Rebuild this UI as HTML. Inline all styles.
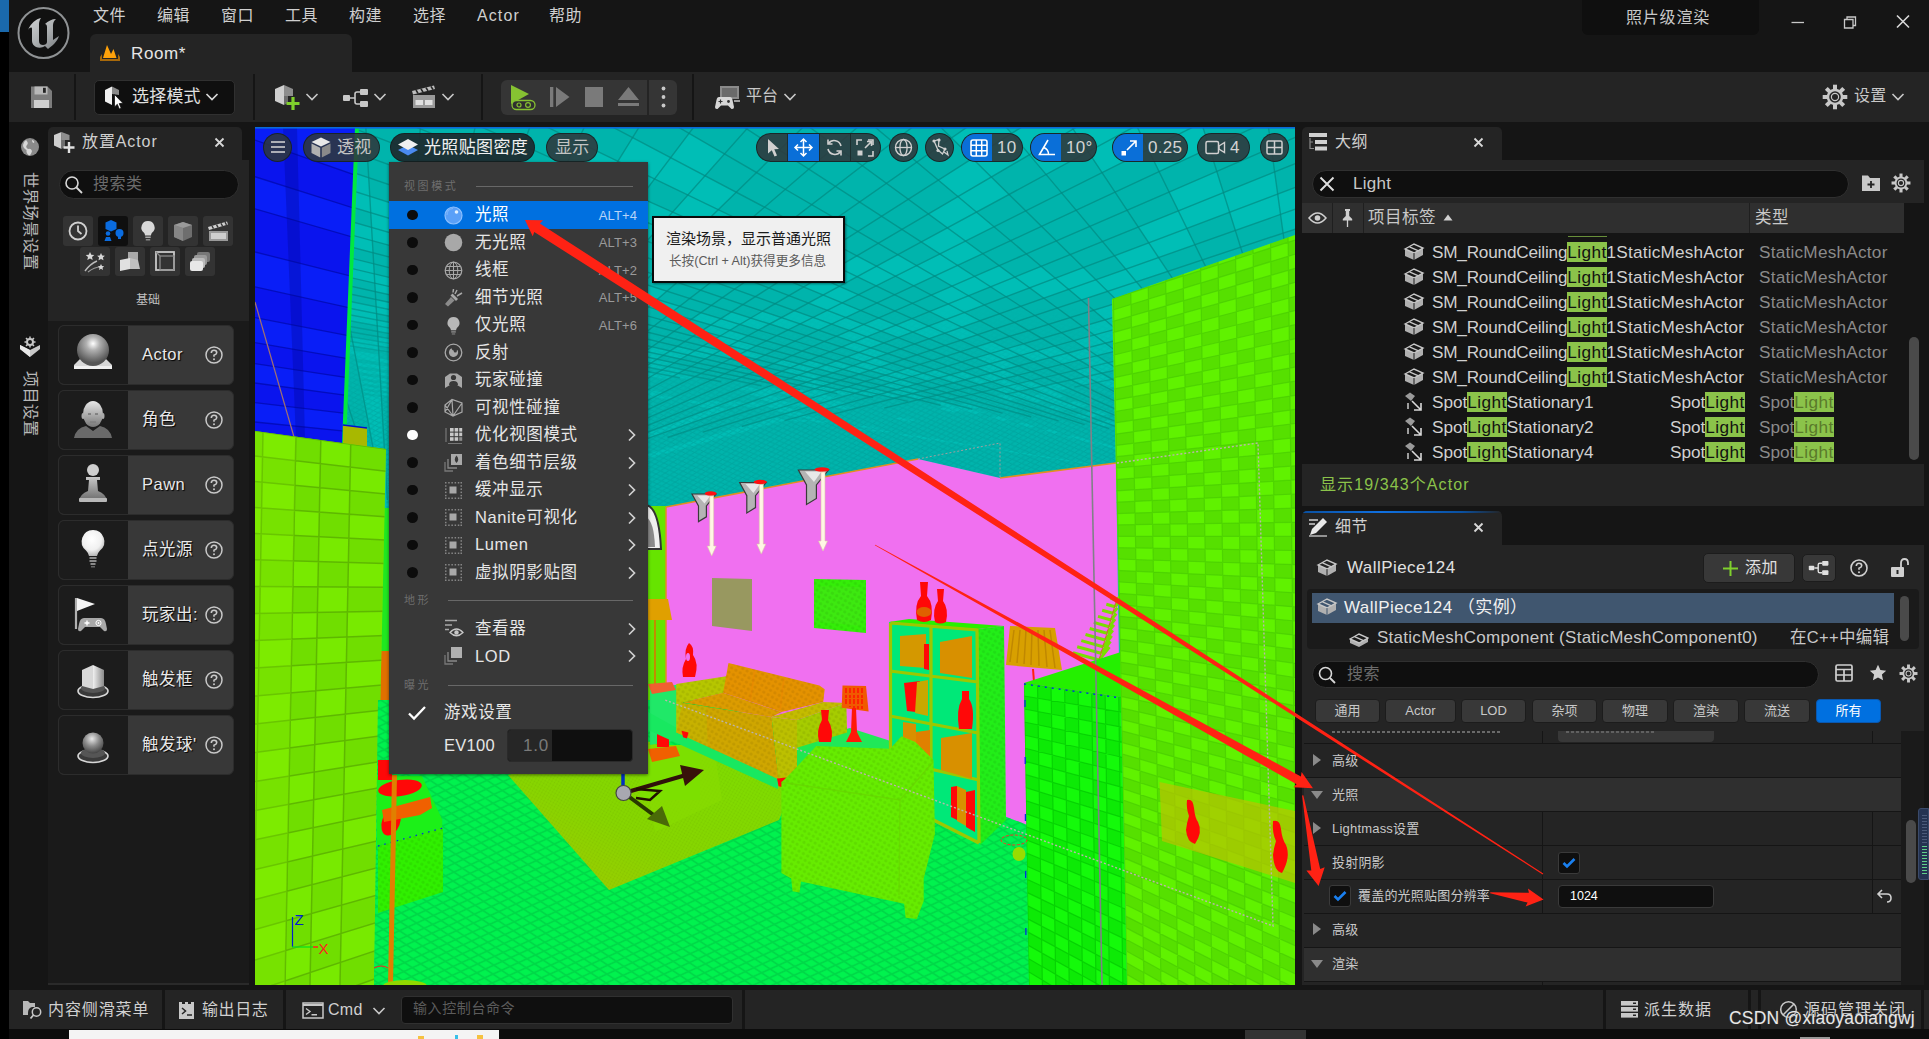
<!DOCTYPE html>
<html lang="zh">
<head>
<meta charset="utf-8">
<title>Room - Unreal Editor</title>
<style>
*{box-sizing:border-box;margin:0;padding:0}
html,body{width:1929px;height:1039px;overflow:hidden;background:#000}
body{font-family:"Liberation Sans","Noto Sans CJK SC",sans-serif;color:#c8c8c8;font-size:15px;position:relative}
.a{position:absolute}
.t{position:absolute;white-space:nowrap;line-height:1}
svg{position:absolute;overflow:visible}
#root{position:absolute;left:0;top:0;width:1929px;height:1039px;overflow:hidden;background:#151515}

.ol{font-size:17.2px;color:#d0d0d0;letter-spacing:0.18px;line-height:24px}
.ol span{letter-spacing:0.42px}.ol em{font-style:normal;letter-spacing:-0.22px}
.ty{color:#8a8a8a;letter-spacing:0.23px}
.fb{top:699px;height:24px;background:#383838;border:1px solid #1c1c1c;border-radius:4px;font-size:13px;color:#c8c8c8;text-align:center;line-height:22px}
.pr{left:0;width:597px;height:33px;background:#242424}
.cat{background:#2f2f2f}
.pt{font-size:13px;color:#c8c8c8;letter-spacing:0.2px}
.cb{width:22px;height:22px;background:#0f0f0f;border:1px solid #3a3a3a;border-radius:3px}
</style>
</head>
<body>
<div id="root">
<!--LEFTSTRIP-->
<div class="a" style="left:0;top:0;width:9px;height:1039px;background:#000"></div>
<div class="a" style="left:0;top:0;width:9px;height:32px;background:#1a69ac"></div>

<!-- title bar -->
<div class="a" style="left:9px;top:0;width:1920px;height:72px;background:#151515"></div>
<svg style="left:17px;top:6px" width="54" height="54" viewBox="0 0 54 54">
 <defs><linearGradient id="lg1" x1="0" y1="0" x2="1" y2="1"><stop offset="0" stop-color="#d0d2d3"/><stop offset="0.5" stop-color="#aeb1b3"/><stop offset="1" stop-color="#7b7f82"/></linearGradient></defs>
 <circle cx="26.5" cy="27" r="25" fill="#111" stroke="#8f9294" stroke-width="2"/>
 <path d="M11 24 C14 17 19 13 24 12 C22 15 22 17 22 19 L22 35 C22 38 24 39 26 39 C28 39 30 38 30 36 L30 21 C30 19 29 18 28 18 C31 15 35 13 39 13 C36 16 36 18 36 21 L36 34 L42 30 C40 36 35 40 31 43 L28 40 C25 42 22 42 19 41 C17 40 15 38 15 35 L15 23 C15 21 13 21 11 24 Z" fill="url(#lg1)"/>
</svg>
<div class="t" style="left:93px;top:8px;font-size:16px;color:#cfcfcf;letter-spacing:0.5px">文件</div>
<div class="t" style="left:157px;top:8px;font-size:16px;color:#cfcfcf;letter-spacing:0.5px">编辑</div>
<div class="t" style="left:221px;top:8px;font-size:16px;color:#cfcfcf;letter-spacing:0.5px">窗口</div>
<div class="t" style="left:285px;top:8px;font-size:16px;color:#cfcfcf;letter-spacing:0.5px">工具</div>
<div class="t" style="left:349px;top:8px;font-size:16px;color:#cfcfcf;letter-spacing:0.5px">构建</div>
<div class="t" style="left:413px;top:8px;font-size:16px;color:#cfcfcf;letter-spacing:0.5px">选择</div>
<div class="t" style="left:477px;top:8px;font-size:16px;color:#cfcfcf;letter-spacing:1.1px">Actor</div>
<div class="t" style="left:549px;top:8px;font-size:16px;color:#cfcfcf;letter-spacing:0.5px">帮助</div>
<div class="a" style="left:90px;top:34px;width:262px;height:40px;background:#242424;border-radius:6px 6px 0 0"></div>
<svg style="left:99px;top:44px" width="22" height="20" viewBox="0 0 22 20">
 <path d="M1 13 L3 10 L3 15 L19 15 L19 10 L21 13 L21 17 L1 17 Z" fill="#a8690a"/>
 <path d="M4 14 L8 1 L12 10 L14.5 5 L17.5 14 Z" fill="#ffa20a"/>
</svg>
<div class="t" style="left:131px;top:45px;font-size:17px;color:#e6e6e6;letter-spacing:0.6px">Room*</div>
<div class="a" style="left:1582px;top:0;width:177px;height:35px;background:#0f0f0f;border-radius:0 0 6px 6px"></div>
<div class="t" style="left:1626px;top:10px;font-size:16px;color:#c8c8c8;letter-spacing:0.8px">照片级渲染</div>
<svg style="left:1785px;top:10px" width="130" height="24" viewBox="0 0 130 24">
 <path d="M6.5 12.5 H19" stroke="#c8c8c8" stroke-width="1.3" fill="none"/>
 <path d="M59.5 9.5 h8.5 v8.5 h-8.5 z M62 9.5 v-2.5 h8.5 v8.5 h-2.5" stroke="#c8c8c8" stroke-width="1.3" fill="none"/>
 <path d="M112 5.5 L124 17.5 M124 5.5 L112 17.5" stroke="#d8d8d8" stroke-width="1.6" fill="none"/>
</svg>


<!-- toolbar -->
<div class="a" style="left:9px;top:72px;width:1920px;height:50px;background:#242424"></div>
<div class="a" style="left:74px;top:74px;width:2px;height:46px;background:#151515"></div>
<div class="a" style="left:253px;top:74px;width:2px;height:46px;background:#151515"></div>
<div class="a" style="left:481px;top:74px;width:2px;height:46px;background:#151515"></div>
<div class="a" style="left:692px;top:74px;width:2px;height:46px;background:#151515"></div>
<svg style="left:30px;top:86px" width="23" height="23" viewBox="0 0 23 23">
 <path d="M1 0.5 H17.5 L22 5 V22 H1 Z" fill="#7d7d7d"/>
 <rect x="4.5" y="0.5" width="13" height="8" fill="#b8b8b8"/><rect x="13" y="1.8" width="2.8" height="5" fill="#222"/>
 <rect x="4" y="14" width="15" height="8" fill="#d0d0d0"/>
</svg>
<div class="a" style="left:94px;top:80px;width:141px;height:35px;background:#0f0f0f;border:1px solid #303030;border-radius:5px"></div>
<svg style="left:104px;top:86px" width="20" height="24" viewBox="0 0 20 24">
 <path d="M1 4 L8 0.5 L8 19 L1 15.5 Z" fill="#f0f0f0"/><path d="M8 0.5 L15 4 L15 9 L8 8 Z" fill="#8a8a8a"/>
 <path d="M10.5 8.5 L10.5 21 L13.3 18.3 L15.3 23 L17.2 22.2 L15.2 17.6 L19 17.3 Z" fill="#fff" stroke="#111" stroke-width="0.8"/>
</svg>
<div class="t" style="left:132px;top:88px;font-size:17px;color:#e0e0e0;letter-spacing:0.2px">选择模式</div>
<svg style="left:205px;top:92px" width="14" height="10" viewBox="0 0 14 10"><path d="M1.5 2 L7 7.5 L12.5 2" stroke="#d8d8d8" stroke-width="1.7" fill="none"/></svg>
<!-- add -->
<svg style="left:274px;top:84px" width="28" height="27" viewBox="0 0 28 27">
 <path d="M1 5 L10 1 L10 21 L1 17 Z" fill="#cfcfcf"/><path d="M10 1 L19 5 L19 12 L10 12 Z" fill="#8d8d8d"/><path d="M10 12 L14 12 L14 19 L10 21 Z" fill="#6d6d6d"/>
 <path d="M19 13 V26 M12.5 19.5 H25.5" stroke="#7fd02c" stroke-width="3.2" fill="none"/>
</svg>
<svg style="left:305px;top:92px" width="14" height="10" viewBox="0 0 14 10"><path d="M1.5 2 L7 7.5 L12.5 2" stroke="#c8c8c8" stroke-width="1.6" fill="none"/></svg>
<!-- blueprint -->
<svg style="left:342px;top:88px" width="28" height="20" viewBox="0 0 28 20">
 <rect x="1" y="7" width="7" height="6" rx="1" fill="#c8c8c8"/><rect x="18" y="1" width="8" height="6" rx="1" fill="#c8c8c8"/><rect x="18" y="13" width="8" height="6" rx="1" fill="#c8c8c8"/>
 <path d="M8 10 H13 M18 4 H15 Q13 4 13 6 V14 Q13 16 15 16 H18" stroke="#c8c8c8" stroke-width="1.6" fill="none"/>
</svg>
<svg style="left:373px;top:92px" width="14" height="10" viewBox="0 0 14 10"><path d="M1.5 2 L7 7.5 L12.5 2" stroke="#c8c8c8" stroke-width="1.6" fill="none"/></svg>
<!-- clapper -->
<svg style="left:411px;top:84px" width="26" height="25" viewBox="0 0 26 25">
 <path d="M1 7 L23 1.5 L24 5 L2 10.5 Z" fill="#bdbdbd"/><path d="M5 6 l2 3.3 M10 4.8 l2 3.3 M15 3.6 l2 3.3 M20 2.4 l2 3.3" stroke="#242424" stroke-width="1.6"/>
 <rect x="2" y="11" width="22" height="13" fill="#9a9a9a"/><rect x="4.5" y="16" width="7.5" height="5" fill="#e0e0e0"/><rect x="14" y="16" width="7.5" height="5" fill="#e0e0e0"/>
</svg>
<svg style="left:441px;top:92px" width="14" height="10" viewBox="0 0 14 10"><path d="M1.5 2 L7 7.5 L12.5 2" stroke="#c8c8c8" stroke-width="1.6" fill="none"/></svg>
<!-- play group -->
<div class="a" style="left:501px;top:80px;width:176px;height:35px;background:#353535;border-radius:6px"></div>
<div class="a" style="left:647px;top:80px;width:2px;height:35px;background:#242424"></div>
<svg style="left:509px;top:83px" width="28" height="28" viewBox="0 0 28 28">
 <path d="M2 2 L20 11 L2 21 Z" fill="#86c232"/>
 <rect x="3" y="17.5" width="23" height="9" rx="4.5" fill="#2f2f2f" stroke="#86c232" stroke-width="1.3"/>
 <circle cx="10" cy="22" r="2" fill="none" stroke="#86c232" stroke-width="1.2"/><circle cx="19" cy="22" r="2.4" fill="none" stroke="#86c232" stroke-width="1.2"/>
</svg>
<svg style="left:549px;top:86px" width="22" height="22" viewBox="0 0 22 22"><rect x="1" y="1" width="3.3" height="20" fill="#7a7a7a"/><path d="M7 1 L20.5 11 L7 21 Z" fill="#7a7a7a"/></svg>
<div class="a" style="left:585px;top:87px;width:18px;height:20px;background:#7a7a7a"></div>
<svg style="left:617px;top:86px" width="23" height="22" viewBox="0 0 23 22"><path d="M11.5 1 L22 14 H1 Z" fill="#7a7a7a"/><rect x="1" y="17" width="21" height="3" fill="#7a7a7a"/></svg>
<svg style="left:660px;top:85px" width="7" height="24" viewBox="0 0 7 24"><circle cx="3.5" cy="3.5" r="1.9" fill="#c8c8c8"/><circle cx="3.5" cy="12" r="1.9" fill="#c8c8c8"/><circle cx="3.5" cy="20.5" r="1.9" fill="#c8c8c8"/></svg>
<!-- platform -->
<svg style="left:714px;top:85px" width="28" height="25" viewBox="0 0 28 25">
 <rect x="6" y="1" width="19" height="13" fill="#8a8a8a"/><rect x="8" y="3" width="15" height="9" fill="#6a6a6a"/><path d="M20 16 h6" stroke="#c8c8c8" stroke-width="1.5"/>
 <path d="M5 12 Q3 12 2.5 15 L1 22 Q1 24.5 3.5 24 L7 20.5 H14 L17.5 24 Q20 24.5 20 22 L18.5 15 Q18 12 16 12 Z" fill="#d6d6d6"/>
 <path d="M6.5 14.5 v4 M4.5 16.5 h4" stroke="#333" stroke-width="1.2"/><circle cx="14.5" cy="16.5" r="1.4" fill="#333"/>
</svg>
<div class="t" style="left:746px;top:88px;font-size:16px;color:#c8c8c8">平台</div>
<svg style="left:783px;top:92px" width="14" height="10" viewBox="0 0 14 10"><path d="M1.5 2 L7 7.5 L12.5 2" stroke="#c8c8c8" stroke-width="1.6" fill="none"/></svg>
<!-- settings -->
<svg style="left:1822px;top:84px" width="26" height="26" viewBox="0 0 26 26">
 <g transform="translate(13 13)" fill="#c8c8c8"><circle r="8.3"/>
 <g id="gt"><rect x="-2" y="-12.3" width="4" height="5" /></g>
 <use href="#gt" transform="rotate(45)"/><use href="#gt" transform="rotate(90)"/><use href="#gt" transform="rotate(135)"/><use href="#gt" transform="rotate(180)"/><use href="#gt" transform="rotate(225)"/><use href="#gt" transform="rotate(270)"/><use href="#gt" transform="rotate(315)"/>
 <circle r="5.8" fill="#242424"/><circle r="3.6" fill="none" stroke="#c8c8c8" stroke-width="1.2"/></g>
</svg>
<div class="t" style="left:1854px;top:88px;font-size:16px;color:#c8c8c8;letter-spacing:0.3px">设置</div>
<svg style="left:1891px;top:92px" width="14" height="10" viewBox="0 0 14 10"><path d="M1.5 2 L7 7.5 L12.5 2" stroke="#c8c8c8" stroke-width="1.6" fill="none"/></svg>


<!-- left sidebar -->
<svg style="left:20px;top:137px" width="20" height="20" viewBox="0 0 20 20"><circle cx="10" cy="10" r="9" fill="#8a8a8a"/><path d="M6 3 Q9 6 7 8 Q5 10 8 12 Q11 11 12 14 Q11 18 9 18.5 Q6 16 6.5 13 Q3 11 3 8 Q4 4 6 3 Z M12 3 Q15 4 14 6 Q12 6 12 3 Z" fill="#d8d8d8"/></svg>
<div class="t" style="left:39px;top:172px;font-size:16px;color:#b8b8b8;letter-spacing:0.4px;transform-origin:0 0;transform:rotate(90deg);line-height:18px">世界场景设置</div>
<svg style="left:19px;top:336px" width="22" height="22" viewBox="0 0 22 22"><path d="M1 9 L11 14 L21 9 L21 13 L11 21 L1 13 Z" fill="#c8c8c8"/><path d="M11 14 L11 21 L1 13 L1 9 Z" fill="#e8e8e8"/><circle cx="11" cy="6" r="3" fill="none" stroke="#c8c8c8" stroke-width="2"/><path d="M11 0.5 v2 M11 9.5 v2 M5.5 6 h2 M14.5 6 h2 M7 2 l1.5 1.5 M15 2 l-1.5 1.5 M7 10 l1.5 -1.5 M15 10 l-1.5 -1.5" stroke="#c8c8c8" stroke-width="1.5"/></svg>
<div class="t" style="left:39px;top:371px;font-size:16px;color:#b8b8b8;letter-spacing:0.4px;transform-origin:0 0;transform:rotate(90deg);line-height:18px">项目设置</div>
<!-- place actor panel -->
<div class="a" style="left:48px;top:127px;width:194px;height:33px;background:#242424;border-radius:5px 5px 0 0"></div>
<svg style="left:53px;top:131px" width="24" height="24" viewBox="0 0 24 24">
 <path d="M1 4 L8.5 1 L8.5 18 L1 14.5 Z" fill="#cfcfcf"/><path d="M8.5 1 L16.5 4 L16.5 9 L8.5 9 Z" fill="#8d8d8d"/><path d="M8.5 9 L12 9 L12 16 L8.5 18 Z" fill="#6d6d6d"/>
 <path d="M16 11 V22 M10.5 16.5 H21.5" stroke="#e0e0e0" stroke-width="2.4" fill="none"/>
</svg>
<div class="t" style="left:82px;top:134px;font-size:16px;color:#cfcfcf;letter-spacing:0.9px">放置Actor</div>
<svg style="left:214px;top:137px" width="11" height="11" viewBox="0 0 11 11"><path d="M1.5 1.5 L9.5 9.5 M9.5 1.5 L1.5 9.5" stroke="#d8d8d8" stroke-width="1.8"/></svg>
<div class="a" style="left:48px;top:160px;width:201px;height:161px;background:#242424"></div>
<div class="a" style="left:48px;top:321px;width:201px;height:664px;background:#1a1a1a"></div>
<div class="a" style="left:48px;top:983px;width:201px;height:2px;background:#2a2a2a"></div>
<div class="a" style="left:59px;top:170px;width:180px;height:29px;background:#0f0f0f;border:1px solid #303030;border-radius:15px"></div>
<svg style="left:64px;top:175px" width="20" height="20" viewBox="0 0 20 20"><circle cx="8" cy="8" r="6" fill="none" stroke="#d8d8d8" stroke-width="1.6"/><path d="M12.5 12.5 L18 18" stroke="#d8d8d8" stroke-width="1.8"/></svg>
<div class="t" style="left:93px;top:176px;font-size:16px;color:#6c6c6c;letter-spacing:0.5px">搜索类</div>
<div class="a" style="left:63px;top:216px;width:30px;height:30px;background:#333333;border-radius:3px"></div>
<div class="a" style="left:98px;top:216px;width:30px;height:30px;background:#0f0f0f;border-radius:3px"></div>
<div class="a" style="left:133px;top:216px;width:30px;height:30px;background:#333333;border-radius:3px"></div>
<div class="a" style="left:168px;top:216px;width:30px;height:30px;background:#333333;border-radius:3px"></div>
<div class="a" style="left:203px;top:216px;width:30px;height:30px;background:#333333;border-radius:3px"></div>
<div class="a" style="left:80px;top:247px;width:30px;height:29px;background:#333333;border-radius:3px"></div>
<div class="a" style="left:115px;top:247px;width:30px;height:29px;background:#333333;border-radius:3px"></div>
<div class="a" style="left:150px;top:247px;width:30px;height:29px;background:#333333;border-radius:3px"></div>
<div class="a" style="left:185px;top:247px;width:30px;height:29px;background:#333333;border-radius:3px"></div>

<svg style="left:63px;top:216px" width="30" height="30" viewBox="0 0 30 30"><circle cx="15" cy="15" r="8.5" fill="none" stroke="#d0d0d0" stroke-width="1.8"/><path d="M15 9.5 V15 L18.5 18" stroke="#d0d0d0" stroke-width="1.8" fill="none"/></svg>
<svg style="left:98px;top:216px" width="30" height="30" viewBox="0 0 30 30"><path d="M13 4 L18.5 6.5 V13 L13 15.5 L7.5 13 V6.5 Z" fill="#0a6ce0"/><circle cx="21.5" cy="17" r="4" fill="#0a6ce0"/><path d="M20 20 h3 v3 h-3z" fill="#0a6ce0"/><circle cx="10" cy="17.5" r="2.3" fill="#0a6ce0"/><path d="M8 21 h4 l1.5 4 h-7z" fill="#0a6ce0"/></svg>
<svg style="left:133px;top:216px" width="30" height="30" viewBox="0 0 30 30"><path d="M15 5 a6.5 6.5 0 0 1 4 11.7 q-1 1 -1 2.8 h-6 q0 -1.8 -1 -2.8 a6.5 6.5 0 0 1 4 -11.7z" fill="#d8d8d8"/><rect x="12.3" y="20.5" width="5.4" height="1.5" fill="#aaa"/><rect x="12.8" y="23" width="4.4" height="1.5" fill="#888"/></svg>
<svg style="left:168px;top:216px" width="30" height="30" viewBox="0 0 30 30"><path d="M6 9 L15 6 L24 9 L24 21 L15 25 L6 21 Z" fill="#6e6e6e"/><path d="M6 9 L15 12 L15 25 L6 21 Z" fill="#868686"/><path d="M6 9 L15 6 L24 9 L15 12 Z" fill="#9a9a9a"/></svg>
<svg style="left:203px;top:216px" width="30" height="30" viewBox="0 0 30 30"><path d="M5 11 L24 5.5 L25 8.5 L6 14 Z" fill="#d0d0d0"/><path d="M9 10 l1.5 2.6 M13.5 8.7 l1.5 2.6 M18 7.4 l1.5 2.6 M22 6.2 l1.5 2.6" stroke="#333" stroke-width="1.4"/><rect x="6" y="15" width="19" height="10" fill="#9a9a9a"/><rect x="8" y="17" width="15" height="6" fill="#cfcfcf"/></svg>
<svg style="left:80px;top:247px" width="30" height="29" viewBox="0 0 30 29"><path d="M5 24 Q10 17 17 14" stroke="#bbb" stroke-width="1.4" fill="none"/><path d="M8 25 Q14 20 21 20" stroke="#999" stroke-width="1.2" fill="none"/><path d="M10 5 l1.3 2.8 3 .3 -2.3 2 .7 3 -2.7-1.6 -2.7 1.6 .7-3 -2.3-2 3-.3z" fill="#d8d8d8"/><path d="M21 6 l1.2 2.5 2.7 .3 -2 1.8 .6 2.7 -2.5-1.4 -2.5 1.4 .6-2.7 -2-1.8 2.7-.3z" fill="#d8d8d8"/><path d="M21 17 l1 2 2.2 .2 -1.7 1.5 .5 2.2 -2-1.2 -2 1.2 .5-2.2 -1.7-1.5 2.2-.2z" fill="#d8d8d8"/></svg>
<svg style="left:115px;top:247px" width="30" height="29" viewBox="0 0 30 29"><path d="M13 5 L23 5 L23 17 L13 17 Z" fill="#a8a8a8"/><path d="M5 13 L15 11 L15 22 L5 24 Z" fill="#e0e0e0"/><path d="M15 11 L23 13 L25 22 L15 22 Z" fill="#c0c0c0"/></svg>
<svg style="left:150px;top:247px" width="30" height="29" viewBox="0 0 30 29"><rect x="6" y="5" width="18" height="18" fill="none" stroke="#c8c8c8" stroke-width="1.8"/><rect x="10" y="9" width="14" height="14" fill="none" stroke="#8a8a8a" stroke-width="1.3"/><path d="M6 5 L10 9" stroke="#8a8a8a" stroke-width="1.2"/></svg>
<svg style="left:185px;top:247px" width="30" height="29" viewBox="0 0 30 29"><rect x="12" y="5" width="13" height="10" rx="2" fill="#777"/><rect x="9" y="8" width="13" height="10" rx="2" fill="#999"/><rect x="7" y="11" width="13" height="10" rx="2" fill="#bbb"/><rect x="5" y="14" width="13" height="10" rx="2" fill="#e8e8e8"/></svg>
<div class="t" style="left:136px;top:294px;font-size:12px;color:#c0c0c0">基础</div>
<div class="a" style="left:58px;top:325px;width:176px;height:60px;background:#383838;border:1px solid #2c2c2c;border-radius:6px;overflow:hidden"><div class="a" style="left:0;top:0;width:69px;height:60px;background:#1c1c1c"></div></div>
<svg style="left:58px;top:325px" width="70" height="60" viewBox="0 0 70 60"><defs><radialGradient id="sg" cx="0.5" cy="0.3" r="0.6"><stop offset="0" stop-color="#fff"/><stop offset="0.35" stop-color="#b0b0b0"/><stop offset="1" stop-color="#555"/></radialGradient></defs><path d="M16 40 L22 34 H48 L54 40 V44 H16 Z" fill="#d8d8d8"/><rect x="16" y="41" width="38" height="3" fill="#f0f0f0"/><circle cx="35" cy="25" r="16" fill="url(#sg)"/></svg>
<div class="t" style="left:142px;top:346px;font-size:16.5px;color:#e8e8e8;letter-spacing:0.5px;text-shadow:1px 1px 1px #000">Actor</div>
<svg style="left:204px;top:345px" width="20" height="20" viewBox="0 0 20 20"><circle cx="10" cy="10" r="8" fill="none" stroke="#c8c8c8" stroke-width="1.5"/><path d="M7.3 8 Q7.3 5.3 10 5.3 Q12.7 5.3 12.7 7.8 Q12.7 9.3 10 10.3 V11.8" stroke="#c8c8c8" stroke-width="1.6" fill="none"/><circle cx="10" cy="14.3" r="1" fill="#c8c8c8"/></svg>
<div class="a" style="left:58px;top:390px;width:176px;height:60px;background:#383838;border:1px solid #2c2c2c;border-radius:6px;overflow:hidden"><div class="a" style="left:0;top:0;width:69px;height:60px;background:#1c1c1c"></div></div>
<svg style="left:58px;top:390px" width="70" height="60" viewBox="0 0 70 60"><defs><linearGradient id="cg" x1="0" y1="0" x2="0" y2="1"><stop offset="0" stop-color="#e8e8e8"/><stop offset="1" stop-color="#777"/></linearGradient></defs><path d="M16 48 Q18 38 28 36 L35 41 L42 36 Q52 38 54 48 Z" fill="#6a6a6a"/><ellipse cx="35" cy="24" rx="10" ry="13" fill="url(#cg)"/><ellipse cx="25" cy="26" rx="1.5" ry="3" fill="#aaa"/><ellipse cx="45" cy="26" rx="1.5" ry="3" fill="#aaa"/><path d="M30 24 h3 M37 24 h3" stroke="#555" stroke-width="1"/><path d="M32 32 h6" stroke="#777" stroke-width="1"/></svg>
<div class="t" style="left:142px;top:411px;font-size:16.5px;color:#e8e8e8;letter-spacing:0.5px;text-shadow:1px 1px 1px #000">角色</div>
<svg style="left:204px;top:410px" width="20" height="20" viewBox="0 0 20 20"><circle cx="10" cy="10" r="8" fill="none" stroke="#c8c8c8" stroke-width="1.5"/><path d="M7.3 8 Q7.3 5.3 10 5.3 Q12.7 5.3 12.7 7.8 Q12.7 9.3 10 10.3 V11.8" stroke="#c8c8c8" stroke-width="1.6" fill="none"/><circle cx="10" cy="14.3" r="1" fill="#c8c8c8"/></svg>
<div class="a" style="left:58px;top:455px;width:176px;height:60px;background:#383838;border:1px solid #2c2c2c;border-radius:6px;overflow:hidden"><div class="a" style="left:0;top:0;width:69px;height:60px;background:#1c1c1c"></div></div>
<svg style="left:58px;top:455px" width="70" height="60" viewBox="0 0 70 60"><defs><linearGradient id="pg" x1="0" y1="0" x2="0" y2="1"><stop offset="0" stop-color="#c8c8c8"/><stop offset="1" stop-color="#6a6a6a"/></linearGradient></defs><circle cx="35" cy="15" r="6" fill="#cfcfcf"/><path d="M28 22 H42 V25 H39 L40 36 Q48 39 49 46 H21 Q22 39 30 36 L31 25 H28 Z" fill="url(#pg)"/><rect x="21" y="43" width="28" height="4" rx="1" fill="#b8b8b8"/></svg>
<div class="t" style="left:142px;top:476px;font-size:16.5px;color:#e8e8e8;letter-spacing:0.5px;text-shadow:1px 1px 1px #000">Pawn</div>
<svg style="left:204px;top:475px" width="20" height="20" viewBox="0 0 20 20"><circle cx="10" cy="10" r="8" fill="none" stroke="#c8c8c8" stroke-width="1.5"/><path d="M7.3 8 Q7.3 5.3 10 5.3 Q12.7 5.3 12.7 7.8 Q12.7 9.3 10 10.3 V11.8" stroke="#c8c8c8" stroke-width="1.6" fill="none"/><circle cx="10" cy="14.3" r="1" fill="#c8c8c8"/></svg>
<div class="a" style="left:58px;top:520px;width:176px;height:60px;background:#383838;border:1px solid #2c2c2c;border-radius:6px;overflow:hidden"><div class="a" style="left:0;top:0;width:69px;height:60px;background:#1c1c1c"></div></div>
<svg style="left:58px;top:520px" width="70" height="60" viewBox="0 0 70 60"><defs><radialGradient id="bg2" cx="0.45" cy="0.35" r="0.7"><stop offset="0" stop-color="#fff"/><stop offset="0.6" stop-color="#f0f0f0"/><stop offset="1" stop-color="#aaa"/></radialGradient></defs><path d="M35 10 a11.5 11.5 0 0 1 7 20.5 q-2.5 2.5 -3 5.5 h-8 q-.5 -3 -3 -5.5 a11.5 11.5 0 0 1 7 -20.5z" fill="url(#bg2)"/><path d="M31.5 38 h7 M31.5 41 h7 M32.5 44 h5" stroke="#8a8a8a" stroke-width="2"/><path d="M33 46 h4 v1.5 h-4z" fill="#666"/></svg>
<div class="t" style="left:142px;top:541px;font-size:16.5px;color:#e8e8e8;letter-spacing:0.5px;text-shadow:1px 1px 1px #000">点光源</div>
<svg style="left:204px;top:540px" width="20" height="20" viewBox="0 0 20 20"><circle cx="10" cy="10" r="8" fill="none" stroke="#c8c8c8" stroke-width="1.5"/><path d="M7.3 8 Q7.3 5.3 10 5.3 Q12.7 5.3 12.7 7.8 Q12.7 9.3 10 10.3 V11.8" stroke="#c8c8c8" stroke-width="1.6" fill="none"/><circle cx="10" cy="14.3" r="1" fill="#c8c8c8"/></svg>
<div class="a" style="left:58px;top:585px;width:176px;height:60px;background:#383838;border:1px solid #2c2c2c;border-radius:6px;overflow:hidden"><div class="a" style="left:0;top:0;width:69px;height:60px;background:#1c1c1c"></div></div>
<svg style="left:58px;top:585px" width="70" height="60" viewBox="0 0 70 60"><path d="M18 13 V44" stroke="#b0b0b0" stroke-width="2.2"/><path d="M19 13 L37 19 L19 26 Z" fill="#f4f4f4"/><path d="M26 33 Q22 33 21 39 L20 44 Q20 47 23 46 L27 42 H42 L46 46 Q49 47 49 44 L48 39 Q47 33 43 33 Z" fill="#a8a8a8"/><path d="M29 35.5 v5 M26.5 38 h5" stroke="#fff" stroke-width="1.4"/><circle cx="40.5" cy="38" r="2.6" fill="none" stroke="#fff" stroke-width="1"/><circle cx="40.5" cy="38" r="0.9" fill="#fff"/></svg>
<div class="t" style="left:142px;top:606px;font-size:16.5px;color:#e8e8e8;letter-spacing:0.5px;width:60px;overflow:hidden;text-shadow:1px 1px 1px #000">玩家出:</div>
<svg style="left:204px;top:605px" width="20" height="20" viewBox="0 0 20 20"><circle cx="10" cy="10" r="8" fill="none" stroke="#c8c8c8" stroke-width="1.5"/><path d="M7.3 8 Q7.3 5.3 10 5.3 Q12.7 5.3 12.7 7.8 Q12.7 9.3 10 10.3 V11.8" stroke="#c8c8c8" stroke-width="1.6" fill="none"/><circle cx="10" cy="14.3" r="1" fill="#c8c8c8"/></svg>
<div class="a" style="left:58px;top:650px;width:176px;height:60px;background:#383838;border:1px solid #2c2c2c;border-radius:6px;overflow:hidden"><div class="a" style="left:0;top:0;width:69px;height:60px;background:#1c1c1c"></div></div>
<svg style="left:58px;top:650px" width="70" height="60" viewBox="0 0 70 60"><defs><linearGradient id="tb" x1="0" y1="0" x2="1" y2="0"><stop offset="0" stop-color="#f0f0f0"/><stop offset="1" stop-color="#8a8a8a"/></linearGradient></defs><ellipse cx="35" cy="41" rx="15" ry="6.5" fill="#3a3a3a" stroke="#d8d8d8" stroke-width="1.6"/><ellipse cx="35" cy="38" rx="12" ry="5" fill="#555"/><path d="M24 20 L35 15 L35 39 L24 36 Z" fill="#d8d8d8"/><path d="M35 15 L46 20 L46 36 L35 39 Z" fill="url(#tb)"/></svg>
<div class="t" style="left:142px;top:671px;font-size:16.5px;color:#e8e8e8;letter-spacing:0.5px;text-shadow:1px 1px 1px #000">触发框</div>
<svg style="left:204px;top:670px" width="20" height="20" viewBox="0 0 20 20"><circle cx="10" cy="10" r="8" fill="none" stroke="#c8c8c8" stroke-width="1.5"/><path d="M7.3 8 Q7.3 5.3 10 5.3 Q12.7 5.3 12.7 7.8 Q12.7 9.3 10 10.3 V11.8" stroke="#c8c8c8" stroke-width="1.6" fill="none"/><circle cx="10" cy="14.3" r="1" fill="#c8c8c8"/></svg>
<div class="a" style="left:58px;top:715px;width:176px;height:60px;background:#383838;border:1px solid #2c2c2c;border-radius:6px;overflow:hidden"><div class="a" style="left:0;top:0;width:69px;height:60px;background:#1c1c1c"></div></div>
<svg style="left:58px;top:715px" width="70" height="60" viewBox="0 0 70 60"><defs><radialGradient id="ts" cx="0.45" cy="0.3" r="0.7"><stop offset="0" stop-color="#e8e8e8"/><stop offset="0.5" stop-color="#8a8a8a"/><stop offset="1" stop-color="#444"/></radialGradient></defs><ellipse cx="35" cy="41" rx="15" ry="6.5" fill="#3a3a3a" stroke="#d8d8d8" stroke-width="1.6"/><ellipse cx="35" cy="38" rx="12" ry="5" fill="#555"/><circle cx="35" cy="28" r="10.5" fill="url(#ts)"/></svg>
<div class="t" style="left:142px;top:736px;font-size:16.5px;color:#e8e8e8;letter-spacing:0.5px;width:60px;overflow:hidden;text-shadow:1px 1px 1px #000">触发球'</div>
<svg style="left:204px;top:735px" width="20" height="20" viewBox="0 0 20 20"><circle cx="10" cy="10" r="8" fill="none" stroke="#c8c8c8" stroke-width="1.5"/><path d="M7.3 8 Q7.3 5.3 10 5.3 Q12.7 5.3 12.7 7.8 Q12.7 9.3 10 10.3 V11.8" stroke="#c8c8c8" stroke-width="1.6" fill="none"/><circle cx="10" cy="14.3" r="1" fill="#c8c8c8"/></svg>

<svg style="left:255px;top:127px" width="1040" height="858" viewBox="255 127 1040 858">
<defs>
<clipPath id="vp"><rect x="255" y="127" width="1040" height="858"/></clipPath>
<clipPath id="cc"><polygon points="255.0,127.0 1295.0,127.0 1295.0,235.0 1112.0,299.0 1116.0,463.0 1000.0,478.0 918.0,459.0 666.0,507.0 648.0,507.0 648.0,520.0 386.0,520.0 386.0,449.0 343.0,443.0 357.0,127.0"/></clipPath>
<clipPath id="cb"><polygon points="255.0,127.0 357.0,127.0 343.0,444.0 255.0,432.0"/></clipPath>
<clipPath id="ccab"><polygon points="255.0,431.0 386.0,449.0 374.0,985.0 255.0,985.0"/></clipPath>
<clipPath id="clw"><polygon points="1112.0,299.0 1295.0,235.0 1295.0,985.0 1127.0,985.0 1118.0,560.0"/></clipPath>
<clipPath id="cgb"><polygon points="1024.0,683.0 1121.0,697.0 1127.0,985.0 1029.0,985.0"/></clipPath>
<pattern id="dots" width="5" height="5" patternUnits="userSpaceOnUse" patternTransform="rotate(30)"><circle cx="2.5" cy="2.5" r="1.6" fill="#000" opacity="0.07"/></pattern>
<pattern id="dots2" width="3" height="3" patternUnits="userSpaceOnUse" patternTransform="rotate(30)"><circle cx="1.5" cy="1.5" r="0.9" fill="#000" opacity="0.06"/></pattern>
<pattern id="fl" width="8.5" height="8.5" patternUnits="userSpaceOnUse" patternTransform="matrix(1 -0.45 0.9 0.6 0 0)"><rect width="8.5" height="8.5" fill="none" stroke="#00b840" stroke-width="2" opacity="0.42"/></pattern>
<linearGradient id="sofa1" x1="0" y1="0" x2="1" y2="0.3"><stop offset="0" stop-color="#c4c400"/><stop offset="0.5" stop-color="#d8a800"/><stop offset="1" stop-color="#c0c800"/></linearGradient>
<linearGradient id="rugg" x1="0" y1="1" x2="1" y2="0"><stop offset="0" stop-color="#a4ca00"/><stop offset="0.4" stop-color="#88d600"/><stop offset="1" stop-color="#7ce000"/></linearGradient>
<pattern id="xh" width="9" height="5" patternUnits="userSpaceOnUse" patternTransform="rotate(-6)"><path d="M0 0L9 5M9 0L0 5" stroke="#009a94" stroke-width="1" opacity="0.55"/></pattern>
<linearGradient id="xg" x1="0" y1="0" x2="0" y2="1"><stop offset="0.45" stop-color="#000"/><stop offset="0.75" stop-color="#fff"/></linearGradient><mask id="xm"><rect x="255" y="127" width="1040" height="400" fill="url(#xg)"/></mask>
</defs>
<g clip-path="url(#vp)">
<rect x="255" y="127" width="1040" height="858" fill="#00beb6"/>
<g clip-path="url(#cc)">
<path d="M124250.7 19001.7L32216.1 5276.4L73310.7 11629.5L-99318.7 -14646.6ZM73310.7 11629.5L26928.5 4569.6L51296.1 8442.0L-210591.8 -32260.8ZM-41298.8 -6088.7L1204333.2 191678.5L-52772.1 -8096.1L-22295.3 -3150.8ZM-52772.1 -8096.1L149618.0 24744.5L-74543.3 -11902.5L-25032.8 -3687.9ZM-74543.3 -11902.5L77951.5 13398.9L-131694.3 -21889.4L-28752.7 -4416.4ZM-131694.3 -21889.4L51859.1 9266.4L-682263.9 -118072.8L-34094.4 -5461.1ZM-682263.9 -118072.8L38362.5 7127.4L200475.3 36131.8L-42405.9 -7084.6ZM200475.3 36131.8L30118.5 5819.8L84816.0 15923.9L-57101.8 -9952.5ZM84816.0 15923.9L24563.0 4937.7L52730.1 10315.6L-90083.8 -16384.7ZM52730.1 10315.6L20567.5 4302.5L37683.2 7683.9L-231387.4 -43930.3ZM-34110.4 -6264.6L350720.1 69527.6L-44213.0 -8495.5L-17788.8 -3148.4ZM-44213.0 -8495.5L95715.2 19819.9L-64503.1 -12972.0L-19968.3 -3705.7ZM-64503.1 -12972.0L54055.2 11696.3L-125949.9 -26520.8L-22967.1 -4470.8ZM-125949.9 -26520.8L36978.7 8364.3L9166174.4 2021760.1L-27348.2 -5586.6ZM9166174.4 2021760.1L27688.8 6550.1L115160.1 26619.8L-34344.2 -7365.5ZM115160.1 26619.8L21852.2 5409.0L56089.7 13594.8L-47273.1 -10649.3ZM56089.7 13594.8L17847.7 4625.0L36239.6 9215.3L-79179.5 -18746.5ZM36239.6 9215.3L14931.7 4053.2L26291.0 7018.3L-286289.8 -71282.0ZM-26581.1 -6463.6L158380.4 41498.6L-34944.1 -8966.3L-13287.6 -3145.8ZM-34944.1 -8966.3L59325.0 16369.9L-52929.0 -14342.3L-14865.4 -3725.0ZM-52929.0 -14342.3L35451.0 10310.0L-119439.5 -34209.0L-17066.5 -4530.5ZM-119439.5 -34209.0L24720.4 7583.8L329753.0 99924.0L-20344.9 -5727.0ZM329753.0 99924.0L18627.1 6033.8L64842.1 20810.7L-25736.5 -7690.6ZM64842.1 20810.7L14702.6 5033.9L34588.0 11770.9L-36232.5 -11507.1ZM34588.0 11770.9L11966.3 4335.4L22917.0 8280.3L-65510.5 -22141.5ZM22917.0 8280.3L9951.4 3819.8L16736.2 6429.3L-584865.9 -210674.3ZM-18639.5 -6690.4L75576.9 29060.3L-24756.3 -9529.3L-8792.4 -3143.0ZM-24756.3 -9529.3L33605.9 13818.4L-39068.3 -16160.7L-9719.3 -3745.9ZM-39068.3 -16160.7L20789.3 9159.5L-111031.5 -49471.3L-11033.7 -4596.1ZM-111031.5 -49471.3L14587.6 6901.8L103281.6 49697.8L-13035.9 -5885.2ZM103281.6 49697.8L10934.7 5569.3L32414.8 16894.6L-16443.4 -8071.1ZM32414.8 16894.6L8530.2 4690.0L18190.5 10303.8L-23505.2 -12589.0ZM18190.5 10303.8L6829.8 4066.3L12097.9 7476.1L-46754.8 -27437.4ZM-8528.0 -5222.9L301347.3 194696.7L-10192.2 -6951.4L-4145.6 -2676.2ZM-10192.2 -6951.4L30804.5 22035.2L-13350.0 -10214.8L-4303.7 -3140.0ZM-13350.0 -10214.8L14869.6 11854.8L-21579.6 -18690.3L-4524.2 -3768.6ZM-21579.6 -18690.3L9143.4 8189.2L-95199.5 -94364.1L-4847.7 -4668.6ZM253.0 395.0L250.9 392.9L271.3 395.0L273.0 397.0ZM248.8 390.8L246.5 388.6L267.6 390.8L269.5 392.9ZM244.2 386.3L241.8 383.8L263.7 386.2L265.7 388.5ZM239.2 381.3L236.6 378.7L259.3 381.2L261.5 383.8ZM233.8 375.9L230.9 373.0L254.6 375.8L257.0 378.6ZM-95199.5 -94364.1L6202.0 6300.7L28139.7 32367.2L-5359.2 -6064.7ZM271.3 395.0L269.5 392.9L289.6 395.0L291.1 397.0ZM267.6 390.8L265.7 388.5L286.5 390.7L288.1 392.9ZM263.7 386.2L261.5 383.8L283.1 386.1L284.8 388.5ZM259.3 381.2L257.0 378.6L279.4 381.1L281.3 383.7ZM254.6 375.8L252.1 372.9L275.4 375.7L277.5 378.5ZM249.4 369.9L246.6 366.7L271.0 369.7L273.3 372.8ZM243.7 363.3L240.7 359.8L266.2 363.1L268.7 366.5ZM237.4 356.1L234.0 352.2L260.8 355.8L263.6 359.6ZM230.4 348.1L226.6 343.7L254.9 347.8L257.9 351.9ZM28139.7 32367.2L4415.3 5149.2L10358.4 14075.9L-6273.3 -8522.4ZM289.6 395.0L288.1 392.9L307.9 394.9L309.1 396.9ZM286.5 390.7L284.8 388.5L305.4 390.7L306.7 392.9ZM283.1 386.1L281.3 383.7L302.6 386.1L304.0 388.4ZM279.4 381.1L277.5 378.5L299.6 381.0L301.1 383.6ZM275.4 375.7L273.3 372.8L296.3 375.6L298.0 378.4ZM271.0 369.7L268.7 366.5L292.7 369.5L294.5 372.6ZM266.2 363.1L263.6 359.6L288.7 362.9L290.7 366.3ZM260.8 355.8L257.9 351.9L284.3 355.6L286.6 359.4ZM254.9 347.8L251.6 343.4L279.4 347.4L281.9 351.6ZM248.2 338.7L244.6 333.7L273.9 338.3L276.7 343.0ZM240.7 328.5L236.6 322.9L267.7 328.0L270.9 333.3ZM232.2 316.9L227.4 310.5L260.7 316.3L264.3 322.3ZM222.4 303.6L217.0 296.2L252.6 302.8L256.8 309.8ZM10358.4 14075.9L3217.8 4373.6L5532.6 9098.3L-8331.0 -13996.0ZM307.9 394.9L306.7 392.9L326.2 394.9L327.2 396.9ZM305.4 390.7L304.0 388.4L324.3 390.6L325.3 392.8ZM302.6 386.1L301.1 383.6L322.1 386.0L323.2 388.4ZM299.6 381.0L298.0 378.4L319.8 381.0L320.9 383.5ZM296.3 375.6L294.5 372.6L317.2 375.4L318.5 378.3ZM292.7 369.5L290.7 366.3L314.4 369.4L315.8 372.5ZM288.7 362.9L286.6 359.4L311.3 362.7L312.9 366.1ZM284.3 355.6L281.9 351.6L307.8 355.3L309.6 359.1ZM279.4 347.4L276.7 343.0L304.0 347.1L306.0 351.3ZM273.9 338.3L270.9 333.3L299.7 337.9L301.9 342.6ZM267.7 328.0L264.3 322.3L294.9 327.4L297.4 332.8ZM260.7 316.3L256.8 309.8L289.4 315.6L292.2 321.7ZM252.6 302.8L248.1 295.4L283.1 302.0L286.3 309.1ZM243.3 287.3L238.1 278.6L275.8 286.3L279.6 294.4ZM232.4 269.1L226.2 258.8L267.2 267.8L271.6 277.4ZM219.4 247.5L212.0 235.1L257.0 245.8L262.3 257.3ZM5532.6 9098.3L2361.5 3815.8L3291.6 6777.0L-16979.6 -36851.2ZM326.2 394.9L325.3 392.8L344.6 394.9L345.2 396.9ZM324.3 390.6L323.2 388.4L343.1 390.6L343.9 392.8ZM322.1 386.0L320.9 383.5L341.6 385.9L342.4 388.3ZM319.8 381.0L318.5 378.3L339.9 380.9L340.8 383.5ZM317.2 375.4L315.8 372.5L338.1 375.3L339.0 378.2ZM314.4 369.4L312.9 366.1L336.1 369.2L337.1 372.3ZM311.3 362.7L309.6 359.1L333.9 362.5L335.0 365.9ZM307.8 355.3L306.0 351.3L331.4 355.1L332.7 358.9ZM304.0 347.1L301.9 342.6L328.7 346.8L330.1 351.0ZM299.7 337.9L297.4 332.8L325.7 337.4L327.2 342.2ZM294.9 327.4L292.2 321.7L322.2 326.9L324.0 332.3ZM289.4 315.6L286.3 309.1L318.3 315.0L320.3 321.1ZM283.1 302.0L279.6 294.4L313.7 301.2L316.1 308.3ZM275.8 286.3L271.6 277.4L308.5 285.2L311.2 293.5ZM267.2 267.8L262.3 257.3L302.3 266.5L305.5 276.3ZM257.0 245.8L251.1 233.2L295.0 244.2L298.8 255.8ZM244.6 219.3L237.4 203.8L286.1 217.1L290.7 231.3ZM229.4 186.5L220.4 167.1L275.1 183.7L280.9 201.3ZM210.2 145.1L198.5 120.1L261.1 141.3L268.5 163.8ZM344.6 394.9L343.9 392.8L362.9 394.9L363.3 396.9ZM343.1 390.6L342.4 388.3L362.1 390.6L362.5 392.8ZM341.6 385.9L340.8 383.5L361.1 385.9L361.6 388.3ZM339.9 380.9L339.0 378.2L360.2 380.8L360.7 383.4ZM338.1 375.3L337.1 372.3L359.1 375.2L359.6 378.1ZM336.1 369.2L335.0 365.9L357.9 369.1L358.5 372.2ZM333.9 362.5L332.7 358.9L356.6 362.3L357.3 365.8ZM331.4 355.1L330.1 351.0L355.1 354.8L355.9 358.6ZM328.7 346.8L327.2 342.2L353.5 346.4L354.3 350.7ZM325.7 337.4L324.0 332.3L351.7 337.0L352.6 341.9ZM322.2 326.9L320.3 321.1L349.6 326.4L350.7 331.9ZM318.3 315.0L316.1 308.3L347.3 314.3L348.5 320.5ZM313.7 301.2L311.2 293.5L344.6 300.4L346.0 307.6ZM308.5 285.2L305.5 276.3L341.5 284.2L343.1 292.6ZM302.3 266.5L298.8 255.8L337.8 265.2L339.7 275.1ZM295.0 244.2L290.7 231.3L333.4 242.5L335.7 254.3ZM286.1 217.1L280.9 201.3L328.1 214.9L330.9 229.4ZM275.1 183.7L268.5 163.8L321.5 180.7L325.0 198.8ZM261.1 141.3L252.6 115.5L313.1 137.3L317.6 160.4ZM-1543.7 -5345.0L21194.4 63775.3L-1115.8 -7254.9L-227.2 -2658.0ZM362.9 394.9L362.5 392.8L381.2 394.9L381.3 396.9ZM362.1 390.6L361.6 388.3L381.0 390.5L381.1 392.7ZM361.1 385.9L360.7 383.4L380.7 385.8L380.8 388.2ZM360.2 380.8L359.6 378.1L380.4 380.7L380.5 383.3ZM359.1 375.2L358.5 372.2L380.1 375.1L380.2 377.9ZM357.9 369.1L357.3 365.8L379.7 368.9L379.9 372.1ZM356.6 362.3L355.9 358.6L379.3 362.1L379.5 365.6ZM355.1 354.8L354.3 350.7L378.9 354.5L379.1 358.4ZM353.5 346.4L352.6 341.9L378.4 346.1L378.7 350.4ZM351.7 337.0L350.7 331.9L377.9 336.6L378.1 341.5ZM349.6 326.4L348.5 320.5L377.2 325.8L377.6 331.4ZM347.3 314.3L346.0 307.6L376.5 313.6L376.9 319.9ZM344.6 300.4L343.1 292.6L375.7 299.5L376.1 306.8ZM341.5 284.2L339.7 275.1L374.8 283.1L375.3 291.6ZM337.8 265.2L335.7 254.3L373.7 263.8L374.2 273.9ZM333.4 242.5L330.9 229.4L372.3 240.7L373.0 252.8ZM328.1 214.9L325.0 198.8L370.7 212.6L371.6 227.4ZM321.5 180.7L317.6 160.4L368.7 177.7L369.8 196.2ZM313.1 137.3L308.0 110.8L366.1 133.1L367.5 156.9ZM-1115.8 -7254.9L3673.2 17521.1L-279.3 -11067.6L177.7 -3136.8ZM381.2 394.9L381.1 392.7L399.5 394.9L399.4 396.9ZM381.0 390.5L380.8 388.2L399.9 390.5L399.7 392.7ZM380.7 385.8L380.5 383.3L400.3 385.8L400.1 388.2ZM380.4 380.7L380.2 377.9L400.7 380.6L400.5 383.2ZM380.1 375.1L379.9 372.1L401.1 374.9L400.9 377.8ZM379.7 368.9L379.5 365.6L401.6 368.7L401.3 371.9ZM379.3 362.1L379.1 358.4L402.1 361.9L401.8 365.4ZM378.9 354.5L378.7 350.4L402.7 354.2L402.4 358.1ZM378.4 346.1L378.1 341.5L403.4 345.7L403.0 350.1ZM377.9 336.6L377.6 331.4L404.1 336.1L403.7 341.1ZM377.2 325.8L376.9 319.9L405.0 325.3L404.5 330.9ZM376.5 313.6L376.1 306.8L405.9 312.9L405.4 319.3ZM375.7 299.5L375.3 291.6L407.1 298.7L406.5 306.0ZM374.8 283.1L374.2 273.9L408.4 282.0L407.7 290.7ZM373.7 263.8L373.0 252.8L409.9 262.4L409.1 272.7ZM372.3 240.7L371.6 227.4L411.7 238.9L410.8 251.2ZM370.7 212.6L369.8 196.2L414.0 210.3L412.8 225.4ZM368.7 177.7L367.5 156.9L416.7 174.6L415.3 193.5ZM366.1 133.1L364.6 105.9L420.3 128.9L418.4 153.2ZM-279.3 -11067.6L951.8 10297.0L2182.5 -22449.7L726.4 -3793.3ZM399.5 394.9L399.7 392.7L417.9 394.8L417.4 396.9ZM399.9 390.5L400.1 388.2L418.8 390.5L418.3 392.7ZM400.3 385.8L400.5 383.2L419.8 385.7L419.3 388.1ZM400.7 380.6L400.9 377.8L421.0 380.5L420.4 383.2ZM401.1 374.9L401.3 371.9L422.2 374.8L421.5 377.7ZM401.6 368.7L401.8 365.4L423.5 368.6L422.8 371.8ZM402.1 361.9L402.4 358.1L425.0 361.6L424.2 365.2ZM402.7 354.2L403.0 350.1L426.6 353.9L425.8 357.9ZM403.4 345.7L403.7 341.1L428.5 345.4L427.5 349.8ZM404.1 336.1L404.5 330.9L430.5 335.7L429.5 340.7ZM405.0 325.3L405.4 319.3L432.9 324.7L431.7 330.4ZM405.9 312.9L406.5 306.0L435.5 312.2L434.2 318.7ZM407.1 298.7L407.7 290.7L438.6 297.8L437.0 305.3ZM408.4 282.0L409.1 272.7L442.2 280.9L440.4 289.7ZM409.9 262.4L410.8 251.2L446.5 261.0L444.3 271.4ZM411.7 238.9L412.8 225.4L451.6 237.1L448.9 249.6ZM414.0 210.3L415.3 193.5L457.8 207.9L454.6 223.3ZM416.7 174.6L418.4 153.2L465.6 171.4L461.5 190.7ZM420.3 128.9L422.5 100.8L475.7 124.5L470.3 149.5ZM2182.5 -22449.7L-144.1 7359.9L666411.5 -3115809.3L1517.3 -4749.3ZM417.9 394.8L418.3 392.7L436.2 394.8L435.5 396.9ZM418.8 390.5L419.3 388.1L437.8 390.4L437.0 392.7ZM419.8 385.7L420.4 383.2L439.4 385.6L438.6 388.1ZM421.0 380.5L421.5 377.7L441.3 380.4L440.3 383.1ZM422.2 374.8L422.8 371.8L443.3 374.7L442.2 377.6ZM423.5 368.6L424.2 365.2L445.5 368.4L444.3 371.6ZM425.0 361.6L425.8 357.9L447.9 361.4L446.7 365.0ZM426.6 353.9L427.5 349.8L450.6 353.7L449.2 357.6ZM428.5 345.4L429.5 340.7L453.6 345.0L452.1 349.5ZM430.5 335.7L431.7 330.4L457.0 335.2L455.3 340.3ZM432.9 324.7L434.2 318.7L460.9 324.2L458.9 329.9ZM435.5 312.2L437.0 305.3L465.3 311.5L463.0 318.1ZM438.6 297.8L440.4 289.7L470.4 296.9L467.8 304.5ZM442.2 280.9L444.3 271.4L476.4 279.8L473.3 288.7ZM446.5 261.0L448.9 249.6L483.5 259.6L479.8 270.1ZM451.6 237.1L454.6 223.3L492.0 235.2L487.5 248.0ZM457.8 207.9L461.5 190.7L502.4 205.5L496.9 221.1ZM465.6 171.4L470.3 149.5L515.4 168.1L508.5 187.9ZM475.7 124.5L481.8 95.6L532.3 119.9L523.3 145.6ZM666411.5 -3115809.3L-730.3 5767.0L-7666.9 23587.1L2764.9 -6270.1ZM436.2 394.8L437.0 392.7L454.6 394.8L453.6 396.9ZM437.8 390.4L438.6 388.1L456.7 390.4L455.6 392.6ZM439.4 385.6L440.3 383.1L459.1 385.6L457.9 388.0ZM441.3 380.4L442.2 377.6L461.6 380.3L460.3 383.0ZM443.3 374.7L444.3 371.6L464.4 374.5L463.0 377.5ZM445.5 368.4L446.7 365.0L467.5 368.2L465.9 371.5ZM447.9 361.4L449.2 357.6L470.9 361.2L469.1 364.8ZM450.6 353.7L452.1 349.5L474.7 353.4L472.7 357.4ZM453.6 345.0L455.3 340.3L478.9 344.6L476.7 349.1ZM457.0 335.2L458.9 329.9L483.7 334.8L481.2 339.9ZM460.9 324.2L463.0 318.1L489.1 323.6L486.3 329.4ZM465.3 311.5L467.8 304.5L495.3 310.8L492.1 317.4ZM470.4 296.9L473.3 288.7L502.5 296.0L498.8 303.7ZM476.4 279.8L479.8 270.1L510.9 278.6L506.5 287.7ZM483.5 259.6L487.5 248.0L520.9 258.1L515.7 268.8ZM492.0 235.2L496.9 221.1L532.9 233.3L526.6 246.3ZM502.4 205.5L508.5 187.9L547.6 202.9L539.9 219.0ZM515.4 168.1L523.3 145.6L566.2 164.7L556.4 185.0ZM532.3 119.9L542.7 90.2L590.2 115.2L577.4 141.7ZM-7666.9 23587.1L-1091.5 4767.4L-5150.4 11949.9L5043.8 -9066.3ZM454.6 394.8L455.6 392.6L472.9 394.8L471.6 396.9ZM456.7 390.4L457.9 388.0L475.7 390.3L474.3 392.6ZM459.1 385.6L460.3 383.0L478.7 385.5L477.2 388.0ZM461.6 380.3L463.0 377.5L482.0 380.2L480.3 382.9ZM464.4 374.5L465.9 371.5L485.6 374.4L483.7 377.4ZM467.5 368.2L469.1 364.8L489.5 368.0L487.5 371.3ZM470.9 361.2L472.7 357.4L493.9 361.0L491.7 364.6ZM474.7 353.4L476.7 349.1L498.8 353.1L496.3 357.1ZM478.9 344.6L481.2 339.9L504.3 344.3L501.5 348.8ZM483.7 334.8L486.3 329.4L510.5 334.3L507.3 339.4ZM489.1 323.6L492.1 317.4L517.5 323.0L513.9 328.8ZM495.3 310.8L498.8 303.7L525.5 310.1L521.4 316.8ZM502.5 296.0L506.5 287.7L534.8 295.0L530.0 302.8ZM510.9 278.6L515.7 268.8L545.8 277.5L540.1 286.6ZM520.9 258.1L526.6 246.3L558.7 256.6L551.9 267.5ZM532.9 233.3L539.9 219.0L574.4 231.4L566.2 244.6ZM547.6 202.9L556.4 185.0L593.6 200.4L583.5 216.7ZM566.2 164.7L577.4 141.7L617.9 161.2L605.0 182.0ZM590.2 115.2L605.1 84.5L649.5 110.4L632.6 137.6ZM-5150.4 11949.9L-1333.7 4081.6L-4303.7 8090.0L10587.9 -15900.5ZM472.9 394.8L474.3 392.6L491.3 394.8L489.7 396.9ZM475.7 390.3L477.2 388.0L494.7 390.3L492.9 392.6ZM478.7 385.5L480.3 382.9L498.4 385.4L496.5 387.9ZM482.0 380.2L483.7 377.4L502.4 380.1L500.3 382.8ZM485.6 374.4L487.5 371.3L506.8 374.3L504.5 377.3ZM489.5 368.0L491.7 364.6L511.7 367.8L509.2 371.1ZM493.9 361.0L496.3 357.1L517.0 360.7L514.3 364.4ZM498.8 353.1L501.5 348.8L523.0 352.8L520.0 356.9ZM504.3 344.3L507.3 339.4L529.8 343.9L526.3 348.5ZM510.5 334.3L513.9 328.8L537.4 333.8L533.5 339.0ZM517.5 323.0L521.4 316.8L546.0 322.4L541.6 328.3ZM525.5 310.1L530.0 302.8L555.9 309.3L550.8 316.1ZM534.8 295.0L540.1 286.6L567.4 294.1L561.5 302.0ZM545.8 277.5L551.9 267.5L580.9 276.3L573.9 285.6ZM558.7 256.6L566.2 244.6L597.0 255.0L588.6 266.1ZM574.4 231.4L583.5 216.7L616.4 229.4L606.2 242.9ZM593.6 200.4L605.0 182.0L640.3 197.7L627.7 214.4ZM617.9 161.2L632.6 137.6L670.7 157.6L654.6 178.9ZM649.5 110.4L669.1 78.7L710.2 105.3L689.0 133.3ZM-4303.7 8090.0L-1505.4 3581.9L-3872.3 6163.6L44843.8 -58241.3ZM491.3 394.8L492.9 392.6L509.7 394.8L507.8 396.9ZM494.7 390.3L496.5 387.9L513.7 390.3L511.6 392.6ZM498.4 385.4L500.3 382.8L518.0 385.4L515.8 387.9ZM502.4 380.1L504.5 377.3L522.8 380.0L520.4 382.8ZM506.8 374.3L509.2 371.1L528.0 374.1L525.4 377.2ZM511.7 367.8L514.3 364.4L533.8 367.7L530.9 371.0ZM517.0 360.7L520.0 356.9L540.2 360.5L536.9 364.2ZM523.0 352.8L526.3 348.5L547.4 352.5L543.7 356.6ZM529.8 343.9L533.5 339.0L555.4 343.5L551.2 348.1ZM537.4 333.8L541.6 328.3L564.4 333.4L559.8 338.6ZM546.0 322.4L550.8 316.1L574.7 321.8L569.4 327.8ZM555.9 309.3L561.5 302.0L586.6 308.5L580.4 315.4ZM567.4 294.1L573.9 285.6L600.3 293.1L593.2 301.1ZM580.9 276.3L588.6 266.1L616.4 275.0L608.0 284.5ZM597.0 255.0L606.2 242.9L635.7 253.5L625.6 264.8ZM616.4 229.4L627.7 214.4L659.0 227.3L646.8 241.1ZM640.3 197.7L654.6 178.9L687.9 195.0L672.6 212.1ZM670.7 157.6L689.0 133.3L724.5 153.9L705.0 175.8ZM710.2 105.3L734.9 72.7L772.5 100.1L746.8 129.0ZM509.7 394.8L511.6 392.6L528.0 394.7L525.8 396.9ZM513.7 390.3L515.8 387.9L532.7 390.2L530.3 392.5ZM518.0 385.4L520.4 382.8L537.7 385.3L535.1 387.8ZM522.8 380.0L525.4 377.2L543.2 379.9L540.4 382.7ZM528.0 374.1L530.9 371.0L549.3 374.0L546.2 377.0ZM533.8 367.7L536.9 364.2L556.0 367.5L552.6 370.8ZM540.2 360.5L543.7 356.6L563.5 360.2L559.6 364.0ZM547.4 352.5L551.2 348.1L571.8 352.2L567.5 356.3ZM555.4 343.5L559.8 338.6L581.1 343.1L576.3 347.8ZM564.4 333.4L569.4 327.8L591.6 332.9L586.2 338.2ZM574.7 321.8L580.4 315.4L603.6 321.2L597.4 327.2ZM586.6 308.5L593.2 301.1L617.4 307.8L610.2 314.7ZM600.3 293.1L608.0 284.5L633.4 292.2L625.1 300.3ZM616.4 275.0L625.6 264.8L652.3 273.8L642.5 283.4ZM635.7 253.5L646.8 241.1L674.9 251.9L663.1 263.3ZM659.0 227.3L672.6 212.1L702.2 225.2L687.8 239.2ZM687.9 195.0L705.0 175.8L736.2 192.2L718.2 209.6ZM724.5 153.9L746.8 129.0L779.4 150.1L756.4 172.5ZM5753.1 -5483.0L-32234.9 37100.9L8757.0 -7612.1L3645.5 -2638.6ZM523.7 398.9L525.8 396.9L541.5 398.9L539.2 400.9ZM528.0 394.7L530.3 392.5L546.4 394.7L543.9 396.8ZM532.7 390.2L535.1 387.8L551.7 390.2L549.0 392.5ZM537.7 385.3L540.4 382.7L557.4 385.2L554.5 387.8ZM543.2 379.9L546.2 377.0L563.7 379.8L560.5 382.6ZM549.3 374.0L552.6 370.8L570.6 373.9L567.1 376.9ZM556.0 367.5L559.6 364.0L578.3 367.3L574.4 370.7ZM563.5 360.2L567.5 356.3L586.8 360.0L582.4 363.7ZM571.8 352.2L576.3 347.8L596.2 351.9L591.4 356.1ZM581.1 343.1L586.2 338.2L606.9 342.7L601.4 347.4ZM591.6 332.9L597.4 327.2L618.9 332.4L612.7 337.7ZM603.6 321.2L610.2 314.7L632.6 320.6L625.5 326.7ZM617.4 307.8L625.1 300.3L648.5 307.0L640.3 314.0ZM633.4 292.2L642.5 283.4L666.9 291.2L657.3 299.4ZM652.3 273.8L663.1 263.3L688.6 272.5L677.2 282.2ZM674.9 251.9L687.8 239.2L714.5 250.2L700.9 261.9ZM702.2 225.2L718.2 209.6L746.1 223.1L729.5 237.3ZM736.2 192.2L756.4 172.5L785.4 189.3L764.6 207.2ZM779.4 150.1L805.8 124.4L835.6 146.2L808.8 169.1ZM8757.0 -7612.1L-13840.9 14375.7L15149.5 -12157.2L4650.9 -3133.3ZM541.5 398.9L543.9 396.8L559.3 398.9L556.8 400.9ZM546.4 394.7L549.0 392.5L564.8 394.7L562.0 396.8ZM551.7 390.2L554.5 387.8L570.7 390.1L567.7 392.5ZM557.4 385.2L560.5 382.6L577.2 385.2L573.9 387.7ZM563.7 379.8L567.1 376.9L584.2 379.7L580.6 382.5ZM570.6 373.9L574.4 370.7L592.0 373.7L588.0 376.8ZM578.3 367.3L582.4 363.7L600.6 367.1L596.2 370.5ZM586.8 360.0L591.4 356.1L610.2 359.8L605.3 363.5ZM596.2 351.9L601.4 347.4L620.8 351.6L615.3 355.8ZM606.9 342.7L612.7 337.7L632.8 342.3L626.6 347.1ZM618.9 332.4L625.5 326.7L646.4 331.9L639.4 337.3ZM632.6 320.6L640.3 314.0L661.9 319.9L653.9 326.1ZM648.5 307.0L657.3 299.4L679.8 306.2L670.5 313.3ZM666.9 291.2L677.2 282.2L700.6 290.1L689.8 298.5ZM688.6 272.5L700.9 261.9L725.2 271.2L712.4 281.1ZM714.5 250.2L729.5 237.3L754.6 248.5L739.2 260.4ZM746.1 223.1L764.6 207.2L790.6 220.9L771.7 235.4ZM785.4 189.3L808.8 169.1L835.4 186.4L811.7 204.6ZM835.6 146.2L866.3 119.8L892.9 142.1L862.3 165.7ZM15149.5 -12157.2L-9501.0 9030.9L38262.1 -28623.6L6040.6 -3820.4ZM559.3 398.9L562.0 396.8L577.1 398.9L574.3 400.9ZM564.8 394.7L567.7 392.5L583.2 394.7L580.1 396.8ZM570.7 390.1L573.9 387.7L589.7 390.1L586.4 392.4ZM577.2 385.2L580.6 382.5L596.9 385.1L593.2 387.6ZM584.2 379.7L588.0 376.8L604.8 379.6L600.8 382.4ZM592.0 373.7L596.2 370.5L613.4 373.6L609.0 376.7ZM600.6 367.1L605.3 363.5L623.0 366.9L618.1 370.3ZM610.2 359.8L615.3 355.8L633.6 359.5L628.1 363.3ZM620.8 351.6L626.6 347.1L645.5 351.2L639.4 355.5ZM632.8 342.3L639.4 337.3L658.8 341.9L652.0 346.7ZM646.4 331.9L653.9 326.1L674.0 331.4L666.2 336.8ZM661.9 319.9L670.5 313.3L691.3 319.3L682.3 325.5ZM679.8 306.2L689.8 298.5L711.3 305.4L700.9 312.6ZM700.6 290.1L712.4 281.1L734.6 289.1L722.5 297.6ZM725.2 271.2L739.2 260.4L762.2 269.9L747.8 279.9ZM754.6 248.5L771.7 235.4L795.3 246.8L777.9 258.9ZM790.6 220.9L811.7 204.6L835.8 218.6L814.5 233.5ZM835.4 186.4L862.3 165.7L886.4 183.3L859.6 202.0ZM892.9 142.1L928.2 114.9L951.6 137.9L916.8 162.1ZM38262.1 -28623.6L-7552.3 6643.0L-133122.3 93585.0L8092.9 -4839.5ZM577.1 398.9L580.1 396.8L594.9 398.9L591.8 400.9ZM583.2 394.7L586.4 392.4L601.5 394.7L598.2 396.8ZM589.7 390.1L593.2 387.6L608.8 390.0L605.1 392.4ZM596.9 385.1L600.8 382.4L616.7 385.0L612.6 387.6ZM604.8 379.6L609.0 376.7L625.3 379.5L620.9 382.3ZM613.4 373.6L618.1 370.3L634.9 373.4L630.0 376.5ZM623.0 366.9L628.1 363.3L645.4 366.7L640.0 370.2ZM633.6 359.5L639.4 355.5L657.1 359.3L651.1 363.1ZM645.5 351.2L652.0 346.7L670.2 350.9L663.5 355.2ZM658.8 341.9L666.2 336.8L685.0 341.5L677.4 346.4ZM674.0 331.4L682.3 325.5L701.8 330.8L693.1 336.4ZM691.3 319.3L700.9 312.6L720.9 318.6L711.0 325.0ZM711.3 305.4L722.5 297.6L743.1 304.5L731.6 311.9ZM734.6 289.1L747.8 279.9L769.0 288.1L755.5 296.6ZM762.2 269.9L777.9 258.9L799.6 268.5L783.6 278.7ZM795.3 246.8L814.5 233.5L836.5 245.1L817.1 257.4ZM835.8 218.6L859.6 202.0L881.7 216.3L857.9 231.4ZM886.4 183.3L916.8 162.1L938.4 180.2L908.3 199.3ZM951.6 137.9L991.7 109.9L1011.6 133.6L972.5 158.5ZM-133122.3 93585.0L-6440.4 5290.0L-27488.9 18281.8L11441.1 -6507.7ZM594.9 398.9L598.2 396.8L612.7 398.9L609.3 400.9ZM601.5 394.7L605.1 392.4L620.0 394.6L616.3 396.8ZM608.8 390.0L612.6 387.6L627.9 390.0L623.9 392.4ZM616.7 385.0L620.9 382.3L636.5 385.0L632.1 387.5ZM625.3 379.5L630.0 376.5L646.0 379.4L641.2 382.2ZM634.9 373.4L640.0 370.2L656.4 373.3L651.1 376.4ZM645.4 366.7L651.1 363.1L668.0 366.5L662.0 370.0ZM657.1 359.3L663.5 355.2L680.8 359.0L674.2 362.9ZM670.2 350.9L677.4 346.4L695.2 350.6L687.8 354.9ZM685.0 341.5L693.1 336.4L711.3 341.1L703.0 346.0ZM701.8 330.8L711.0 325.0L729.7 330.3L720.2 335.9ZM720.9 318.6L731.6 311.9L750.8 318.0L739.9 324.4ZM743.1 304.5L755.5 296.6L775.2 303.7L762.5 311.1ZM769.0 288.1L783.6 278.7L803.7 287.0L788.8 295.7ZM799.6 268.5L817.1 257.4L837.5 267.2L819.8 277.5ZM836.5 245.1L857.9 231.4L878.3 243.3L856.9 255.8ZM881.7 216.3L908.3 199.3L928.4 214.0L902.0 229.4ZM938.4 180.2L972.5 158.5L991.4 177.0L958.0 196.6ZM1011.6 133.6L1056.8 104.7L1073.1 129.1L1029.4 154.7ZM-27488.9 18281.8L-5718.2 4418.9L-16359.3 10343.9L17805.6 -9675.4ZM612.7 398.9L616.3 396.8L631.1 399.0L627.4 401.0ZM620.0 394.6L623.9 392.4L639.0 394.7L635.0 396.9ZM627.9 390.0L632.1 387.5L647.6 390.1L643.2 392.4ZM636.5 385.0L641.2 382.2L657.0 385.0L652.2 387.6ZM646.0 379.4L651.1 376.4L667.3 379.4L662.0 382.3ZM656.4 373.3L662.0 370.0L678.6 373.3L672.8 376.4ZM668.0 366.5L674.2 362.9L691.2 366.5L684.7 370.0ZM680.8 359.0L687.8 354.9L705.2 358.9L698.0 362.8ZM695.2 350.6L703.0 346.0L720.8 350.5L712.8 354.8ZM711.3 341.1L720.2 335.9L738.5 340.9L729.4 345.8ZM729.7 330.3L739.9 324.4L758.6 330.0L748.2 335.7ZM750.8 318.0L762.5 311.1L781.6 317.6L769.7 324.0ZM775.2 303.7L788.8 295.7L808.2 303.2L794.4 310.7ZM803.7 287.0L819.8 277.5L839.5 286.3L823.2 295.1ZM837.5 267.2L856.9 255.8L876.6 266.2L857.2 276.7ZM878.3 243.3L902.0 229.4L921.3 242.0L897.9 254.7ZM928.4 214.0L958.0 196.6L976.5 212.1L947.4 227.9ZM991.4 177.0L1029.4 154.7L1046.1 174.5L1009.1 194.5ZM1073.1 129.1L1123.8 99.5L1136.5 125.5L1088.1 151.7ZM-16359.3 10343.9L-5221.1 3817.3L-12648.2 7583.9L31419.8 -16259.6ZM631.1 399.0L635.0 396.9L650.1 399.2L646.1 401.2ZM639.0 394.7L643.2 392.4L658.6 394.9L654.2 397.1ZM647.6 390.1L652.2 387.6L667.9 390.2L663.2 392.6ZM657.0 385.0L662.0 382.3L678.1 385.1L672.9 387.7ZM667.3 379.4L672.8 376.4L689.2 379.6L683.5 382.4ZM678.6 373.3L684.7 370.0L701.5 373.4L695.2 376.6ZM691.2 366.5L698.0 362.8L715.1 366.6L708.1 370.1ZM705.2 358.9L712.8 354.8L730.2 359.0L722.5 362.9ZM720.8 350.5L729.4 345.8L747.2 350.5L738.5 354.9ZM738.5 340.9L748.2 335.7L766.4 340.9L756.5 345.8ZM758.6 330.0L769.7 324.0L788.2 330.0L776.9 335.6ZM781.6 317.6L794.4 310.7L813.2 317.4L800.2 323.9ZM808.2 303.2L823.2 295.1L842.2 302.9L827.1 310.4ZM839.5 286.3L857.2 276.7L876.2 285.9L858.5 294.7ZM876.6 266.2L897.9 254.7L916.6 265.6L895.5 276.2ZM921.3 242.0L947.4 227.9L965.5 241.1L939.9 253.9ZM976.5 212.1L1009.1 194.5L1025.8 210.9L994.0 226.8ZM1046.1 174.5L1088.1 151.7L1102.1 172.7L1061.6 192.9ZM1136.5 125.5L1192.8 95.1L1201.5 122.8L1148.3 149.5ZM-12648.2 7583.9L-4959.8 3424.0L-10976.1 6225.4L73842.4 -36279.6ZM642.2 403.1L646.1 401.2L661.1 403.4L657.1 405.2ZM650.1 399.2L654.2 397.1L669.5 399.4L665.2 401.5ZM658.6 394.9L663.2 392.6L678.7 395.2L674.0 397.3ZM667.9 390.2L672.9 387.7L688.7 390.5L683.6 392.9ZM678.1 385.1L683.5 382.4L699.7 385.4L694.1 388.0ZM689.2 379.6L695.2 376.6L711.7 379.8L705.5 382.7ZM701.5 373.4L708.1 370.1L724.9 373.7L718.1 376.8ZM715.1 366.6L722.5 362.9L739.6 366.8L732.1 370.3ZM730.2 359.0L738.5 354.9L755.9 359.2L747.5 363.1ZM747.2 350.5L756.5 345.8L774.3 350.7L764.8 355.1ZM766.4 340.9L776.9 335.6L795.0 341.1L784.3 346.0ZM788.2 330.0L800.2 323.9L818.5 330.1L806.3 335.8ZM813.2 317.4L827.1 310.4L845.6 317.5L831.6 324.0ZM842.2 302.9L858.5 294.7L876.9 302.9L860.6 310.5ZM876.2 285.9L895.5 276.2L913.7 285.8L894.6 294.7ZM916.6 265.6L939.9 253.9L957.5 265.4L934.6 276.1ZM965.5 241.1L994.0 226.8L1010.6 240.7L982.7 253.7ZM1025.8 210.9L1061.6 192.9L1076.1 210.2L1041.5 226.3ZM1102.1 172.7L1148.3 149.5L1159.1 171.6L1115.0 192.1ZM1201.5 122.8L1263.6 91.7L1267.6 121.1L1209.5 148.1ZM-10976.1 6225.4L-4851.1 3156.0L-10197.0 5456.8L1825975.1 -849105.0ZM661.1 403.4L665.2 401.5L680.4 403.7L676.1 405.6ZM669.5 399.4L674.0 397.3L689.5 399.8L684.9 401.8ZM678.7 395.2L683.6 392.9L699.4 395.5L694.3 397.7ZM688.7 390.5L694.1 388.0L710.1 390.9L704.6 393.3ZM699.7 385.4L705.5 382.7L721.8 385.8L715.8 388.4ZM711.7 379.8L718.1 376.8L734.7 380.2L728.1 383.1ZM724.9 373.7L732.1 370.3L748.9 374.1L741.6 377.2ZM739.6 366.8L747.5 363.1L764.7 367.2L756.6 370.7ZM755.9 359.2L764.8 355.1L782.2 359.6L773.2 363.5ZM774.3 350.7L784.3 346.0L801.9 351.1L791.8 355.5ZM795.0 341.1L806.3 335.8L824.2 341.5L812.7 346.4ZM818.5 330.1L831.6 324.0L849.5 330.5L836.4 336.2ZM845.6 317.5L860.6 310.5L878.5 317.9L863.5 324.4ZM876.9 302.9L894.6 294.7L912.3 303.3L894.8 310.9ZM913.7 285.8L934.6 276.1L951.9 286.1L931.3 295.0ZM957.5 265.4L982.7 253.7L999.1 265.6L974.4 276.3ZM1010.6 240.7L1041.5 226.3L1056.3 240.9L1026.3 253.9ZM1076.1 210.2L1115.0 192.1L1127.1 210.2L1089.7 226.4ZM1159.1 171.6L1209.5 148.1L1216.8 171.3L1169.1 192.0ZM1267.6 121.1L1335.4 89.5L1334.3 120.4L1271.3 147.7ZM680.4 403.7L684.9 401.8L700.2 404.2L695.7 406.0ZM689.5 399.8L694.3 397.7L709.9 400.3L705.0 402.3ZM699.4 395.5L704.6 393.3L720.5 396.0L715.1 398.2ZM710.1 390.9L715.8 388.4L731.9 391.4L726.1 393.7ZM721.8 385.8L728.1 383.1L744.5 386.3L738.1 388.9ZM734.7 380.2L741.6 377.2L758.2 380.7L751.2 383.6ZM748.9 374.1L756.6 370.7L773.4 374.6L765.6 377.7ZM764.7 367.2L773.2 363.5L790.3 367.8L781.6 371.3ZM782.2 359.6L791.8 355.5L809.0 360.2L799.4 364.1ZM801.9 351.1L812.7 346.4L830.1 351.7L819.2 356.1ZM824.2 341.5L836.4 336.2L853.9 342.1L841.6 347.0ZM849.5 330.5L863.5 324.4L880.9 331.1L866.9 336.8ZM878.5 317.9L894.8 310.9L912.0 318.6L895.9 325.1ZM912.3 303.3L931.3 295.0L948.2 304.0L929.4 311.5ZM951.9 286.1L974.4 276.3L990.6 286.8L968.5 295.7ZM999.1 265.6L1026.3 253.9L1041.2 266.3L1014.7 277.0ZM1056.3 240.9L1089.7 226.4L1102.5 241.6L1070.3 254.6ZM1127.1 210.2L1169.1 192.0L1178.4 210.9L1138.3 227.1ZM1216.8 171.3L1271.3 147.7L1274.6 172.0L1223.5 192.7ZM12864.1 -4875.2L-127706.2 56031.2L14578.0 -5206.1L6964.6 -2128.2ZM691.3 407.8L695.7 406.0L710.9 408.3L706.4 410.0ZM700.2 404.2L705.0 402.3L720.5 404.7L715.6 406.6ZM709.9 400.3L715.1 398.2L730.8 400.8L725.5 402.8ZM720.5 396.0L726.1 393.7L742.0 396.6L736.3 398.7ZM731.9 391.4L738.1 388.9L754.2 392.0L748.0 394.3ZM744.5 386.3L751.2 383.6L767.6 386.9L760.7 389.5ZM758.2 380.7L765.6 377.7L782.2 381.4L774.7 384.2ZM773.4 374.6L781.6 371.3L798.4 375.3L790.1 378.4ZM790.3 367.8L799.4 364.1L816.3 368.5L807.1 372.0ZM809.0 360.2L819.2 356.1L836.3 361.0L826.0 364.8ZM830.1 351.7L841.6 347.0L858.7 352.5L847.1 356.9ZM853.9 342.1L866.9 336.8L884.0 342.9L870.9 347.9ZM880.9 331.1L895.9 325.1L912.8 332.0L897.9 337.7ZM912.0 318.6L929.4 311.5L945.9 319.5L928.8 326.0ZM948.2 304.0L968.5 295.7L984.4 305.0L964.4 312.5ZM990.6 286.8L1014.7 277.0L1029.6 287.9L1006.1 296.8ZM1041.2 266.3L1070.3 254.6L1083.5 267.5L1055.3 278.2ZM1102.5 241.6L1138.3 227.1L1148.8 242.8L1114.5 255.8ZM1178.4 210.9L1223.5 192.7L1229.6 212.3L1186.9 228.4ZM1274.6 172.0L1333.2 148.3L1332.3 173.5L1277.7 194.1ZM14578.0 -5206.1L-82052.0 33857.7L15837.5 -5308.6L7456.5 -2141.1ZM710.9 408.3L715.6 406.6L731.0 408.9L726.2 410.6ZM720.5 404.7L725.5 402.8L741.1 405.4L736.0 407.2ZM730.8 400.8L736.3 398.7L752.1 401.5L746.5 403.5ZM742.0 396.6L748.0 394.3L763.9 397.3L757.9 399.4ZM754.2 392.0L760.7 389.5L776.9 392.7L770.3 395.0ZM767.6 386.9L774.7 384.2L791.0 387.7L783.8 390.3ZM782.2 381.4L790.1 378.4L806.6 382.2L798.6 385.0ZM798.4 375.3L807.1 372.0L823.7 376.1L814.9 379.2ZM816.3 368.5L826.0 364.8L842.7 369.4L832.9 372.9ZM836.3 361.0L847.1 356.9L863.9 361.9L853.0 365.8ZM858.7 352.5L870.9 347.9L887.6 353.5L875.4 357.8ZM884.0 342.9L897.9 337.7L914.4 344.0L900.6 348.9ZM912.8 332.0L928.8 326.0L945.0 333.2L929.2 338.8ZM945.9 319.5L964.4 312.5L980.1 320.8L961.9 327.2ZM984.4 305.0L1006.1 296.8L1020.8 306.4L999.7 313.8ZM1029.6 287.9L1055.3 278.2L1068.7 289.4L1043.8 298.2ZM1083.5 267.5L1114.5 255.8L1125.8 269.2L1095.9 279.8ZM1148.8 242.8L1186.9 228.4L1194.9 244.7L1158.6 257.6ZM1229.6 212.3L1277.7 194.1L1280.5 214.4L1235.3 230.4ZM15837.5 -5308.6L-76636.4 29640.8L16415.7 -5142.9L7811.7 -2097.4ZM731.0 408.9L736.0 407.2L751.4 409.6L746.4 411.3ZM741.1 405.4L746.5 403.5L762.1 406.1L756.7 407.9ZM752.1 401.5L757.9 399.4L773.7 402.3L767.8 404.2ZM763.9 397.3L770.3 395.0L786.2 398.1L779.8 400.2ZM776.9 392.7L783.8 390.3L799.9 393.6L792.9 395.9ZM791.0 387.7L798.6 385.0L814.8 388.6L807.2 391.1ZM806.6 382.2L814.9 379.2L831.3 383.1L822.9 385.9ZM823.7 376.1L832.9 372.9L849.3 377.1L840.1 380.2ZM842.7 369.4L853.0 365.8L869.4 370.5L859.1 373.9ZM863.9 361.9L875.4 357.8L891.7 363.1L880.2 366.9ZM887.6 353.5L900.6 348.9L916.8 354.7L903.9 359.0ZM914.4 344.0L929.2 338.8L945.1 345.3L930.5 350.2ZM945.0 333.2L961.9 327.2L977.3 334.6L960.7 340.2ZM980.1 320.8L999.7 313.8L1014.3 322.4L995.1 328.7ZM1020.8 306.4L1043.8 298.2L1057.3 308.1L1035.0 315.5ZM1068.7 289.4L1095.9 279.8L1107.7 291.3L1081.4 300.1ZM1125.8 269.2L1158.6 257.6L1167.8 271.4L1136.4 281.8ZM1194.9 244.7L1235.3 230.4L1240.6 247.2L1202.4 259.9ZM1280.5 214.4L1331.4 196.4L1330.6 217.3L1283.1 233.1ZM16415.7 -5142.9L-91933.6 33209.0L16254.0 -4738.1L8006.6 -1999.5ZM751.4 409.6L756.7 407.9L772.2 410.4L766.9 412.1ZM762.1 406.1L767.8 404.2L783.5 406.9L777.7 408.7ZM773.7 402.3L779.8 400.2L795.6 403.1L789.4 405.1ZM786.2 398.1L792.9 395.9L808.8 399.0L802.1 401.1ZM799.9 393.6L807.2 391.1L823.2 394.5L815.9 396.8ZM814.8 388.6L822.9 385.9L838.9 389.6L830.9 392.1ZM831.3 383.1L840.1 380.2L856.2 384.2L847.4 387.0ZM849.3 377.1L859.1 373.9L875.2 378.3L865.5 381.4ZM869.4 370.5L880.2 366.9L896.3 371.7L885.5 375.1ZM891.7 363.1L903.9 359.0L919.8 364.4L907.7 368.2ZM916.8 354.7L930.5 350.2L946.1 356.2L932.6 360.4ZM945.1 345.3L960.7 340.2L975.8 346.9L960.5 351.7ZM977.3 334.6L995.1 328.7L1009.6 336.4L992.2 341.8ZM1014.3 322.4L1035.0 315.5L1048.5 324.3L1028.4 330.5ZM1057.3 308.1L1081.4 300.1L1093.5 310.2L1070.1 317.5ZM1107.7 291.3L1136.4 281.8L1146.4 293.7L1118.8 302.3ZM1167.8 271.4L1202.4 259.9L1209.3 274.1L1176.4 284.3ZM1240.6 247.2L1283.1 233.1L1285.5 250.3L1245.5 262.8ZM16254.0 -4738.1L-164427.9 55259.3L15479.5 -4178.0L8037.8 -1856.3ZM-12762.0 4896.9L-6418.3 2790.4L-14963.3 5319.6L1020794.3 -317818.7ZM772.2 410.4L777.7 408.7L793.3 411.3L787.7 413.0ZM783.5 406.9L789.4 405.1L805.1 407.9L799.1 409.6ZM795.6 403.1L802.1 401.1L817.8 404.1L811.3 406.0ZM808.8 399.0L815.9 396.8L831.7 400.1L824.6 402.1ZM823.2 394.5L830.9 392.1L846.8 395.6L839.1 397.9ZM838.9 389.6L847.4 387.0L863.2 390.8L854.8 393.3ZM856.2 384.2L865.5 381.4L881.3 385.5L872.1 388.2ZM875.2 378.3L885.5 375.1L901.3 379.6L891.0 382.6ZM896.3 371.7L907.7 368.2L923.3 373.2L912.0 376.5ZM919.8 364.4L932.6 360.4L947.9 365.9L935.3 369.7ZM946.1 356.2L960.5 351.7L975.4 357.9L961.3 362.0ZM975.8 346.9L992.2 341.8L1006.5 348.7L990.5 353.4ZM1009.6 336.4L1028.4 330.5L1041.9 338.4L1023.6 343.7ZM1048.5 324.3L1070.1 317.5L1082.4 326.5L1061.4 332.6ZM1093.5 310.2L1118.8 302.3L1129.4 312.7L1105.0 319.8ZM1146.4 293.7L1176.4 284.3L1184.5 296.5L1155.8 304.9ZM1209.3 274.1L1245.5 262.8L1250.0 277.3L1215.8 287.3ZM1285.5 250.3L1329.9 236.5L1329.2 254.0L1287.7 266.2ZM-14963.3 5319.6L-7181.0 2891.7L-18653.2 6119.4L100090.1 -28734.7ZM782.3 414.6L787.7 413.0L803.1 415.5L797.7 417.0ZM793.3 411.3L799.1 409.6L814.6 412.3L808.7 413.9ZM805.1 407.9L811.3 406.0L826.9 408.9L820.6 410.7ZM817.8 404.1L824.6 402.1L840.3 405.2L833.5 407.1ZM831.7 400.1L839.1 397.9L854.7 401.2L847.3 403.3ZM846.8 395.6L854.8 393.3L870.5 396.9L862.4 399.1ZM863.2 390.8L872.1 388.2L887.7 392.1L878.9 394.5ZM881.3 385.5L891.0 382.6L906.6 386.9L896.9 389.6ZM901.3 379.6L912.0 376.5L927.4 381.1L916.7 384.1ZM923.3 373.2L935.3 369.7L950.4 374.8L938.6 378.0ZM947.9 365.9L961.3 362.0L976.0 367.7L962.8 371.3ZM975.4 357.9L990.5 353.4L1004.7 359.8L989.9 363.8ZM1006.5 348.7L1023.6 343.7L1037.0 350.8L1020.4 355.4ZM1041.9 338.4L1061.4 332.6L1073.8 340.6L1054.8 345.9ZM1082.4 326.5L1105.0 319.8L1115.9 329.0L1094.1 335.0ZM1129.4 312.7L1155.8 304.9L1164.7 315.5L1139.4 322.5ZM1184.5 296.5L1215.8 287.3L1221.9 299.7L1192.1 307.9ZM1250.0 277.3L1287.7 266.2L1289.7 280.9L1254.3 290.7ZM-18653.2 6119.4L-8241.7 3063.3L-25664.3 7734.0L48367.2 -12736.5ZM803.1 415.5L808.7 413.9L824.1 416.5L818.4 418.0ZM814.6 412.3L820.6 410.7L836.0 413.4L830.0 415.0ZM826.9 408.9L833.5 407.1L848.9 410.1L842.4 411.8ZM840.3 405.2L847.3 403.3L862.8 406.4L855.7 408.3ZM854.7 401.2L862.4 399.1L877.9 402.5L870.2 404.5ZM870.5 396.9L878.9 394.5L894.3 398.2L885.9 400.4ZM887.7 392.1L896.9 389.6L912.2 393.6L903.1 395.9ZM906.6 386.9L916.7 384.1L931.8 388.4L921.8 391.1ZM927.4 381.1L938.6 378.0L953.4 382.8L942.4 385.7ZM950.4 374.8L962.8 371.3L977.4 376.6L965.1 379.8ZM976.0 367.7L989.9 363.8L1004.0 369.6L990.3 373.2ZM1004.7 359.8L1020.4 355.4L1033.7 361.9L1018.4 365.9ZM1037.0 350.8L1054.8 345.9L1067.2 353.1L1050.0 357.6ZM1073.8 340.6L1094.1 335.0L1105.3 343.2L1085.7 348.3ZM1115.9 329.0L1139.4 322.5L1148.9 331.8L1126.3 337.7ZM1164.7 315.5L1192.1 307.9L1199.3 318.7L1173.1 325.5ZM1221.9 299.7L1254.3 290.7L1258.2 303.3L1227.6 311.3ZM1289.7 280.9L1328.6 270.2L1328.1 285.1L1291.6 294.6ZM-25664.3 7734.0L-9776.1 3340.7L-43240.6 11908.1L30498.3 -7322.2ZM824.1 416.5L830.0 415.0L845.3 417.7L839.4 419.1ZM836.0 413.4L842.4 411.8L857.7 414.6L851.4 416.2ZM848.9 410.1L855.7 408.3L871.0 411.3L864.2 413.0ZM862.8 406.4L870.2 404.5L885.5 407.7L878.1 409.6ZM877.9 402.5L885.9 400.4L901.1 403.9L893.2 405.9ZM894.3 398.2L903.1 395.9L918.2 399.7L909.5 401.8ZM912.2 393.6L921.8 391.1L936.7 395.1L927.2 397.5ZM931.8 388.4L942.4 385.7L957.1 390.1L946.6 392.7ZM953.4 382.8L965.1 379.8L979.4 384.6L968.0 387.4ZM977.4 376.6L990.3 373.2L1004.2 378.5L991.5 381.7ZM1004.0 369.6L1018.4 365.9L1031.7 371.8L1017.5 375.2ZM1033.7 361.9L1050.0 357.6L1062.4 364.2L1046.6 368.1ZM1067.2 353.1L1085.7 348.3L1097.0 355.7L1079.2 360.1ZM1105.3 343.2L1126.3 337.7L1136.2 346.0L1116.0 351.0ZM1148.9 331.8L1173.1 325.5L1181.1 335.0L1157.9 340.7ZM1199.3 318.7L1227.6 311.3L1232.9 322.2L1206.0 328.8ZM1258.2 303.3L1291.6 294.6L1293.4 307.3L1261.9 315.1ZM-43240.6 11908.1L-12144.7 3798.6L-158786.4 39723.7L21683.6 -4713.4ZM845.3 417.7L851.4 416.2L866.5 418.9L860.4 420.3ZM857.7 414.6L864.2 413.0L879.4 415.9L872.8 417.4ZM871.0 411.3L878.1 409.6L893.2 412.7L886.2 414.3ZM885.5 407.7L893.2 405.9L908.2 409.2L900.6 410.9ZM901.1 403.9L909.5 401.8L924.4 405.4L916.1 407.3ZM918.2 399.7L927.2 397.5L942.0 401.3L933.0 403.4ZM936.7 395.1L946.6 392.7L961.1 396.9L951.3 399.1ZM957.1 390.1L968.0 387.4L982.1 392.0L971.4 394.5ZM979.4 384.6L991.5 381.7L1005.2 386.6L993.4 389.3ZM1004.2 378.5L1017.5 375.2L1030.7 380.7L1017.6 383.7ZM1031.7 371.8L1046.6 368.1L1059.0 374.1L1044.5 377.5ZM1062.4 364.2L1079.2 360.1L1090.6 366.7L1074.4 370.5ZM1097.0 355.7L1116.0 351.0L1126.2 358.4L1107.9 362.7ZM1136.2 346.0L1157.9 340.7L1166.4 349.1L1145.7 353.9ZM1181.1 335.0L1206.0 328.8L1212.4 338.4L1188.6 343.9ZM1232.9 322.2L1261.9 315.1L1265.4 326.1L1237.9 332.4ZM1293.4 307.3L1327.6 298.9L1327.1 311.7L1295.0 319.2ZM-158786.4 39723.7L-16215.6 4618.5L88139.4 -19891.1L16535.7 -3227.6ZM866.5 418.9L872.8 417.4L887.9 420.2L881.6 421.6ZM879.4 415.9L886.2 414.3L901.1 417.3L894.4 418.7ZM893.2 412.7L900.6 410.9L915.4 414.1L908.2 415.7ZM908.2 409.2L916.1 407.3L930.8 410.7L923.0 412.4ZM924.4 405.4L933.0 403.4L947.5 407.0L939.0 408.9ZM942.0 401.3L951.3 399.1L965.6 403.0L956.4 405.1ZM961.1 396.9L971.4 394.5L985.4 398.7L975.3 400.9ZM982.1 392.0L993.4 389.3L1007.0 394.0L995.9 396.4ZM1005.2 386.6L1017.6 383.7L1030.7 388.7L1018.6 391.4ZM1030.7 380.7L1044.5 377.5L1056.9 383.0L1043.5 385.9ZM1059.0 374.1L1074.4 370.5L1085.9 376.6L1071.0 379.9ZM1090.6 366.7L1107.9 362.7L1118.3 369.4L1101.6 373.1ZM1126.2 358.4L1145.7 353.9L1154.7 361.4L1135.9 365.6ZM1166.4 349.1L1188.6 343.9L1195.8 352.4L1174.6 357.1ZM1212.4 338.4L1237.9 332.4L1242.6 342.1L1218.4 347.4ZM1265.4 326.1L1295.0 319.2L1296.5 330.2L1268.6 336.4ZM88139.4 -19891.1L-24731.4 6375.9L33725.2 -6809.1L13210.7 -2292.7ZM887.9 420.2L894.4 418.7L909.2 421.6L902.7 422.9ZM901.1 417.3L908.2 415.7L922.9 418.7L915.9 420.2ZM915.4 414.1L923.0 412.4L937.6 415.7L930.1 417.2ZM930.8 410.7L939.0 408.9L953.4 412.4L945.3 414.0ZM947.5 407.0L956.4 405.1L970.5 408.8L961.8 410.6ZM965.6 403.0L975.3 400.9L989.1 404.9L979.6 406.9ZM985.4 398.7L995.9 396.4L1009.4 400.7L999.0 402.8ZM1007.0 394.0L1018.6 391.4L1031.5 396.1L1020.2 398.4ZM1030.7 388.7L1043.5 385.9L1055.8 391.0L1043.4 393.6ZM1056.9 383.0L1071.0 379.9L1082.6 385.4L1068.8 388.3ZM1085.9 376.6L1101.6 373.1L1112.2 379.2L1097.0 382.4ZM1118.3 369.4L1135.9 365.6L1145.2 372.4L1128.3 375.9ZM1154.7 361.4L1174.6 357.1L1182.3 364.6L1163.2 368.6ZM1195.8 352.4L1218.4 347.4L1224.1 355.9L1202.5 360.4ZM1242.6 342.1L1268.6 336.4L1271.6 346.0L1247.1 351.1ZM33725.2 -6809.1L-53268.1 12342.8L20624.0 -3688.0L10912.6 -1663.6ZM-14333.6 3771.2L-8094.7 2397.7L-22527.4 5306.9L312601.7 -64550.4ZM909.2 421.6L915.9 420.2L930.5 423.0L923.8 424.4ZM922.9 418.7L930.1 417.2L944.5 420.3L937.4 421.7ZM937.6 415.7L945.3 414.0L959.6 417.3L951.9 418.8ZM953.4 412.4L961.8 410.6L975.8 414.1L967.5 415.7ZM970.5 408.8L979.6 406.9L993.3 410.6L984.4 412.4ZM989.1 404.9L999.0 402.8L1012.4 406.9L1002.7 408.8ZM1009.4 400.7L1020.2 398.4L1033.0 402.8L1022.5 404.9ZM1031.5 396.1L1043.4 393.6L1055.6 398.3L1044.1 400.6ZM1055.8 391.0L1068.8 388.3L1080.4 393.4L1067.7 395.9ZM1082.6 385.4L1097.0 382.4L1107.7 388.0L1093.7 390.8ZM1112.2 379.2L1128.3 375.9L1137.8 382.1L1122.4 385.1ZM1145.2 372.4L1163.2 368.6L1171.4 375.5L1154.1 378.9ZM1182.3 364.6L1202.5 360.4L1208.9 368.0L1189.6 371.9ZM1224.1 355.9L1247.1 351.1L1251.3 359.7L1229.4 364.0ZM1271.6 346.0L1298.0 340.5L1299.3 350.2L1274.5 355.1ZM-22527.4 5306.9L-10586.4 2817.8L-52523.9 10981.8L39398.8 -7175.5ZM930.5 423.0L937.4 421.7L951.6 424.6L944.8 425.9ZM944.5 420.3L951.9 418.8L966.0 421.9L958.7 423.3ZM959.6 417.3L967.5 415.7L981.4 419.0L973.5 420.5ZM975.8 414.1L984.4 412.4L997.9 415.9L989.5 417.5ZM993.3 410.6L1002.7 408.8L1015.8 412.6L1006.7 414.3ZM1012.4 406.9L1022.5 404.9L1035.2 408.9L1025.3 410.8ZM1033.0 402.8L1044.1 400.6L1056.3 405.0L1045.5 407.0ZM1055.6 398.3L1067.7 395.9L1079.3 400.7L1067.5 402.9ZM1080.4 393.4L1093.7 390.8L1104.4 396.0L1091.6 398.4ZM1107.7 388.0L1122.4 385.1L1132.1 390.8L1117.9 393.5ZM1137.8 382.1L1154.1 378.9L1162.7 385.1L1147.0 388.0ZM1171.4 375.5L1189.6 371.9L1196.6 378.7L1179.2 382.0ZM1208.9 368.0L1229.4 364.0L1234.5 371.6L1215.0 375.3ZM1251.3 359.7L1274.5 355.1L1277.2 363.6L1255.2 367.7ZM-52523.9 10981.8L-15225.9 3614.4L160753.4 -29509.6L20969.0 -3325.1ZM951.6 424.6L958.7 423.3L972.6 426.2L965.7 427.5ZM966.0 421.9L973.5 420.5L987.2 423.7L979.8 425.0ZM981.4 419.0L989.5 417.5L1002.9 420.9L994.9 422.3ZM997.9 415.9L1006.7 414.3L1019.8 417.9L1011.2 419.4ZM1015.8 412.6L1025.3 410.8L1038.0 414.6L1028.7 416.3ZM1035.2 408.9L1045.5 407.0L1057.7 411.1L1047.6 412.9ZM1056.3 405.0L1067.5 402.9L1079.1 407.3L1068.1 409.3ZM1079.3 400.7L1091.6 398.4L1102.3 403.2L1090.4 405.3ZM1104.4 396.0L1117.9 393.5L1127.8 398.7L1114.8 401.0ZM1132.1 390.8L1147.0 388.0L1155.8 393.7L1141.4 396.2ZM1162.7 385.1L1179.2 382.0L1186.6 388.2L1170.8 391.0ZM1196.6 378.7L1215.0 375.3L1220.8 382.1L1203.3 385.3ZM1234.5 371.6L1255.2 367.7L1258.9 375.4L1239.3 378.8ZM1277.2 363.6L1300.5 359.2L1301.7 367.7L1279.7 371.7ZM160753.4 -29509.6L-26857.2 5633.8L31915.7 -5074.4L14275.5 -1938.6ZM972.6 426.2L979.8 425.0L993.4 428.0L986.3 429.2ZM987.2 423.7L994.9 422.3L1008.2 425.5L1000.7 426.7ZM1002.9 420.9L1011.2 419.4L1024.2 422.8L1016.1 424.1ZM1019.8 417.9L1028.7 416.3L1041.3 419.9L1032.6 421.4ZM1038.0 414.6L1047.6 412.9L1059.7 416.8L1050.3 418.4ZM1057.7 411.1L1068.1 409.3L1079.6 413.4L1069.5 415.1ZM1079.1 407.3L1090.4 405.3L1101.2 409.8L1090.2 411.6ZM1102.3 403.2L1114.8 401.0L1124.8 405.8L1112.8 407.8ZM1127.8 398.7L1141.4 396.2L1150.4 401.5L1137.3 403.7ZM1155.8 393.7L1170.8 391.0L1178.6 396.7L1164.2 399.1ZM1186.6 388.2L1203.3 385.3L1209.6 391.5L1193.7 394.2ZM1220.8 382.1L1239.3 378.8L1243.9 385.7L1226.3 388.7ZM1258.9 375.4L1279.7 371.7L1282.1 379.2L1262.5 382.5ZM993.4 428.0L1000.7 426.7L1013.9 429.8L1006.7 430.9ZM1008.2 425.5L1016.1 424.1L1028.9 427.4L1021.3 428.6ZM1024.2 422.8L1032.6 421.4L1045.0 424.8L1036.8 426.1ZM1041.3 419.9L1050.3 418.4L1062.3 422.0L1053.5 423.4ZM1059.7 416.8L1069.5 415.1L1080.9 419.0L1071.4 420.5ZM1079.6 413.4L1090.2 411.6L1101.0 415.8L1090.8 417.4ZM1101.2 409.8L1112.8 407.8L1122.8 412.3L1111.7 414.1ZM1124.8 405.8L1137.3 403.7L1146.5 408.5L1134.4 410.4ZM1150.4 401.5L1164.2 399.1L1172.2 404.4L1159.1 406.5ZM1178.6 396.7L1193.7 394.2L1200.5 399.8L1186.0 402.1ZM1209.6 391.5L1226.3 388.7L1231.5 394.9L1215.6 397.4ZM1243.9 385.7L1262.5 382.5L1265.8 389.4L1248.2 392.2ZM1282.1 379.2L1302.8 375.7L1303.9 383.2L1284.3 386.4ZM1013.9 429.8L1021.3 428.6L1034.0 431.6L1026.8 432.7ZM1028.9 427.4L1036.8 426.1L1049.2 429.3L1041.5 430.5ZM1045.0 424.8L1053.5 423.4L1065.4 426.8L1057.2 428.1ZM1062.3 422.0L1071.4 420.5L1082.9 424.2L1074.0 425.5ZM1080.9 419.0L1090.8 417.4L1101.6 421.3L1092.1 422.8ZM1101.0 415.8L1111.7 414.1L1121.8 418.2L1111.5 419.8ZM1122.8 412.3L1134.4 410.4L1143.6 414.9L1132.5 416.6ZM1146.5 408.5L1159.1 406.5L1167.3 411.3L1155.2 413.1ZM1172.2 404.4L1186.0 402.1L1193.2 407.4L1180.0 409.4ZM1200.5 399.8L1215.6 397.4L1221.4 403.1L1206.9 405.3ZM1231.5 394.9L1248.2 392.2L1252.3 398.3L1236.5 400.7ZM1265.8 389.4L1284.3 386.4L1286.4 393.1L1268.9 395.8ZM1034.0 431.6L1041.5 430.5L1053.8 433.6L1046.5 434.6ZM1049.2 429.3L1057.2 428.1L1069.0 431.3L1061.3 432.5ZM1065.4 426.8L1074.0 425.5L1085.4 429.0L1077.1 430.2ZM1082.9 424.2L1092.1 422.8L1102.8 426.4L1093.9 427.7ZM1101.6 421.3L1111.5 419.8L1121.6 423.7L1112.1 425.1ZM1121.8 418.2L1132.5 416.6L1141.9 420.8L1131.6 422.3ZM1143.6 414.9L1155.2 413.1L1163.7 417.6L1152.6 419.2ZM1167.3 411.3L1180.0 409.4L1187.4 414.2L1175.3 415.9ZM1193.2 407.4L1206.9 405.3L1213.1 410.4L1200.0 412.3ZM1221.4 403.1L1236.5 400.7L1241.2 406.4L1226.8 408.4ZM1252.3 398.3L1268.9 395.8L1271.9 401.9L1256.2 404.2ZM1286.4 393.1L1304.8 390.3L1305.8 397.0L1288.4 399.5ZM1053.8 433.6L1061.3 432.5L1073.0 435.5L1065.8 436.5ZM1069.0 431.3L1077.1 430.2L1088.4 433.4L1080.6 434.5ZM1085.4 429.0L1093.9 427.7L1104.7 431.2L1096.4 432.3ZM1102.8 426.4L1112.1 425.1L1122.2 428.7L1113.3 430.0ZM1121.6 423.7L1131.6 422.3L1141.0 426.2L1131.4 427.5ZM1141.9 420.8L1152.6 419.2L1161.2 423.4L1150.9 424.8ZM1163.7 417.6L1175.3 415.9L1183.0 420.4L1171.9 421.9ZM1187.4 414.2L1200.0 412.3L1206.5 417.1L1194.5 418.8ZM1213.1 410.4L1226.8 408.4L1232.1 413.6L1219.0 415.4ZM1241.2 406.4L1256.2 404.2L1259.9 409.7L1245.7 411.7ZM1271.9 401.9L1288.4 399.5L1290.3 405.5L1274.8 407.7ZM1073.0 435.5L1080.6 434.5L1091.8 437.6L1084.5 438.5ZM1088.4 433.4L1096.4 432.3L1107.1 435.6L1099.4 436.6ZM1104.7 431.2L1113.3 430.0L1123.5 433.4L1115.2 434.5ZM1122.2 428.7L1131.4 427.5L1140.9 431.1L1132.0 432.3ZM1141.0 426.2L1150.9 424.8L1159.6 428.7L1150.1 429.9ZM1161.2 423.4L1171.9 421.9L1179.7 426.0L1169.5 427.4ZM1183.0 420.4L1194.5 418.8L1201.3 423.2L1190.3 424.6ZM1206.5 417.1L1219.0 415.4L1224.7 420.1L1212.8 421.7ZM1232.1 413.6L1245.7 411.7L1250.0 416.8L1237.1 418.5ZM1259.9 409.7L1274.8 407.7L1277.5 413.2L1263.4 415.0ZM1290.3 405.5L1306.6 403.3L1307.4 409.2L1292.1 411.2ZM1107.1 435.6L1115.2 434.5L1125.3 437.8L1117.6 438.7ZM1123.5 433.4L1132.0 432.3L1141.6 435.7L1133.3 436.8ZM1140.9 431.1L1150.1 429.9L1158.9 433.5L1150.1 434.6ZM1159.6 428.7L1169.5 427.4L1177.5 431.2L1168.0 432.4ZM1179.7 426.0L1190.3 424.6L1197.4 428.7L1187.2 430.0ZM1201.3 423.2L1212.8 421.7L1218.7 426.0L1207.9 427.4ZM1224.7 420.1L1237.1 418.5L1241.8 423.2L1230.1 424.6ZM1250.0 416.8L1263.4 415.0L1266.8 420.0L1254.0 421.6ZM1277.5 413.2L1292.1 411.2L1293.8 416.6L1280.0 418.4ZM1125.3 437.8L1133.3 436.8L1142.8 440.0L1135.2 440.9ZM1141.6 435.7L1150.1 434.6L1159.0 438.1L1150.8 439.0ZM1158.9 433.5L1168.0 432.4L1176.1 436.0L1167.4 437.1ZM1177.5 431.2L1187.2 430.0L1194.5 433.8L1185.1 434.9ZM1197.4 428.7L1207.9 427.4L1214.1 431.5L1204.1 432.7ZM1218.7 426.0L1230.1 424.6L1235.2 429.0L1224.5 430.2ZM1241.8 423.2L1254.0 421.6L1257.9 426.2L1246.4 427.6ZM1266.8 420.0L1280.0 418.4L1282.4 423.3L1269.9 424.8ZM1293.8 416.6L1308.2 414.8L1309.0 420.1L1295.4 421.8ZM1142.8 440.0L1150.8 439.0L1159.7 442.3L1152.1 443.1ZM1159.0 438.1L1167.4 437.1L1175.6 440.4L1167.5 441.4ZM1176.1 436.0L1185.1 434.9L1192.6 438.5L1184.0 439.5ZM1194.5 433.8L1204.1 432.7L1210.6 436.4L1201.5 437.5ZM1214.1 431.5L1224.5 430.2L1230.0 434.2L1220.1 435.4ZM1235.2 429.0L1246.4 427.6L1250.7 431.9L1240.2 433.1ZM1257.9 426.2L1269.9 424.8L1273.0 429.4L1261.6 430.6ZM1282.4 423.3L1295.4 421.8L1297.0 426.6L1284.7 428.0Z" fill="#00a8a0" opacity="0.45"/>
<path d="M-883.9 336.2L-2181.4 138.8M-832.5 340.2L-2180.2 130.7M1656.9 336.6L2959.3 138.0" stroke="#008a82" stroke-width="1.4" fill="none" opacity="0.1"/>
<path d="M-782.1 344.1L-2178.8 122.3M-732.8 348.0L-2177.4 113.6M-684.6 351.9L-2175.9 104.4M1536.5 345.9L2956.2 118.2" stroke="#008a82" stroke-width="1.4" fill="none" opacity="0.2"/>
<path d="M-637.4 355.8L-2174.3 94.9M-591.4 359.7L-2172.6 84.9M-546.4 363.6L-2170.8 74.5M1326.1 363.4L2948.9 74.9M1426.5 354.8L2952.7 97.2" stroke="#008a82" stroke-width="1.4" fill="none" opacity="0.3"/>
<path d="M-502.4 367.5L-2168.8 63.6M-459.6 371.4L-2166.7 52.2M-417.8 375.2L-2164.4 40.2M1234.4 371.6L2944.6 51.3" stroke="#008a82" stroke-width="1.4" fill="none" opacity="0.4"/>
<path d="M-377.1 379.1L-2162.0 27.6M-337.4 383.0L-2159.3 14.3M-298.9 386.9L-2156.5 0.4M1074.4 387.1L2934.3 -0.6M1150.7 379.5L2939.7 26.2" stroke="#008a82" stroke-width="1.4" fill="none" opacity="0.5"/>
<path d="M-261.4 390.7L-2153.4 -14.4M-225.0 394.6L-2150.0 -29.9M-189.6 398.5L-2146.3 -46.3M941.7 401.4L2921.3 -59.3M1005.0 394.4L2928.2 -29.0" stroke="#008a82" stroke-width="1.4" fill="none" opacity="0.6"/>
<path d="M-155.3 402.3L-2142.3 -63.7M-122.1 406.2L-2137.9 -82.2M-90.0 410.0L-2133.1 -101.8M-58.9 413.8L-2127.8 -122.6M-28.9 417.7L-2121.9 -144.8M-0.0 421.5L-2115.4 -168.6M27.8 425.3L-2108.2 -193.9M54.6 429.1L-2100.1 -221.2M80.3 432.9L-2091.1 -250.4M104.9 436.6L-2081.0 -281.9M128.5 440.4L-2069.6 -315.8M151.0 444.1L-2056.6 -352.6M172.4 447.8L-2041.9 -392.4M192.8 451.5L-2025.0 -435.7M212.1 455.2L-2005.6 -482.9M230.3 458.8L-1983.1 -534.5M247.5 462.4L-1956.9 -591.0M263.6 465.9L-1926.3 -653.1M278.7 469.4L-1890.1 -721.3M292.7 472.9L-1847.1 -796.6M305.6 476.2L-1795.8 -879.5M317.6 479.5L-1733.9 -971.0M328.5 482.7L-1659.0 -1071.7M338.4 485.7L-1567.8 -1182.0M347.3 488.6L-1456.2 -1301.8M355.3 491.3L-1319.4 -1430.0M362.4 493.8L-1152.1 -1564.0M368.6 496.0L-949.2 -1699.2M374.1 497.9L-706.6 -1827.9M378.9 499.3L-423.5 -1939.8M383.3 500.3L-104.4 -2022.7M387.3 500.0L239.4 -2065.7M391.3 500.1L591.3 -2062.1M395.4 500.2L932.4 -2012.6M399.8 499.1L1246.6 -1924.5M404.7 497.6L1523.7 -1809.3M410.3 495.7L1760.2 -1679.0M416.7 493.4L1957.5 -1543.6M423.9 490.9L2119.8 -1410.2M432.0 488.2L2252.5 -1283.2M441.0 485.3L2360.7 -1164.8M451.1 482.2L2449.3 -1055.9M462.2 479.0L2522.0 -956.7M474.2 475.7L2582.1 -866.5M487.4 472.3L2632.3 -784.5M502.2 468.7L2675.7 -707.3M518.9 464.9L2713.5 -634.9M537.5 460.9L2746.2 -567.1M558.3 456.7L2774.7 -503.7M581.4 452.2L2799.5 -444.5M607.2 447.5L2821.1 -389.2M635.8 442.6L2840.0 -337.6M667.6 437.5L2856.5 -289.4M702.8 432.1L2871.0 -244.3M741.7 426.5L2883.8 -202.3M784.6 420.6L2895.0 -162.9M832.0 414.5L2904.9 -126.1M884.2 408.1L2913.6 -91.6" stroke="#008a82" stroke-width="1.4" fill="none" opacity="0.7"/>
<path d="M11.1 326.0L-1257.3 157.4M71.0 330.0L-1256.2 149.4" stroke="#008a82" stroke-width="1.4" fill="none" opacity="0.1"/>
<path d="M129.5 334.0L-1255.1 140.9M186.7 338.0L-1253.8 132.1M242.4 342.0L-1252.5 122.8" stroke="#008a82" stroke-width="1.4" fill="none" opacity="0.2"/>
<path d="M296.6 346.0L-1251.0 113.0M349.5 350.0L-1249.5 102.8" stroke="#008a82" stroke-width="1.4" fill="none" opacity="0.3"/>
<path d="M400.9 353.9L-1247.8 91.9M450.9 357.9L-1245.9 80.5M499.6 361.9L-1243.9 68.4" stroke="#008a82" stroke-width="1.4" fill="none" opacity="0.4"/>
<path d="M546.7 365.9L-1241.7 55.6M592.5 369.8L-1239.4 42.1M636.9 373.8L-1236.7 27.7M2021.9 372.1L3877.9 34.0" stroke="#008a82" stroke-width="1.4" fill="none" opacity="0.5"/>
<path d="M679.8 377.8L-1233.9 12.4M721.3 381.7L-1230.7 -3.9M761.4 385.7L-1227.2 -21.3M1895.5 384.0L3868.7 -13.7M1936.2 380.0L3872.1 3.2M1978.4 376.1L3875.1 19.1" stroke="#008a82" stroke-width="1.4" fill="none" opacity="0.6"/>
<path d="M800.1 389.6L-1223.3 -40.0M837.4 393.6L-1219.0 -60.0M873.2 397.5L-1214.2 -81.4M907.7 401.4L-1208.7 -104.6M940.7 405.3L-1202.6 -129.6M972.3 409.2L-1195.7 -156.7M1002.5 413.1L-1187.8 -186.1M1031.3 417.0L-1178.8 -218.2M1058.6 420.9L-1168.5 -253.3M1084.6 424.7L-1156.5 -291.8M1109.1 428.6L-1142.5 -334.3M1132.3 432.4L-1126.1 -381.2M1154.0 436.1L-1106.7 -433.3M1174.3 439.9L-1083.5 -491.5M1193.2 443.6L-1055.6 -556.6M1210.7 447.3L-1021.7 -629.9M1226.8 450.9L-979.9 -712.6M1241.5 454.4L-928.0 -806.4M1254.8 457.8L-862.7 -912.8M1266.8 461.1L-779.6 -1033.5M1277.4 464.3L-672.8 -1170.0M1286.7 467.3L-534.3 -1322.5M1294.8 470.0L-354.2 -1489.3M1301.7 472.5L-120.9 -1664.2M1306.8 473.1L176.1 -1834.8M1311.0 471.4L540.9 -1980.5M1315.9 470.3L963.9 -2075.5M1321.1 470.0L1417.6 -2098.2M1326.3 470.7L1862.7 -2042.7M1330.9 472.0L2263.1 -1922.9M1334.9 473.7L2599.1 -1763.6M1341.1 471.5L2867.9 -1589.0M1348.5 468.9L3077.0 -1416.5M1357.1 466.0L3238.0 -1255.4M1367.0 463.0L3361.8 -1109.7M1378.2 459.7L3457.6 -980.0M1390.7 456.4L3532.5 -865.6M1404.6 452.9L3591.6 -764.8M1419.9 449.3L3638.8 -676.0M1436.6 445.7L3677.0 -597.5M1454.7 442.0L3708.2 -527.9M1474.2 438.3L3733.9 -465.8M1495.1 434.5L3755.4 -410.4M1517.5 430.7L3773.5 -360.6M1541.2 426.9L3788.8 -315.6M1566.3 423.1L3801.8 -274.9M1592.9 419.2L3813.1 -237.9M1620.8 415.4L3822.8 -204.2M1650.2 411.5L3831.3 -173.2M1681.0 407.6L3838.8 -144.8M1713.2 403.7L3845.3 -118.7M1746.9 399.7L3851.1 -94.5M1781.9 395.8L3856.3 -72.1M1818.4 391.9L3860.9 -51.2M1856.2 387.9L3865.0 -31.8" stroke="#008a82" stroke-width="1.4" fill="none" opacity="0.7"/>
<rect x="255" y="127" width="1040" height="400" fill="url(#xh)" mask="url(#xm)"/>
</g>
<polygon points="255.0,127.0 357.0,127.0 343.0,444.0 255.0,432.0" fill="#0a14ee" />
<g clip-path="url(#cb)">
<polygon points="255.0,87.0 360.0,128.8 360.0,176.8 255.0,140.0" fill="#0a26ff" opacity="0.55"/>
<polygon points="255.0,176.7 360.0,210.1 360.0,239.2 255.0,208.8" fill="#0a26ff" opacity="0.55"/>
<polygon points="255.0,252.0 360.0,278.4 360.0,310.1 255.0,286.9" fill="#0a26ff" opacity="0.55"/>
<polygon points="255.0,317.6 360.0,337.9 360.0,360.7 255.0,342.7" fill="#0a26ff" opacity="0.55"/>
<polygon points="255.0,363.6 360.0,379.6 360.0,397.2 255.0,383.0" fill="#0a26ff" opacity="0.55"/>
<polygon points="255.0,402.6 360.0,415.0 360.0,432.6 255.0,422.0" fill="#0a26ff" opacity="0.55"/>
<path d="M255 87.0L360 128.8M255 140.0L360 176.8M255 176.7L360 210.1M255 208.8L360 239.2M255 252.0L360 278.4M255 286.9L360 310.1M255 317.6L360 337.9M255 342.7L360 360.7M255 363.6L360 379.6M255 383.0L360 397.2M255 402.6L360 415.0M255 422.0L360 432.6M255 445.0L360 453.5" stroke="#0008a8" stroke-width="1.3" fill="none" opacity="0.7"/>
<polygon points="283.0,127.0 297.0,127.0 305.0,440.0 296.0,440.0" fill="#000890" opacity="0.3"/>
<line x1="255.0" y1="302.0" x2="294.0" y2="437.0" stroke="#a07070" stroke-width="1.2" />
</g>
<polygon points="355.0,127.0 359.0,127.0 346.0,444.0 342.0,444.0" fill="#00e840" />
<polygon points="343.0,425.0 367.0,428.0 367.0,447.0 343.0,444.0" fill="#a8b800" />
<line x1="343.0" y1="425.0" x2="367.0" y2="428.0" stroke="#0010d0" stroke-width="1.5" />
<polygon points="380.0,508.0 392.0,508.0 392.0,660.0 380.0,660.0" fill="#20e820" />
<polygon points="380.0,651.0 392.0,651.0 392.0,780.0 380.0,780.0" fill="#e07000" />
<polygon points="255.0,431.0 386.0,449.0 374.0,985.0 255.0,985.0" fill="#78ea00" />
<g clip-path="url(#ccab)">
<path d="M232.1 427.9L263.0 432.1L262.5 457.0L231.6 453.4ZM295.9 436.6L320.8 440.0L320.4 463.7L295.4 460.8ZM350.7 444.1L386.1 449.0L385.6 471.3L350.3 467.2ZM262.5 457.0L295.4 460.8L294.9 485.4L262.1 482.3ZM320.4 463.7L350.3 467.2L349.8 490.5L319.9 487.7ZM231.1 479.3L262.1 482.3L261.6 507.8L230.7 505.6ZM294.9 485.4L319.9 487.7L319.4 512.0L294.4 510.2ZM349.8 490.5L385.1 493.9L384.6 516.8L349.3 514.2ZM261.6 507.8L294.4 510.2L293.9 535.4L261.1 533.7ZM319.4 512.0L349.3 514.2L348.9 538.2L318.9 536.6ZM230.2 532.1L261.1 533.7L260.7 559.9L229.7 559.0ZM293.9 535.4L318.9 536.6L318.4 561.6L293.4 560.8ZM348.9 538.2L384.0 539.9L383.5 563.4L348.4 562.4ZM260.7 559.9L293.4 560.8L292.9 586.6L260.2 586.4ZM318.4 561.6L348.4 562.4L347.9 587.0L317.9 586.8ZM229.2 586.2L260.2 586.4L259.7 613.3L228.7 613.8ZM292.9 586.6L317.9 586.8L317.4 612.3L292.4 612.7ZM347.9 587.0L383.0 587.2L382.4 611.2L347.4 611.8ZM259.7 613.3L292.4 612.7L291.9 639.1L259.2 640.4ZM317.4 612.3L347.4 611.8L346.9 637.0L316.9 638.1ZM228.2 641.7L259.2 640.4L258.7 667.9L227.7 669.9ZM291.9 639.1L316.9 638.1L316.4 664.3L291.3 665.9ZM346.9 637.0L381.9 635.6L381.3 660.2L346.4 662.4ZM258.7 667.9L291.3 665.9L290.8 692.9L258.2 695.7ZM316.4 664.3L346.4 662.4L345.9 688.1L315.8 690.7ZM227.2 698.4L258.2 695.7L257.7 723.9L226.7 727.3ZM290.8 692.9L315.8 690.7L315.3 717.5L290.3 720.3ZM345.9 688.1L380.8 685.1L380.2 710.4L345.4 714.2ZM257.7 723.9L290.3 720.3L289.7 747.9L257.2 752.3ZM315.3 717.5L345.4 714.2L344.9 740.6L314.8 744.6ZM226.1 756.5L257.2 752.3L256.7 781.1L225.6 786.0ZM289.7 747.9L314.8 744.6L314.2 772.0L289.2 775.9ZM344.9 740.6L379.6 735.9L379.0 761.7L344.3 767.2ZM256.7 781.1L289.2 775.9L288.6 804.3L256.2 810.2ZM314.2 772.0L344.3 767.2L343.8 794.2L313.7 799.7ZM225.1 815.9L256.2 810.2L255.6 839.6L224.5 846.1ZM288.6 804.3L313.7 799.7L313.1 827.7L288.0 832.9ZM343.8 794.2L378.4 787.8L377.9 814.3L343.2 821.4ZM255.6 839.6L288.0 832.9L287.4 861.9L255.1 869.4ZM313.1 827.7L343.2 821.4L342.7 849.0L312.6 856.0ZM224.0 876.6L255.1 869.4L254.5 899.5L223.4 907.5ZM287.4 861.9L312.6 856.0L312.0 884.7L286.9 891.1ZM342.7 849.0L377.2 841.0L376.6 868.0L342.1 876.9ZM254.5 899.5L286.9 891.1L286.3 920.7L254.0 929.9ZM312.0 884.7L342.1 876.9L341.6 905.1L311.4 913.6ZM222.8 938.7L254.0 929.9L253.4 960.6L222.3 970.3ZM286.3 920.7L311.4 913.6L310.8 942.9L285.7 950.7ZM341.6 905.1L376.0 895.3L375.4 922.9L341.0 933.6ZM253.4 960.6L285.7 950.7L285.1 980.9L252.9 991.7ZM310.8 942.9L341.0 933.6L340.4 962.4L310.2 972.5ZM221.7 1002.2L252.9 991.7L252.3 1023.1L221.1 1034.4ZM285.1 980.9L310.2 972.5L309.7 1002.4L284.5 1011.5ZM340.4 962.4L374.8 950.9L374.1 979.1L339.9 991.5ZM252.3 1023.1L284.5 1011.5L283.9 1042.4L251.7 1054.9ZM309.7 1002.4L339.9 991.5L339.3 1020.9L309.1 1032.6Z" fill="#60c800" opacity="0.35"/>
<path d="M255.0 431.0L390.0 449.5M255.0 456.1L390.0 471.8M255.0 481.6L390.0 494.3M255.0 507.4L390.0 517.2M255.0 533.4L390.0 540.2M255.0 559.8L390.0 563.6M255.0 586.4L390.0 587.2M255.0 613.4L390.0 611.1M255.0 640.6L390.0 635.2M255.0 668.1L390.0 659.7M255.0 696.0L390.0 684.3M255.0 724.1L390.0 709.3M255.0 752.6L390.0 734.5M255.0 781.4L390.0 760.0M255.0 810.4L390.0 785.7M255.0 839.8L390.0 811.7M255.0 869.4L390.0 838.0M255.0 899.4L390.0 864.5M255.0 929.6L390.0 891.4M255.0 960.1L390.0 918.4M255.0 991.0L390.0 945.8M255.0 1022.1L390.0 973.4M255.0 1053.6L390.0 1001.2M263.0 431.0L253.0 985.0M296.0 431.0L285.0 985.0M321.0 431.0L310.0 985.0M351.0 431.0L340.0 985.0" stroke="#5cb400" stroke-width="1.5" fill="none" opacity="0.92"/>
<polygon points="255.0,431.0 296.0,437.0 285.0,985.0 255.0,985.0" fill="#8af000" opacity="0.25"/>
</g>
<polygon points="640.0,506.0 667.0,506.0 667.0,800.0 640.0,800.0" fill="#66e400" />
<path d="M646 549 V505 Q659 507 661 549 Z" fill="#f0f0f0" stroke="#333" stroke-width="2"/>
<path d="M646 547 V517 Q654 521 655 547 Z" fill="#8a8a8a"/>
<polygon points="666.0,507.0 918.0,459.0 1000.0,478.0 1116.0,463.0 1122.0,860.0 666.0,780.0" fill="#f070f0" />
<polyline points="666.0,507.0 918.0,459.0" stroke="#e09020" stroke-width="1.6" fill="none"/>
<polyline points="1000.0,478.0 1116.0,463.0" stroke="#e09020" stroke-width="1.6" fill="none"/>
<line x1="666.0" y1="507.0" x2="666.0" y2="700.0" stroke="#e09020" stroke-width="1.5" />
<polyline points="918.0,459.0 1000.0,443.0 1000.0,478.0" stroke="#a0a0a0" stroke-width="1" fill="none" stroke-dasharray="2 2"/>
<polygon points="378.0,700.0 700.0,700.0 900.0,760.0 1004.0,816.0 1030.0,826.0 1030.0,985.0 374.0,985.0" fill="#00f24e" />
<polygon points="378.0,700.0 700.0,700.0 900.0,760.0 1004.0,816.0 1030.0,826.0 1030.0,985.0 374.0,985.0" fill="url(#fl)" />
<polygon points="712.0,578.0 752.0,579.0 752.0,631.0 712.0,626.0" fill="#989860" />
<polygon points="814.0,579.0 866.0,580.0 866.0,633.0 814.0,628.0" fill="#34ee08" />
<polygon points="820.0,586.0 860.0,587.0 860.0,626.0 820.0,622.0" fill="#50e020" opacity="0.35"/>
<polygon points="814.0,579.0 866.0,580.0 866.0,633.0 814.0,628.0" fill="url(#dots)" />
<path d="M692.0 494.0 L716.0 494.0 L706.4 506.0 L706.4 516.8 L698.5 521.6 L698.5 506.0 Z" fill="#b4b4b4" stroke="#3a3a3a" stroke-width="1.2"/>
<path d="M697.3 495.5 L710.5 495.5 L704.5 503.6 Z" fill="#e8e8e8"/>
<ellipse cx="710.7" cy="493.5" rx="6.0" ry="2.2" fill="#ff1010"/>
<path d="M709.7 496.0 H713.7 V546.0 H716.2 L711.7 556.0 L707.2 546.0 H709.7 Z" fill="#fff6e4" stroke="#d8c8a8" stroke-width="0.6"/>
<path d="M739.7 482.5 L766.1 482.5 L755.5 495.7 L755.5 507.6 L746.8 512.9 L746.8 495.7 Z" fill="#b4b4b4" stroke="#3a3a3a" stroke-width="1.2"/>
<path d="M745.5 484.0 L760.0 484.0 L753.4 493.1 Z" fill="#e8e8e8"/>
<ellipse cx="760.3" cy="482.0" rx="6.6" ry="2.2" fill="#ff1010"/>
<path d="M759.3 484.5 H763.3 V544.0 H765.8 L761.3 554.0 L756.8 544.0 H759.3 Z" fill="#fff6e4" stroke="#d8c8a8" stroke-width="0.6"/>
<path d="M798.4 470.0 L828.4 470.0 L816.4 485.0 L816.4 498.5 L806.5 504.5 L806.5 485.0 Z" fill="#b4b4b4" stroke="#3a3a3a" stroke-width="1.2"/>
<path d="M805.0 471.5 L821.5 471.5 L814.0 482.0 Z" fill="#e8e8e8"/>
<ellipse cx="822.0" cy="469.5" rx="7.5" ry="2.2" fill="#ff1010"/>
<path d="M821.0 472.0 H825.0 V541.0 H827.5 L823.0 551.0 L818.5 541.0 H821.0 Z" fill="#fff6e4" stroke="#d8c8a8" stroke-width="0.6"/>
<polygon points="648.0,599.0 668.0,599.0 672.0,620.0 646.0,620.0" fill="#e0a000" />
<line x1="655.0" y1="620.0" x2="655.0" y2="690.0" stroke="#e07000" stroke-width="1.5" />
<path d="M689 643 q5 3 4 12 q6 8 2 22 h-12 q-2 -10 3 -18 q-2 -10 3 -16z" fill="#ff0808"/>
<ellipse cx="688" cy="657" rx="2" ry="4" fill="#f070f0"/>
<polygon points="508.0,775.0 640.0,740.0 800.0,770.0 779.0,820.0 609.0,890.0" fill="url(#rugg)" />
<polygon points="508.0,775.0 640.0,740.0 800.0,770.0 779.0,820.0 609.0,890.0" fill="url(#dots2)" />
<polygon points="642.0,760.0 715.0,753.0 722.0,800.0 655.0,832.0" fill="#88dc00" opacity="0.7"/>
<polygon points="650.0,690.0 680.0,684.0 680.0,740.0 650.0,745.0" fill="#20e868" />
<polygon points="640.0,745.0 700.0,745.0 700.0,800.0 640.0,800.0" fill="#7ce000" />
<polygon points="657.0,731.0 669.0,731.0 669.0,747.0 657.0,747.0" fill="#ff0808" />
<polygon points="648.0,749.0 676.0,746.0 680.0,756.0 652.0,762.0" fill="#f06000" />
<polygon points="648.0,684.0 672.0,682.0 676.0,690.0 652.0,694.0" fill="#f06030" />
<polygon points="648.0,712.0 677.0,728.0 778.0,779.0 778.0,789.0 648.0,730.0" fill="#18e860" />
<polygon points="797.0,742.0 850.0,728.0 900.0,744.0 880.0,762.0 800.0,775.0" fill="#20e858" />
<polygon points="797.0,760.0 800.0,775.0 800.0,800.0 797.0,800.0" fill="#20e860" />
<polygon points="797.0,746.2 816.3,740.1 816.3,777.0 797.0,776.3" fill="#20e850" />
<polygon points="676.2,683.9 726.2,676.2 728.5,686.2 723.1,693.1 683.1,702.4 681.6,734.2 676.2,732.4" fill="#b6c600" />
<polygon points="728.5,663.1 819.4,685.4 824.7,689.3 823.2,701.9 781.6,711.9 723.1,692.7" fill="#e49200" />
<polygon points="753.9,670.0 755.5,670.8 750.8,701.6 749.3,701.3" fill="#ec8800" opacity="0.6"/>
<polygon points="783.2,677.7 784.7,678.2 780.9,710.8 779.3,710.5" fill="#ec8800" opacity="0.6"/>
<polygon points="683.1,702.4 723.1,692.8 781.6,712.1 771.6,717.0" fill="#dc9c00" />
<polygon points="682.3,703.1 771.6,717.0 778.6,779.3 676.6,732.4" fill="#cfa600" />
<polygon points="682.3,703.1 706.2,706.8 707.7,746.2 676.6,732.4" fill="#c4b400" opacity="0.8"/>
<polygon points="771.6,716.7 823.2,701.9 846.3,703.1 797.0,720.1" fill="#c4bc00" />
<polygon points="771.6,717.0 797.0,720.1 797.0,775.8 778.6,779.3" fill="#bcc000" />
<polygon points="797.0,720.1 846.3,703.1 847.1,732.4 797.0,747.8" fill="#a6cc00" />
<polygon points="676.2,683.9 726.2,676.2 728.5,663.1 819.4,685.4 824.7,689.3 823.2,701.9 846.3,703.1 847.1,732.4 797.0,747.8 797.0,775.8 778.6,779.3 676.6,732.4" fill="url(#dots)" />
<polygon points="681.6,730.8 688.5,732.4 686.9,738.5 683.1,737.3" fill="#ff0808" />
<polygon points="777.0,778.6 787.0,777.5 781.9,787.0 778.6,786.3" fill="#ff0808" />
<path d="M821 710 h8 l-1 10 q6 10 3 22 h-12 q-3 -12 3 -22z" fill="#ff0808"/>
<polygon points="842.5,685.5 866.0,686.0 868.6,711.6 841.7,707.7" fill="#f05a00" />
<path d="M846 688 v18 M850 688 v19 M854 688 v20 M858 688 v21 M862 688 v21" stroke="#ff1800" stroke-width="1.6" stroke-dasharray="5 2 3 1" fill="none"/>
<path d="M852 708 h4 l1 24 l5 10 h-16 l5 -10z" fill="#ff1808"/>
<polygon points="889.0,622.0 909.0,619.0 1004.0,626.0 978.0,629.0" fill="#28f000" />
<polygon points="978.0,629.0 1004.0,626.0 1006.0,820.0 980.0,845.0" fill="#22ee18" />
<polygon points="978.0,629.0 1004.0,626.0 1006.0,820.0 980.0,845.0" fill="url(#dots)" />
<polygon points="889.0,622.0 978.0,629.0 980.0,845.0 889.0,800.0" fill="#00e878" />
<path d="M890.5 623 L977 630 L979 843 M890.5 623 V800 M931 626 V815 M890 671 L978 682 M890 716 L978 733 M890 760 L979 780 M890 798 L979 843" stroke="#9cc800" stroke-width="3.2" fill="none"/>
<polygon points="900.0,636.0 926.0,634.0 926.0,668.0 900.0,666.0" fill="#d49800" />
<polygon points="924.0,644.0 929.0,644.0 929.0,670.0 924.0,669.0" fill="#ff0808" />
<polygon points="940.0,642.0 972.0,636.0 972.0,678.0 940.0,673.0" fill="#d89000" />
<polygon points="904.0,683.0 920.0,681.0 916.0,712.0 907.0,711.0" fill="#ff0808" />
<polygon points="917.0,682.0 928.0,680.0 928.0,716.0 915.0,713.0" fill="#c8a800" />
<path d="M962 691 h7 v8 q6 8 3 30 h-13 q-3 -20 3 -30z" fill="#ff0808"/>
<polygon points="903.0,722.0 916.0,724.0 916.0,760.0 903.0,756.0" fill="#d89000" />
<polygon points="916.0,732.0 930.0,730.0 930.0,764.0 916.0,761.0" fill="#e08000" />
<polygon points="941.0,738.0 972.0,733.0 972.0,779.0 941.0,770.0" fill="#d89000" />
<polygon points="951.0,787.0 957.0,786.0 957.0,820.0 951.0,817.0" fill="#ff0808" />
<polygon points="957.0,786.0 966.0,790.0 966.0,826.0 957.0,821.0" fill="#d89000" />
<polygon points="966.0,792.0 975.0,790.0 975.0,832.0 966.0,827.0" fill="#ff0808" />
<path d="M920 582 h8 l-1 14 q7 8 4 24 q-7 4 -14 0 q-3 -16 4 -24z" fill="#ff0808"/>
<ellipse cx="924" cy="612" rx="7.5" ry="5" fill="#e06000"/>
<path d="M937 589 h7 l-1 12 q6 8 3 21 q-6 3 -11 0 q-3 -13 3 -21z" fill="#ff0808"/>
<polygon points="1010.0,626.0 1055.0,628.0 1062.0,670.0 1006.0,665.0" fill="#d8a000" />
<path d="M1014 630 L1010 662 M1020 630 L1017 663 M1026 630 L1024 664 M1032 630 L1031 665 M1038 630 L1039 666 M1044 630 L1047 667 M1050 630 L1055 668" stroke="#c08800" stroke-width="1.5"/>
<line x1="1033.0" y1="669.0" x2="1034.0" y2="682.0" stroke="#ff2010" stroke-width="2" />
<path d="M1099.0 660.0L1073.0 652.7M1099.0 660.0L1109.4 647.0M1101.0 653.3L1077.2 646.7M1101.0 653.3L1110.5 641.4M1103.0 646.7L1081.3 640.6M1103.0 646.7L1111.7 635.8M1105.0 640.0L1085.5 634.5M1105.0 640.0L1112.8 630.2M1107.0 633.3L1089.7 628.5M1107.0 633.3L1113.9 624.7M1109.0 626.7L1093.8 622.4M1109.0 626.7L1115.1 619.1M1111.0 620.0L1098.0 616.4M1111.0 620.0L1116.2 613.5M1113.0 613.3L1102.2 610.3M1113.0 613.3L1117.3 607.9M1115.0 606.7L1106.3 604.2M1115.0 606.7L1118.5 602.3M1117.0 600.0L1110.5 598.2M1117.0 600.0L1119.6 596.8" stroke="#7ade00" stroke-width="3" fill="none"/><path d="M1099 660 Q1108 630 1117 598" stroke="#e05030" stroke-width="0.8" fill="none"/>
<polygon points="1024.0,683.0 1121.0,652.0 1121.0,697.0" fill="#24f000" />
<polygon points="1024.0,683.0 1121.0,697.0 1127.0,985.0 1029.0,985.0" fill="#14fa0a" />
<g clip-path="url(#cgb)">
<path d="M1023.8 670.0L1037.3 671.6L1037.5 684.9L1024.0 683.0ZM1050.8 673.3L1064.4 675.0L1064.6 688.8L1051.1 686.9ZM1077.9 676.6L1091.4 678.3L1091.6 692.7L1078.1 690.8ZM1105.0 680.0L1118.5 681.6L1118.7 696.6L1105.2 694.7ZM1037.5 684.9L1051.1 686.9L1051.3 700.5L1037.7 698.3ZM1064.6 688.8L1078.1 690.8L1078.3 705.0L1064.8 702.7ZM1091.6 692.7L1105.2 694.7L1105.4 709.4L1091.9 707.2ZM1118.7 696.6L1132.2 698.6L1132.4 713.9L1118.9 711.6ZM1024.2 696.0L1037.7 698.3L1038.0 711.6L1024.4 709.1ZM1051.3 700.5L1064.8 702.7L1065.0 716.6L1051.5 714.1ZM1078.3 705.0L1091.9 707.2L1092.1 721.6L1078.6 719.1ZM1105.4 709.4L1118.9 711.6L1119.1 726.7L1105.6 724.1ZM1038.0 711.6L1051.5 714.1L1051.7 727.7L1038.2 724.9ZM1065.0 716.6L1078.6 719.1L1078.8 733.3L1065.2 730.5ZM1092.1 721.6L1105.6 724.1L1105.8 738.9L1092.3 736.1ZM1119.1 726.7L1132.6 729.2L1132.9 744.5L1119.3 741.7ZM1024.6 722.1L1038.2 724.9L1038.4 738.3L1024.9 735.2ZM1051.7 727.7L1065.2 730.5L1065.5 744.4L1051.9 741.3ZM1078.8 733.3L1092.3 736.1L1092.5 750.6L1079.0 747.5ZM1105.8 738.9L1119.3 741.7L1119.5 756.7L1106.0 753.6ZM1038.4 738.3L1051.9 741.3L1052.1 755.0L1038.6 751.6ZM1065.5 744.4L1079.0 747.5L1079.2 761.7L1065.7 758.3ZM1092.5 750.6L1106.0 753.6L1106.2 768.4L1092.7 765.0ZM1119.5 756.7L1133.1 759.8L1133.3 775.1L1119.8 771.7ZM1025.1 748.3L1038.6 751.6L1038.8 765.0L1025.3 761.3ZM1052.1 755.0L1065.7 758.3L1065.9 772.3L1052.4 768.6ZM1079.2 761.7L1092.7 765.0L1092.9 779.5L1079.4 775.9ZM1106.2 768.4L1119.8 771.7L1120.0 786.8L1106.5 783.2ZM1038.8 765.0L1052.4 768.6L1052.6 782.3L1039.0 778.4ZM1065.9 772.3L1079.4 775.9L1079.6 790.1L1066.1 786.2ZM1092.9 779.5L1106.5 783.2L1106.7 797.9L1093.2 794.0ZM1120.0 786.8L1133.5 790.4L1133.7 805.8L1120.2 801.9ZM1025.5 774.4L1039.0 778.4L1039.3 791.7L1025.7 787.5ZM1052.6 782.3L1066.1 786.2L1066.3 800.1L1052.8 795.9ZM1079.6 790.1L1093.2 794.0L1093.4 808.5L1079.8 804.3ZM1106.7 797.9L1120.2 801.9L1120.4 816.9L1106.9 812.7ZM1039.3 791.7L1052.8 795.9L1053.0 809.6L1039.5 805.1ZM1066.3 800.1L1079.8 804.3L1080.1 818.6L1066.5 814.1ZM1093.4 808.5L1106.9 812.7L1107.1 827.5L1093.6 823.0ZM1120.4 816.9L1133.9 821.1L1134.1 836.5L1120.6 832.0ZM1025.9 800.6L1039.5 805.1L1039.7 818.5L1026.2 813.8ZM1053.0 809.6L1066.5 814.1L1066.8 828.1L1053.2 823.3ZM1080.1 818.6L1093.6 823.0L1093.8 837.6L1080.3 832.8ZM1107.1 827.5L1120.6 832.0L1120.8 847.1L1107.3 842.3ZM1039.7 818.5L1053.2 823.3L1053.4 837.0L1039.9 831.9ZM1066.8 828.1L1080.3 832.8L1080.5 847.1L1067.0 842.0ZM1093.8 837.6L1107.3 842.3L1107.5 857.1L1094.0 852.1ZM1120.8 847.1L1134.3 851.8L1134.6 867.2L1121.1 862.2ZM1026.4 826.9L1039.9 831.9L1040.1 845.4L1026.6 840.0ZM1053.4 837.0L1067.0 842.0L1067.2 856.0L1053.7 850.7ZM1080.5 847.1L1094.0 852.1L1094.2 866.6L1080.7 861.3ZM1107.5 857.1L1121.1 862.2L1121.3 877.3L1107.8 872.0ZM1040.1 845.4L1053.7 850.7L1053.9 864.4L1040.4 858.8ZM1067.2 856.0L1080.7 861.3L1080.9 875.6L1067.4 870.0ZM1094.2 866.6L1107.8 872.0L1108.0 886.8L1094.5 881.2ZM1121.3 877.3L1134.8 882.6L1135.0 898.0L1121.5 892.4ZM1026.8 853.2L1040.4 858.8L1040.6 872.2L1027.0 866.3ZM1053.9 864.4L1067.4 870.0L1067.6 884.0L1054.1 878.1ZM1080.9 875.6L1094.5 881.2L1094.7 895.8L1081.2 889.9ZM1108.0 886.8L1121.5 892.4L1121.7 907.5L1108.2 901.6ZM1040.6 872.2L1054.1 878.1L1054.3 891.8L1040.8 885.7ZM1067.6 884.0L1081.2 889.9L1081.4 904.2L1067.8 898.0ZM1094.7 895.8L1108.2 901.6L1108.4 916.5L1094.9 910.3ZM1121.7 907.5L1135.2 913.4L1135.4 928.8L1121.9 922.6ZM1027.3 879.5L1040.8 885.7L1041.0 899.1L1027.5 892.7ZM1054.3 891.8L1067.8 898.0L1068.1 912.0L1054.5 905.6ZM1081.4 904.2L1094.9 910.3L1095.1 924.9L1081.6 918.5ZM1108.4 916.5L1121.9 922.6L1122.1 937.8L1108.6 931.3ZM1041.0 899.1L1054.5 905.6L1054.8 919.3L1041.2 912.6ZM1068.1 912.0L1081.6 918.5L1081.8 932.8L1068.3 926.0ZM1095.1 924.9L1108.6 931.3L1108.8 946.2L1095.3 939.5ZM1122.1 937.8L1135.6 944.2L1135.8 959.7L1122.3 952.9ZM1027.7 905.8L1041.2 912.6L1041.4 926.0L1027.9 919.0ZM1054.8 919.3L1068.3 926.0L1068.5 940.1L1055.0 933.1ZM1081.8 932.8L1095.3 939.5L1095.5 954.1L1082.0 947.1ZM1108.8 946.2L1122.3 952.9L1122.6 968.1L1109.1 961.1ZM1041.4 926.0L1055.0 933.1L1055.2 946.8L1041.7 939.5ZM1068.5 940.1L1082.0 947.1L1082.2 961.4L1068.7 954.1ZM1095.5 954.1L1109.1 961.1L1109.3 976.0L1095.8 968.7ZM1122.6 968.1L1136.1 975.1L1136.3 990.5L1122.8 983.3ZM1028.1 932.2L1041.7 939.5L1041.9 953.0L1028.3 945.4ZM1055.2 946.8L1068.7 954.1L1068.9 968.2L1055.4 960.6ZM1082.2 961.4L1095.8 968.7L1096.0 983.3L1082.5 975.7ZM1109.3 976.0L1122.8 983.3L1123.0 998.4L1109.5 990.9ZM1041.9 953.0L1055.4 960.6L1055.6 974.4L1042.1 966.5ZM1068.9 968.2L1082.5 975.7L1082.7 990.1L1069.2 982.2ZM1096.0 983.3L1109.5 990.9L1109.7 1005.8L1096.2 997.9ZM1123.0 998.4L1136.5 1006.0L1136.7 1021.5L1123.2 1013.6ZM1028.6 958.7L1042.1 966.5L1042.3 980.0L1028.8 971.9ZM1055.6 974.4L1069.2 982.2L1069.4 996.3L1055.9 988.2ZM1082.7 990.1L1096.2 997.9L1096.4 1012.6L1082.9 1004.4ZM1109.7 1005.8L1123.2 1013.6L1123.4 1028.8L1109.9 1020.7ZM1042.3 980.0L1055.9 988.2L1056.1 1002.0L1042.5 993.5ZM1069.4 996.3L1082.9 1004.4L1083.1 1018.8L1069.6 1010.4ZM1096.4 1012.6L1109.9 1020.7L1110.1 1035.6L1096.6 1027.2ZM1123.4 1028.8L1136.9 1036.9L1137.1 1052.4L1123.6 1044.0ZM1029.0 985.1L1042.5 993.5L1042.8 1007.1L1029.2 998.4ZM1056.1 1002.0L1069.6 1010.4L1069.8 1024.5L1056.3 1015.8ZM1083.1 1018.8L1096.6 1027.2L1096.8 1041.9L1083.3 1033.2ZM1110.1 1035.6L1123.6 1044.0L1123.9 1059.2L1110.4 1050.5ZM1042.8 1007.1L1056.3 1015.8L1056.5 1029.6L1043.0 1020.6ZM1069.8 1024.5L1083.3 1033.2L1083.6 1047.5L1070.0 1038.6ZM1096.8 1041.9L1110.4 1050.5L1110.6 1065.5L1097.1 1056.5ZM1123.9 1059.2L1137.4 1067.9L1137.6 1083.4L1124.1 1074.4ZM1029.4 1011.6L1043.0 1020.6L1043.2 1034.1L1029.7 1024.9ZM1056.5 1029.6L1070.0 1038.6L1070.3 1052.7L1056.7 1043.4ZM1083.6 1047.5L1097.1 1056.5L1097.3 1071.2L1083.8 1061.9ZM1110.6 1065.5L1124.1 1074.4L1124.3 1089.7L1110.8 1080.4ZM1043.2 1034.1L1056.7 1043.4L1056.9 1057.2L1043.4 1047.7ZM1070.3 1052.7L1083.8 1061.9L1084.0 1076.3L1070.5 1066.8ZM1097.3 1071.2L1110.8 1080.4L1111.0 1095.4L1097.5 1085.9ZM1124.3 1089.7L1137.8 1098.9L1138.0 1114.4L1124.5 1104.9ZM1029.9 1038.1L1043.4 1047.7L1043.6 1061.3L1030.1 1051.4ZM1056.9 1057.2L1070.5 1066.8L1070.7 1080.9L1057.2 1071.1ZM1084.0 1076.3L1097.5 1085.9L1097.7 1100.6L1084.2 1090.7ZM1111.0 1095.4L1124.5 1104.9L1124.7 1120.2L1111.2 1110.4ZM1043.6 1061.3L1057.2 1071.1L1057.4 1084.9L1043.9 1074.8ZM1070.7 1080.9L1084.2 1090.7L1084.4 1105.2L1070.9 1095.1ZM1097.7 1100.6L1111.2 1110.4L1111.4 1125.3L1097.9 1115.2ZM1124.7 1120.2L1138.2 1130.0L1138.4 1145.5L1124.9 1135.4ZM1030.3 1064.7L1043.9 1074.8L1044.1 1088.4L1030.5 1078.0ZM1057.4 1084.9L1070.9 1095.1L1071.1 1109.2L1057.6 1098.8ZM1084.4 1105.2L1097.9 1115.2L1098.2 1130.0L1084.6 1119.6ZM1111.4 1125.3L1124.9 1135.4L1125.2 1150.7L1111.7 1140.3ZM1044.1 1088.4L1057.6 1098.8L1057.8 1112.7L1044.3 1102.0ZM1071.1 1109.2L1084.6 1119.6L1084.9 1134.0L1071.4 1123.4ZM1098.2 1130.0L1111.7 1140.3L1111.9 1155.3L1098.4 1144.7ZM1125.2 1150.7L1138.6 1161.0L1138.9 1176.6L1125.4 1166.0ZM1030.8 1091.3L1044.3 1102.0L1044.5 1115.6L1031.0 1104.7ZM1057.8 1112.7L1071.4 1123.4L1071.6 1137.5L1058.1 1126.6ZM1084.9 1134.0L1098.4 1144.7L1098.6 1159.4L1085.1 1148.5ZM1111.9 1155.3L1125.4 1166.0L1125.6 1181.3L1112.1 1170.3ZM1044.5 1115.6L1058.1 1126.6L1058.3 1140.5L1044.7 1129.2ZM1071.6 1137.5L1085.1 1148.5L1085.3 1162.9L1071.8 1151.7ZM1098.6 1159.4L1112.1 1170.3L1112.3 1185.3L1098.8 1174.1ZM1125.6 1181.3L1139.1 1192.2L1139.3 1207.7L1125.8 1196.5ZM1031.2 1118.0L1044.7 1129.2L1045.0 1142.8L1031.4 1131.3ZM1058.3 1140.5L1071.8 1151.7L1072.0 1165.9L1058.5 1154.4ZM1085.3 1162.9L1098.8 1174.1L1099.0 1188.9L1085.5 1177.4ZM1112.3 1185.3L1125.8 1196.5L1126.0 1211.8L1112.5 1200.4ZM1045.0 1142.8L1058.5 1154.4L1058.7 1168.3L1045.2 1156.5ZM1072.0 1165.9L1085.5 1177.4L1085.8 1191.8L1072.2 1180.1ZM1099.0 1188.9L1112.5 1200.4L1112.8 1215.4L1099.3 1203.6ZM1126.0 1211.8L1139.5 1223.3L1139.7 1238.9L1126.2 1227.2ZM1031.6 1144.7L1045.2 1156.5L1045.4 1170.1L1031.9 1158.0ZM1058.7 1168.3L1072.2 1180.1L1072.5 1194.3L1058.9 1182.2ZM1085.8 1191.8L1099.3 1203.6L1099.5 1218.4L1086.0 1206.3ZM1112.8 1215.4L1126.2 1227.2L1126.5 1242.5L1113.0 1230.4ZM1045.4 1170.1L1058.9 1182.2L1059.2 1196.1L1045.6 1183.8ZM1072.5 1194.3L1086.0 1206.3L1086.2 1220.8L1072.7 1208.5ZM1099.5 1218.4L1113.0 1230.4L1113.2 1245.5L1099.7 1233.2ZM1126.5 1242.5L1139.9 1254.5L1140.2 1270.1L1126.7 1257.8ZM1032.1 1171.4L1045.6 1183.8L1045.8 1197.4L1032.3 1184.8ZM1059.2 1196.1L1072.7 1208.5L1072.9 1222.7L1059.4 1210.1ZM1086.2 1220.8L1099.7 1233.2L1099.9 1247.9L1086.4 1235.3ZM1113.2 1245.5L1126.7 1257.8L1126.9 1273.2L1113.4 1260.5ZM1045.8 1197.4L1059.4 1210.1L1059.6 1224.0L1046.1 1211.1ZM1072.9 1222.7L1086.4 1235.3L1086.6 1249.8L1073.1 1236.9ZM1099.9 1247.9L1113.4 1260.5L1113.6 1275.6L1100.1 1262.7ZM1126.9 1273.2L1140.4 1285.7L1140.6 1301.4L1127.1 1288.5Z" fill="#00c800" opacity="0.3"/>
<path d="M1024.0 670.0L1127.0 682.7M1024.0 683.0L1127.0 697.8M1024.0 696.0L1127.0 713.0M1024.0 709.0L1127.0 728.1M1024.0 722.0L1127.0 743.3M1024.0 735.0L1127.0 758.4M1024.0 748.0L1127.0 773.5M1024.0 761.0L1127.0 788.7M1024.0 774.0L1127.0 803.8M1024.0 787.0L1127.0 819.0M1024.0 800.0L1127.0 834.1M1024.0 813.0L1127.0 849.3M1024.0 826.0L1127.0 864.4M1024.0 839.0L1127.0 879.5M1024.0 852.0L1127.0 894.7M1024.0 865.0L1127.0 909.8M1024.0 878.0L1127.0 925.0M1024.0 891.0L1127.0 940.1M1024.0 904.0L1127.0 955.3M1024.0 917.0L1127.0 970.4M1024.0 930.0L1127.0 985.5M1024.0 943.0L1127.0 1000.7M1024.0 956.0L1127.0 1015.8M1024.0 969.0L1127.0 1031.0M1024.0 982.0L1127.0 1046.1M1024.0 995.0L1127.0 1061.2M1024.0 1008.0L1127.0 1076.4M1024.0 1021.0L1127.0 1091.5M1024.0 1034.0L1127.0 1106.7M1024.0 1047.0L1127.0 1121.8M1024.0 1060.0L1127.0 1137.0M1024.0 1073.0L1127.0 1152.1M1024.0 1086.0L1127.0 1167.2M1024.0 1099.0L1127.0 1182.4M1024.0 1112.0L1127.0 1197.5M1024.0 1125.0L1127.0 1212.7M1024.0 1138.0L1127.0 1227.8M1024.0 1151.0L1127.0 1243.0M1024.0 1164.0L1127.0 1258.1M1024.0 1177.0L1127.0 1273.2M1024.0 1190.0L1127.0 1288.4M1024.0 683.0L1029.0 985.0M1037.5 683.0L1042.4 985.0M1051.0 683.0L1055.8 985.0M1064.5 683.0L1069.2 985.0M1078.0 683.0L1082.6 985.0M1091.5 683.0L1096.0 985.0M1105.0 683.0L1109.4 985.0M1118.5 683.0L1122.8 985.0M1132.0 683.0L1136.2 985.0" stroke="#00c000" stroke-width="1.2" fill="none" opacity="0.6"/>
</g>
<line x1="1024.0" y1="684.0" x2="1121.0" y2="698.0" stroke="#0030e0" stroke-width="1.3" stroke-dasharray="2 5"/>
<line x1="1025.0" y1="700.0" x2="1026.0" y2="960.0" stroke="#0030e0" stroke-width="1.3" stroke-dasharray="7 50"/>
<ellipse cx="1014" cy="840" rx="13" ry="5" fill="none" stroke="#ff3020" stroke-width="1" stroke-dasharray="3 1.5"/><ellipse cx="1019" cy="854" rx="6.5" ry="7" fill="#98dc00"/>
<polygon points="781.4,782.3 789.0,775.0 816.3,746.0 890.2,748.8 901.4,736.3 915.4,741.9 933.5,760.0 934.9,834.0 923.7,878.6 923.7,901.0 916.8,919.0 905.6,917.7 904.2,903.7 801.0,881.4 799.5,892.6 792.6,891.2 791.2,878.6 781.4,873.0" fill="#66ec00" />
<polygon points="781.4,782.3 789.0,775.0 816.3,746.0 890.2,748.8 901.4,736.3 915.4,741.9 933.5,760.0 934.9,834.0 923.7,878.6 923.7,901.0 916.8,919.0 905.6,917.7 904.2,903.7 801.0,881.4 799.5,892.6 792.6,891.2 791.2,878.6 781.4,873.0" fill="url(#dots)" />
<polyline points="781.4,782.3 900.0,800.0 933.0,762.0" stroke="#68d000" stroke-width="1.5" fill="none" opacity="0.6"/>
<line x1="900.0" y1="800.0" x2="899.0" y2="895.0" stroke="#68d000" stroke-width="1.5" opacity="0.5"/>
<polygon points="1112.0,299.0 1295.0,235.0 1295.0,985.0 1127.0,985.0 1118.0,560.0" fill="#60f200" />
<g clip-path="url(#clw)">
<path d="M1111.6 208.8L1129.0 201.0L1129.3 212.5L1111.8 220.0ZM1146.5 193.2L1164.0 185.5L1164.2 197.5L1146.7 205.0ZM1181.5 177.7L1199.0 169.9L1199.2 182.4L1181.7 190.0ZM1216.6 162.1L1234.1 154.3L1234.3 167.4L1216.8 174.9ZM1251.7 146.5L1269.2 138.7L1269.4 152.3L1251.9 159.8ZM1286.8 130.8L1304.4 123.0L1304.6 137.2L1287.0 144.7ZM1129.3 212.5L1146.7 205.0L1147.0 216.7L1129.5 224.0ZM1164.2 197.5L1181.7 190.0L1181.9 202.2L1164.4 209.5ZM1199.2 182.4L1216.8 174.9L1217.0 187.7L1199.4 195.0ZM1234.3 167.4L1251.9 159.8L1252.0 173.2L1234.5 180.5ZM1269.4 152.3L1287.0 144.7L1287.1 158.7L1269.6 165.9ZM1112.0 231.2L1129.5 224.0L1129.7 235.4L1112.2 242.4ZM1147.0 216.7L1164.4 209.5L1164.7 221.5L1147.2 228.5ZM1181.9 202.2L1199.4 195.0L1199.6 207.5L1182.1 214.5ZM1217.0 187.7L1234.5 180.5L1234.7 193.6L1217.2 200.6ZM1252.0 173.2L1269.6 165.9L1269.8 179.6L1252.2 186.6ZM1287.1 158.7L1304.7 151.4L1304.9 165.6L1287.3 172.6ZM1129.7 235.4L1147.2 228.5L1147.4 240.2L1129.9 246.9ZM1164.7 221.5L1182.1 214.5L1182.3 226.8L1164.9 233.5ZM1199.6 207.5L1217.2 200.6L1217.3 213.4L1199.8 220.1ZM1234.7 193.6L1252.2 186.6L1252.4 200.0L1234.9 206.7ZM1269.8 179.6L1287.3 172.6L1287.5 186.5L1269.9 193.2ZM1112.5 253.6L1129.9 246.9L1130.1 258.4L1112.7 264.8ZM1147.4 240.2L1164.9 233.5L1165.1 245.6L1147.6 252.0ZM1182.3 226.8L1199.8 220.1L1200.0 232.7L1182.6 239.1ZM1217.3 213.4L1234.9 206.7L1235.1 219.8L1217.5 226.3ZM1252.4 200.0L1269.9 193.2L1270.1 206.9L1252.6 213.4ZM1287.5 186.5L1305.0 179.8L1305.2 194.0L1287.6 200.4ZM1130.1 258.4L1147.6 252.0L1147.8 263.8L1130.4 269.9ZM1165.1 245.6L1182.6 239.1L1182.8 251.4L1165.3 257.6ZM1200.0 232.7L1217.5 226.3L1217.7 239.1L1200.2 245.3ZM1235.1 219.8L1252.6 213.4L1252.8 226.8L1235.2 232.9ZM1270.1 206.9L1287.6 200.4L1287.8 214.4L1270.3 220.6ZM1112.9 276.1L1130.4 269.9L1130.6 281.4L1113.1 287.3ZM1147.8 263.8L1165.3 257.6L1165.5 269.7L1148.0 275.5ZM1182.8 251.4L1200.2 245.3L1200.4 257.9L1183.0 263.8ZM1217.7 239.1L1235.2 232.9L1235.4 246.1L1217.9 252.0ZM1252.8 226.8L1270.3 220.6L1270.5 234.2L1252.9 240.2ZM1287.8 214.4L1305.4 208.2L1305.5 222.4L1288.0 228.3ZM1130.6 281.4L1148.0 275.5L1148.2 287.3L1130.8 292.9ZM1165.5 269.7L1183.0 263.8L1183.2 276.1L1165.7 281.7ZM1200.4 257.9L1217.9 252.0L1218.1 264.8L1200.6 270.5ZM1235.4 246.1L1252.9 240.2L1253.1 253.6L1235.6 259.2ZM1270.5 234.2L1288.0 228.3L1288.1 242.3L1270.6 247.9ZM1113.4 298.6L1130.8 292.9L1131.0 304.5L1113.6 309.8ZM1148.2 287.3L1165.7 281.7L1165.9 293.8L1148.5 299.1ZM1183.2 276.1L1200.6 270.5L1200.8 283.1L1183.4 288.4ZM1218.1 264.8L1235.6 259.2L1235.8 272.3L1218.3 277.7ZM1253.1 253.6L1270.6 247.9L1270.8 261.6L1253.3 267.0ZM1288.1 242.3L1305.7 236.6L1305.8 250.9L1288.3 256.2ZM1131.0 304.5L1148.5 299.1L1148.7 310.9L1131.2 316.0ZM1165.9 293.8L1183.4 288.4L1183.6 300.7L1166.1 305.8ZM1200.8 283.1L1218.3 277.7L1218.5 290.6L1201.0 295.7ZM1235.8 272.3L1253.3 267.0L1253.5 280.4L1236.0 285.5ZM1270.8 261.6L1288.3 256.2L1288.5 270.2L1271.0 275.3ZM1113.8 321.1L1131.2 316.0L1131.5 327.5L1114.0 332.3ZM1148.7 310.9L1166.1 305.8L1166.3 317.9L1148.9 322.7ZM1183.6 300.7L1201.0 295.7L1201.2 308.3L1183.8 313.1ZM1218.5 290.6L1236.0 285.5L1236.2 298.6L1218.7 303.5ZM1253.5 280.4L1271.0 275.3L1271.1 289.0L1253.7 293.8ZM1288.5 270.2L1306.0 265.1L1306.1 279.3L1288.6 284.2ZM1131.5 327.5L1148.9 322.7L1149.1 334.5L1131.7 339.1ZM1166.3 317.9L1183.8 313.1L1184.0 325.4L1166.5 330.0ZM1201.2 308.3L1218.7 303.5L1218.9 316.3L1201.4 320.9ZM1236.2 298.6L1253.7 293.8L1253.8 307.2L1236.4 311.8ZM1271.1 289.0L1288.6 284.2L1288.8 298.1L1271.3 302.7ZM1114.3 343.6L1131.7 339.1L1131.9 350.6L1114.5 354.9ZM1149.1 334.5L1166.5 330.0L1166.8 342.1L1149.3 346.3ZM1184.0 325.4L1201.4 320.9L1201.6 333.5L1184.2 337.8ZM1218.9 316.3L1236.4 311.8L1236.6 325.0L1219.1 329.2ZM1253.8 307.2L1271.3 302.7L1271.5 316.4L1254.0 320.7ZM1288.8 298.1L1306.3 293.6L1306.5 307.8L1289.0 312.1ZM1131.9 350.6L1149.3 346.3L1149.5 358.2L1132.1 362.2ZM1166.8 342.1L1184.2 337.8L1184.4 350.2L1167.0 354.2ZM1201.6 333.5L1219.1 329.2L1219.3 342.1L1201.8 346.1ZM1236.6 325.0L1254.0 320.7L1254.2 334.1L1236.7 338.1ZM1271.5 316.4L1289.0 312.1L1289.1 326.1L1271.7 330.1ZM1114.7 366.2L1132.1 362.2L1132.3 373.7L1114.9 377.5ZM1149.5 358.2L1167.0 354.2L1167.2 366.3L1149.8 370.0ZM1184.4 350.2L1201.8 346.1L1202.0 358.8L1184.6 362.5ZM1219.3 342.1L1236.7 338.1L1236.9 351.3L1219.5 355.0ZM1254.2 334.1L1271.7 330.1L1271.8 343.8L1254.4 347.6ZM1289.1 326.1L1306.6 322.1L1306.8 336.3L1289.3 340.1ZM1132.3 373.7L1149.8 370.0L1150.0 381.8L1132.6 385.3ZM1167.2 366.3L1184.6 362.5L1184.8 374.9L1167.4 378.4ZM1202.0 358.8L1219.5 355.0L1219.7 368.0L1202.2 371.4ZM1236.9 351.3L1254.4 347.6L1254.6 361.0L1237.1 364.5ZM1271.8 343.8L1289.3 340.1L1289.5 354.0L1272.0 357.5ZM1115.2 388.8L1132.6 385.3L1132.8 396.9L1115.4 400.1ZM1150.0 381.8L1167.4 378.4L1167.6 390.5L1150.2 393.7ZM1184.8 374.9L1202.2 371.4L1202.4 384.1L1185.0 387.3ZM1219.7 368.0L1237.1 364.5L1237.3 377.7L1219.9 380.9ZM1254.6 361.0L1272.0 357.5L1272.2 371.3L1254.8 374.5ZM1289.5 354.0L1306.9 350.6L1307.1 364.8L1289.6 368.0ZM1132.8 396.9L1150.2 393.7L1150.4 405.5L1133.0 408.5ZM1167.6 390.5L1185.0 387.3L1185.2 399.7L1167.8 402.6ZM1202.4 384.1L1219.9 380.9L1220.1 393.8L1202.6 396.7ZM1237.3 377.7L1254.8 374.5L1254.9 387.9L1237.5 390.9ZM1272.2 371.3L1289.6 368.0L1289.8 382.0L1272.4 385.0ZM1115.6 411.4L1133.0 408.5L1133.2 420.0L1115.8 422.7ZM1150.4 405.5L1167.8 402.6L1168.0 414.7L1150.6 417.4ZM1185.2 399.7L1202.6 396.7L1202.9 409.4L1185.4 412.1ZM1220.1 393.8L1237.5 390.9L1237.7 404.1L1220.3 406.7ZM1254.9 387.9L1272.4 385.0L1272.5 398.7L1255.1 401.4ZM1289.8 382.0L1307.3 379.1L1307.4 393.4L1290.0 396.0ZM1133.2 420.0L1150.6 417.4L1150.8 429.2L1133.4 431.6ZM1168.0 414.7L1185.4 412.1L1185.6 424.5L1168.2 426.9ZM1202.9 409.4L1220.3 406.7L1220.5 419.7L1203.1 422.1ZM1237.7 404.1L1255.1 401.4L1255.3 414.9L1237.9 417.3ZM1272.5 398.7L1290.0 396.0L1290.1 410.1L1272.7 412.5ZM1116.1 434.0L1133.4 431.6L1133.7 443.2L1116.3 445.4ZM1150.8 429.2L1168.2 426.9L1168.5 439.0L1151.1 441.1ZM1185.6 424.5L1203.1 422.1L1203.3 434.7L1185.9 436.9ZM1220.5 419.7L1237.9 417.3L1238.1 430.5L1220.7 432.6ZM1255.3 414.9L1272.7 412.5L1272.9 426.2L1255.5 428.3ZM1290.1 410.1L1307.6 407.7L1307.7 421.9L1290.3 424.1ZM1133.7 443.2L1151.1 441.1L1151.3 453.0L1133.9 454.9ZM1168.5 439.0L1185.9 436.9L1186.1 449.3L1168.7 451.1ZM1203.3 434.7L1220.7 432.6L1220.9 445.5L1203.5 447.4ZM1238.1 430.5L1255.5 428.3L1255.7 441.8L1238.3 443.7ZM1272.9 426.2L1290.3 424.1L1290.5 438.1L1273.1 440.0ZM1116.5 456.7L1133.9 454.9L1134.1 466.5L1116.7 468.1ZM1151.3 453.0L1168.7 451.1L1168.9 463.3L1151.5 464.9ZM1186.1 449.3L1203.5 447.4L1203.7 460.1L1186.3 461.7ZM1220.9 445.5L1238.3 443.7L1238.4 456.9L1221.1 458.5ZM1255.7 441.8L1273.1 440.0L1273.2 453.7L1255.8 455.3ZM1290.5 438.1L1307.9 436.2L1308.1 450.5L1290.6 452.1ZM1134.1 466.5L1151.5 464.9L1151.7 476.8L1134.3 478.1ZM1168.9 463.3L1186.3 461.7L1186.5 474.1L1169.1 475.4ZM1203.7 460.1L1221.1 458.5L1221.2 471.5L1203.9 472.8ZM1238.4 456.9L1255.8 455.3L1256.0 468.8L1238.6 470.1ZM1273.2 453.7L1290.6 452.1L1290.8 466.1L1273.4 467.5ZM1117.0 479.4L1134.3 478.1L1134.6 489.7L1117.2 490.8ZM1151.7 476.8L1169.1 475.4L1169.3 487.6L1151.9 488.7ZM1186.5 474.1L1203.9 472.8L1204.1 485.5L1186.7 486.5ZM1221.2 471.5L1238.6 470.1L1238.8 483.4L1221.4 484.4ZM1256.0 468.8L1273.4 467.5L1273.6 481.2L1256.2 482.3ZM1290.8 466.1L1308.2 464.8L1308.4 479.1L1291.0 480.2ZM1134.6 489.7L1151.9 488.7L1152.1 500.6L1134.8 501.4ZM1169.3 487.6L1186.7 486.5L1186.9 499.0L1169.5 499.8ZM1204.1 485.5L1221.4 484.4L1221.6 497.4L1204.3 498.2ZM1238.8 483.4L1256.2 482.3L1256.4 495.8L1239.0 496.6ZM1273.6 481.2L1291.0 480.2L1291.1 494.2L1273.8 495.0ZM1117.4 502.2L1134.8 501.4L1135.0 513.0L1117.6 513.5ZM1152.1 500.6L1169.5 499.8L1169.7 512.0L1152.4 512.5ZM1186.9 499.0L1204.3 498.2L1204.5 510.9L1187.1 511.4ZM1221.6 497.4L1239.0 496.6L1239.2 509.8L1221.8 510.4ZM1256.4 495.8L1273.8 495.0L1273.9 508.8L1256.6 509.3ZM1291.1 494.2L1308.5 493.4L1308.7 507.7L1291.3 508.3ZM1135.0 513.0L1152.4 512.5L1152.6 524.4L1135.2 524.7ZM1169.7 512.0L1187.1 511.4L1187.3 523.9L1169.9 524.1ZM1204.5 510.9L1221.8 510.4L1222.0 523.4L1204.7 523.6ZM1239.2 509.8L1256.6 509.3L1256.8 522.8L1239.4 523.1ZM1273.9 508.8L1291.3 508.3L1291.5 522.3L1274.1 522.6ZM1117.9 524.9L1135.2 524.7L1135.4 536.3L1118.1 536.3ZM1152.6 524.4L1169.9 524.1L1170.2 536.3L1152.8 536.3ZM1187.3 523.9L1204.7 523.6L1204.9 536.3L1187.5 536.3ZM1222.0 523.4L1239.4 523.1L1239.6 536.4L1222.2 536.3ZM1256.8 522.8L1274.1 522.6L1274.3 536.4L1256.9 536.4ZM1291.5 522.3L1308.8 522.1L1309.0 536.4L1291.7 536.4ZM1135.4 536.3L1152.8 536.3L1153.0 548.2L1135.7 548.0ZM1170.2 536.3L1187.5 536.3L1187.7 548.8L1170.4 548.5ZM1204.9 536.3L1222.2 536.3L1222.4 549.3L1205.1 549.1ZM1239.6 536.4L1256.9 536.4L1257.1 549.9L1239.8 549.6ZM1274.3 536.4L1291.7 536.4L1291.8 550.4L1274.5 550.2ZM1118.3 547.7L1135.7 548.0L1135.9 559.6L1118.5 559.1ZM1153.0 548.2L1170.4 548.5L1170.6 560.7L1153.2 560.2ZM1187.7 548.8L1205.1 549.1L1205.3 561.8L1187.9 561.3ZM1222.4 549.3L1239.8 549.6L1240.0 562.9L1222.6 562.3ZM1257.1 549.9L1274.5 550.2L1274.6 564.0L1257.3 563.4ZM1291.8 550.4L1309.2 550.7L1309.3 565.0L1292.0 564.5ZM1135.9 559.6L1153.2 560.2L1153.5 572.1L1136.1 571.3ZM1170.6 560.7L1187.9 561.3L1188.1 573.7L1170.8 572.9ZM1205.3 561.8L1222.6 562.3L1222.8 575.3L1205.5 574.5ZM1240.0 562.9L1257.3 563.4L1257.5 577.0L1240.2 576.2ZM1274.6 564.0L1292.0 564.5L1292.2 578.6L1274.8 577.8ZM1118.8 570.5L1136.1 571.3L1136.3 583.0L1119.0 581.9ZM1153.5 572.1L1170.8 572.9L1171.0 585.1L1153.7 584.1ZM1188.1 573.7L1205.5 574.5L1205.7 587.3L1188.3 586.2ZM1222.8 575.3L1240.2 576.2L1240.3 589.4L1223.0 588.4ZM1257.5 577.0L1274.8 577.8L1275.0 591.6L1257.7 590.5ZM1292.2 578.6L1309.5 579.4L1309.6 593.7L1292.3 592.6ZM1136.3 583.0L1153.7 584.1L1153.9 596.0L1136.6 594.7ZM1171.0 585.1L1188.3 586.2L1188.6 598.7L1171.2 597.4ZM1205.7 587.3L1223.0 588.4L1223.2 601.4L1205.9 600.0ZM1240.3 589.4L1257.7 590.5L1257.9 604.1L1240.5 602.7ZM1275.0 591.6L1292.3 592.6L1292.5 606.7L1275.2 605.4ZM1119.2 593.4L1136.6 594.7L1136.8 606.4L1119.4 604.8ZM1153.9 596.0L1171.2 597.4L1171.4 609.6L1154.1 608.0ZM1188.6 598.7L1205.9 600.0L1206.1 612.8L1188.8 611.2ZM1223.2 601.4L1240.5 602.7L1240.7 616.0L1223.4 614.4ZM1257.9 604.1L1275.2 605.4L1275.3 619.2L1258.0 617.6ZM1292.5 606.7L1309.8 608.1L1310.0 622.4L1292.7 620.8ZM1136.8 606.4L1154.1 608.0L1154.3 620.0L1137.0 618.1ZM1171.4 609.6L1188.8 611.2L1189.0 623.7L1171.7 621.8ZM1206.1 612.8L1223.4 614.4L1223.6 627.4L1206.3 625.6ZM1240.7 616.0L1258.0 617.6L1258.2 631.2L1240.9 629.3ZM1275.3 619.2L1292.7 620.8L1292.8 634.9L1275.5 633.0ZM1119.7 616.2L1137.0 618.1L1137.2 629.8L1119.9 627.7ZM1154.3 620.0L1171.7 621.8L1171.9 634.1L1154.5 631.9ZM1189.0 623.7L1206.3 625.6L1206.5 638.3L1189.2 636.2ZM1223.6 627.4L1240.9 629.3L1241.1 642.6L1223.8 640.5ZM1258.2 631.2L1275.5 633.0L1275.7 646.9L1258.4 644.7ZM1292.8 634.9L1310.1 636.8L1310.3 651.1L1293.0 649.0ZM1137.2 629.8L1154.5 631.9L1154.8 643.9L1137.4 641.5ZM1171.9 634.1L1189.2 636.2L1189.4 648.7L1172.1 646.3ZM1206.5 638.3L1223.8 640.5L1224.0 653.5L1206.7 651.1ZM1241.1 642.6L1258.4 644.7L1258.6 658.3L1241.3 655.9ZM1275.7 646.9L1293.0 649.0L1293.2 663.1L1275.9 660.7ZM1120.1 639.1L1137.4 641.5L1137.7 653.3L1120.4 650.6ZM1154.8 643.9L1172.1 646.3L1172.3 658.6L1155.0 655.9ZM1189.4 648.7L1206.7 651.1L1206.9 663.9L1189.6 661.2ZM1224.0 653.5L1241.3 655.9L1241.5 669.2L1224.2 666.6ZM1258.6 658.3L1275.9 660.7L1276.1 674.6L1258.8 671.9ZM1293.2 663.1L1310.4 665.5L1310.6 679.9L1293.3 677.2ZM1137.7 653.3L1155.0 655.9L1155.2 667.9L1137.9 665.0ZM1172.3 658.6L1189.6 661.2L1189.8 673.8L1172.5 670.8ZM1206.9 663.9L1224.2 666.6L1224.4 679.6L1207.1 676.7ZM1241.5 669.2L1258.8 671.9L1259.0 685.5L1241.7 682.6ZM1276.1 674.6L1293.3 677.2L1293.5 691.3L1276.2 688.4ZM1120.6 662.1L1137.9 665.0L1138.1 676.7L1120.8 673.5ZM1155.2 667.9L1172.5 670.8L1172.7 683.1L1155.4 679.9ZM1189.8 673.8L1207.1 676.7L1207.3 689.5L1190.0 686.3ZM1224.4 679.6L1241.7 682.6L1241.9 695.9L1224.6 692.7ZM1259.0 685.5L1276.2 688.4L1276.4 702.3L1259.1 699.1ZM1293.5 691.3L1310.8 694.2L1310.9 708.6L1293.7 705.4ZM1138.1 676.7L1155.4 679.9L1155.6 691.9L1138.3 688.5ZM1172.7 683.1L1190.0 686.3L1190.2 698.8L1172.9 695.4ZM1207.3 689.5L1224.6 692.7L1224.8 705.8L1207.5 702.3ZM1241.9 695.9L1259.1 699.1L1259.3 712.7L1242.1 709.2ZM1276.4 702.3L1293.7 705.4L1293.8 719.6L1276.6 716.1ZM1121.0 685.0L1138.3 688.5L1138.6 700.2L1121.3 696.5ZM1155.6 691.9L1172.9 695.4L1173.2 707.7L1155.9 703.9ZM1190.2 698.8L1207.5 702.3L1207.7 715.1L1190.4 711.4ZM1224.8 705.8L1242.1 709.2L1242.2 722.5L1225.0 718.8ZM1259.3 712.7L1276.6 716.1L1276.8 730.0L1259.5 726.3ZM1293.8 719.6L1311.1 723.0L1311.2 737.4L1294.0 733.7ZM1138.6 700.2L1155.9 703.9L1156.1 716.0L1138.8 712.0ZM1173.2 707.7L1190.4 711.4L1190.6 723.9L1173.4 720.0ZM1207.7 715.1L1225.0 718.8L1225.2 731.9L1207.9 727.9ZM1242.2 722.5L1259.5 726.3L1259.7 739.9L1242.4 735.9ZM1276.8 730.0L1294.0 733.7L1294.2 747.8L1276.9 743.9ZM1121.5 708.0L1138.8 712.0L1139.0 723.7L1121.7 719.5ZM1156.1 716.0L1173.4 720.0L1173.6 732.3L1156.3 728.0ZM1190.6 723.9L1207.9 727.9L1208.1 740.8L1190.9 736.5ZM1225.2 731.9L1242.4 735.9L1242.6 749.2L1225.4 745.0ZM1259.7 739.9L1276.9 743.9L1277.1 757.7L1259.9 753.5ZM1294.2 747.8L1311.4 751.8L1311.6 766.2L1294.3 762.0ZM1139.0 723.7L1156.3 728.0L1156.5 740.0L1139.2 735.5ZM1173.6 732.3L1190.9 736.5L1191.1 749.1L1173.8 744.6ZM1208.1 740.8L1225.4 745.0L1225.6 758.1L1208.3 753.6ZM1242.6 749.2L1259.9 753.5L1260.1 767.1L1242.8 762.6ZM1277.1 757.7L1294.3 762.0L1294.5 776.1L1277.3 771.6ZM1122.0 731.0L1139.2 735.5L1139.5 747.3L1122.2 742.5ZM1156.5 740.0L1173.8 744.6L1174.0 756.9L1156.7 752.1ZM1191.1 749.1L1208.3 753.6L1208.5 766.4L1191.3 761.6ZM1225.6 758.1L1242.8 762.6L1243.0 776.0L1225.8 771.2ZM1260.1 767.1L1277.3 771.6L1277.5 785.5L1260.2 780.7ZM1294.5 776.1L1311.7 780.6L1311.9 795.0L1294.7 790.3ZM1139.5 747.3L1156.7 752.1L1157.0 764.1L1139.7 759.1ZM1174.0 756.9L1191.3 761.6L1191.5 774.2L1174.2 769.2ZM1208.5 766.4L1225.8 771.2L1226.0 784.3L1208.7 779.3ZM1243.0 776.0L1260.2 780.7L1260.4 794.4L1243.2 789.3ZM1277.5 785.5L1294.7 790.3L1294.8 804.4L1277.6 799.4ZM1122.4 754.0L1139.7 759.1L1139.9 770.9L1122.6 765.6ZM1157.0 764.1L1174.2 769.2L1174.4 781.5L1157.2 776.2ZM1191.5 774.2L1208.7 779.3L1208.9 792.1L1191.7 786.8ZM1226.0 784.3L1243.2 789.3L1243.4 802.7L1226.2 797.4ZM1260.4 794.4L1277.6 799.4L1277.8 813.3L1260.6 808.0ZM1294.8 804.4L1312.0 809.4L1312.2 823.9L1295.0 818.6ZM1139.9 770.9L1157.2 776.2L1157.4 788.3L1140.1 782.7ZM1174.4 781.5L1191.7 786.8L1191.9 799.4L1174.7 793.8ZM1208.9 792.1L1226.2 797.4L1226.4 810.5L1209.1 805.0ZM1243.4 802.7L1260.6 808.0L1260.8 821.6L1243.6 816.1ZM1277.8 813.3L1295.0 818.6L1295.2 832.7L1278.0 827.2ZM1122.9 777.1L1140.1 782.7L1140.4 794.5L1123.1 788.7ZM1157.4 788.3L1174.7 793.8L1174.9 806.2L1157.6 800.3ZM1191.9 799.4L1209.1 805.0L1209.3 817.8L1192.1 812.0ZM1226.4 810.5L1243.6 816.1L1243.8 829.5L1226.6 823.6ZM1260.8 821.6L1278.0 827.2L1278.2 841.1L1261.0 835.3ZM1295.2 832.7L1312.4 838.3L1312.5 852.7L1295.4 846.9ZM1140.4 794.5L1157.6 800.3L1157.8 812.4L1140.6 806.3ZM1174.9 806.2L1192.1 812.0L1192.3 824.6L1175.1 818.5ZM1209.3 817.8L1226.6 823.6L1226.8 836.8L1209.5 830.7ZM1243.8 829.5L1261.0 835.3L1261.2 848.9L1244.0 842.9ZM1278.2 841.1L1295.4 846.9L1295.5 861.1L1278.3 855.0ZM1123.3 800.2L1140.6 806.3L1140.8 818.1L1123.6 811.8ZM1157.8 812.4L1175.1 818.5L1175.3 830.9L1158.1 824.5ZM1192.3 824.6L1209.5 830.7L1209.8 843.6L1192.5 837.2ZM1226.8 836.8L1244.0 842.9L1244.2 856.3L1227.0 849.9ZM1261.2 848.9L1278.3 855.0L1278.5 868.9L1261.3 862.6ZM1295.5 861.1L1312.7 867.2L1312.8 881.6L1295.7 875.3ZM1140.8 818.1L1158.1 824.5L1158.3 836.6L1141.0 830.0ZM1175.3 830.9L1192.5 837.2L1192.7 849.8L1175.5 843.2ZM1209.8 843.6L1227.0 849.9L1227.2 863.0L1210.0 856.4ZM1244.2 856.3L1261.3 862.6L1261.5 876.3L1244.4 869.7ZM1278.5 868.9L1295.7 875.3L1295.9 889.4L1278.7 882.9ZM1123.8 823.3L1141.0 830.0L1141.3 841.8L1124.0 834.9ZM1158.3 836.6L1175.5 843.2L1175.7 855.6L1158.5 848.7ZM1192.7 849.8L1210.0 856.4L1210.2 869.3L1193.0 862.4ZM1227.2 863.0L1244.4 869.7L1244.5 883.1L1227.4 876.2ZM1261.5 876.3L1278.7 882.9L1278.9 896.8L1261.7 889.9ZM1295.9 889.4L1313.0 896.0L1313.2 910.5L1296.0 903.6ZM1141.3 841.8L1158.5 848.7L1158.7 860.8L1141.5 853.6ZM1175.7 855.6L1193.0 862.4L1193.2 875.1L1176.0 867.9ZM1210.2 869.3L1227.4 876.2L1227.6 889.3L1210.4 882.2ZM1244.5 883.1L1261.7 889.9L1261.9 903.6L1244.7 896.5ZM1278.9 896.8L1296.0 903.6L1296.2 917.8L1279.1 910.7ZM1124.2 846.5L1141.5 853.6L1141.7 865.5L1124.5 858.1ZM1158.7 860.8L1176.0 867.9L1176.2 880.3L1159.0 872.9ZM1193.2 875.1L1210.4 882.2L1210.6 895.1L1193.4 887.7ZM1227.6 889.3L1244.7 896.5L1244.9 909.9L1227.8 902.5ZM1261.9 903.6L1279.1 910.7L1279.2 924.7L1262.1 917.3ZM1296.2 917.8L1313.3 924.9L1313.5 939.4L1296.4 932.0ZM1141.7 865.5L1159.0 872.9L1159.2 885.0L1141.9 877.3ZM1176.2 880.3L1193.4 887.7L1193.6 900.4L1176.4 892.7ZM1210.6 895.1L1227.8 902.5L1228.0 915.7L1210.8 908.0ZM1244.9 909.9L1262.1 917.3L1262.3 931.0L1245.1 923.3ZM1279.2 924.7L1296.4 932.0L1296.5 946.2L1279.4 938.6ZM1124.7 869.7L1141.9 877.3L1142.2 889.2L1124.9 881.3ZM1159.2 885.0L1176.4 892.7L1176.6 905.1L1159.4 897.1ZM1193.6 900.4L1210.8 908.0L1211.0 920.9L1193.8 913.0ZM1228.0 915.7L1245.1 923.3L1245.3 936.8L1228.2 928.8ZM1262.3 931.0L1279.4 938.6L1279.6 952.6L1262.5 944.7ZM1296.5 946.2L1313.7 953.9L1313.8 968.3L1296.7 960.5ZM1142.2 889.2L1159.4 897.1L1159.6 909.3L1142.4 901.1ZM1176.6 905.1L1193.8 913.0L1194.0 925.7L1176.8 917.5ZM1211.0 920.9L1228.2 928.8L1228.4 942.0L1211.2 933.8ZM1245.3 936.8L1262.5 944.7L1262.6 958.4L1245.5 950.2ZM1279.6 952.6L1296.7 960.5L1296.9 974.7L1279.8 966.5ZM1125.2 892.9L1142.4 901.1L1142.6 913.0L1125.4 904.5ZM1159.6 909.3L1176.8 917.5L1177.0 929.9L1159.8 921.4ZM1194.0 925.7L1211.2 933.8L1211.4 946.8L1194.2 938.3ZM1228.4 942.0L1245.5 950.2L1245.7 963.6L1228.6 955.2ZM1262.6 958.4L1279.8 966.5L1279.9 980.5L1262.8 972.1ZM1296.9 974.7L1314.0 982.8L1314.1 997.3L1297.0 988.9ZM1142.6 913.0L1159.8 921.4L1160.1 933.6L1142.9 924.8ZM1177.0 929.9L1194.2 938.3L1194.4 951.0L1177.3 942.3ZM1211.4 946.8L1228.6 955.2L1228.7 968.4L1211.6 959.7ZM1245.7 963.6L1262.8 972.1L1263.0 985.8L1245.9 977.1ZM1279.9 980.5L1297.0 988.9L1297.2 1003.1L1280.1 994.4ZM1125.6 916.1L1142.9 924.8L1143.1 936.7L1125.9 927.7ZM1160.1 933.6L1177.3 942.3L1177.5 954.7L1160.3 945.7ZM1194.4 951.0L1211.6 959.7L1211.8 972.6L1194.6 963.7ZM1228.7 968.4L1245.9 977.1L1246.1 990.5L1228.9 981.6ZM1263.0 985.8L1280.1 994.4L1280.3 1008.4L1263.2 999.5ZM1297.2 1003.1L1314.3 1011.8L1314.5 1026.3L1297.4 1017.3ZM1143.1 936.7L1160.3 945.7L1160.5 957.9L1143.3 948.6ZM1177.5 954.7L1194.6 963.7L1194.9 976.4L1177.7 967.1ZM1211.8 972.6L1228.9 981.6L1229.1 994.8L1212.0 985.6ZM1246.1 990.5L1263.2 999.5L1263.4 1013.2L1246.3 1004.0ZM1280.3 1008.4L1297.4 1017.3L1297.6 1031.6L1280.5 1022.4ZM1126.1 939.4L1143.3 948.6L1143.5 960.5L1126.3 951.0ZM1160.5 957.9L1177.7 967.1L1177.9 979.6L1160.7 970.1ZM1194.9 976.4L1212.0 985.6L1212.2 998.5L1195.1 989.0ZM1229.1 994.8L1246.3 1004.0L1246.5 1017.5L1229.3 1008.0ZM1263.4 1013.2L1280.5 1022.4L1280.7 1036.4L1263.6 1026.9ZM1297.6 1031.6L1314.6 1040.8L1314.8 1055.3L1297.7 1045.8ZM1143.5 960.5L1160.7 970.1L1160.9 982.2L1143.8 972.5ZM1177.9 979.6L1195.1 989.0L1195.3 1001.7L1178.1 992.0ZM1212.2 998.5L1229.3 1008.0L1229.5 1021.2L1212.4 1011.5ZM1246.5 1017.5L1263.6 1026.9L1263.8 1040.7L1246.7 1030.9ZM1280.7 1036.4L1297.7 1045.8L1297.9 1060.1L1280.8 1050.4ZM1126.6 962.7L1143.8 972.5L1144.0 984.4L1126.8 974.3ZM1160.9 982.2L1178.1 992.0L1178.3 1004.4L1161.2 994.4ZM1195.3 1001.7L1212.4 1011.5L1212.6 1024.4L1195.5 1014.4ZM1229.5 1021.2L1246.7 1030.9L1246.9 1044.4L1229.7 1034.4ZM1263.8 1040.7L1280.8 1050.4L1281.0 1064.4L1263.9 1054.4ZM1297.9 1060.1L1314.9 1069.8L1315.1 1084.3L1298.1 1074.3ZM1144.0 984.4L1161.2 994.4L1161.4 1006.6L1144.2 996.3ZM1178.3 1004.4L1195.5 1014.4L1195.7 1027.2L1178.6 1016.9ZM1212.6 1024.4L1229.7 1034.4L1229.9 1047.7L1212.8 1037.4ZM1246.9 1044.4L1263.9 1054.4L1264.1 1068.1L1247.0 1057.9ZM1281.0 1064.4L1298.1 1074.3L1298.2 1088.6L1281.2 1078.4ZM1127.0 986.0L1144.2 996.3L1144.4 1008.2L1127.3 997.7ZM1161.4 1006.6L1178.6 1016.9L1178.8 1029.3L1161.6 1018.8ZM1195.7 1027.2L1212.8 1037.4L1213.0 1050.4L1195.9 1039.9ZM1229.9 1047.7L1247.0 1057.9L1247.2 1071.4L1230.1 1060.9ZM1264.1 1068.1L1281.2 1078.4L1281.4 1092.4L1264.3 1081.9ZM1298.2 1088.6L1315.3 1098.8L1315.4 1113.3L1298.4 1102.9ZM1144.4 1008.2L1161.6 1018.8L1161.8 1031.0L1144.7 1020.2ZM1178.8 1029.3L1195.9 1039.9L1196.1 1052.6L1179.0 1041.8ZM1213.0 1050.4L1230.1 1060.9L1230.3 1074.1L1213.2 1063.4ZM1247.2 1071.4L1264.3 1081.9L1264.5 1095.7L1247.4 1084.9ZM1281.4 1092.4L1298.4 1102.9L1298.6 1117.1L1281.5 1106.4ZM1127.5 1009.4L1144.7 1020.2L1144.9 1032.1L1127.7 1021.0ZM1161.8 1031.0L1179.0 1041.8L1179.2 1054.3L1162.1 1043.2ZM1196.1 1052.6L1213.2 1063.4L1213.5 1076.4L1196.3 1065.3ZM1230.3 1074.1L1247.4 1084.9L1247.6 1098.4L1230.5 1087.4ZM1264.5 1095.7L1281.5 1106.4L1281.7 1120.4L1264.7 1109.4ZM1298.6 1117.1L1315.6 1127.8L1315.8 1142.4L1298.7 1131.4ZM1144.9 1032.1L1162.1 1043.2L1162.3 1055.4L1145.1 1044.1ZM1179.2 1054.3L1196.3 1065.3L1196.6 1078.1L1179.4 1066.7ZM1213.5 1076.4L1230.5 1087.4L1230.7 1100.6L1213.7 1089.4ZM1247.6 1098.4L1264.7 1109.4L1264.9 1123.2L1247.8 1111.9ZM1281.7 1120.4L1298.7 1131.4L1298.9 1145.7L1281.9 1134.4ZM1127.9 1032.7L1145.1 1044.1L1145.4 1056.0L1128.2 1044.4ZM1162.3 1055.4L1179.4 1066.7L1179.6 1079.2L1162.5 1067.6ZM1196.6 1078.1L1213.7 1089.4L1213.9 1102.4L1196.8 1090.8ZM1230.7 1100.6L1247.8 1111.9L1248.0 1125.4L1230.9 1113.9ZM1264.9 1123.2L1281.9 1134.4L1282.1 1148.5L1265.1 1137.0ZM1298.9 1145.7L1315.9 1156.9L1316.1 1171.4L1299.1 1160.0ZM1145.4 1056.0L1162.5 1067.6L1162.7 1079.9L1145.6 1068.0ZM1179.6 1079.2L1196.8 1090.8L1197.0 1103.5L1179.9 1091.7ZM1213.9 1102.4L1230.9 1113.9L1231.1 1127.2L1214.1 1115.4ZM1248.0 1125.4L1265.1 1137.0L1265.2 1150.7L1248.2 1139.0ZM1282.1 1148.5L1299.1 1160.0L1299.3 1174.3L1282.3 1162.5ZM1128.4 1056.1L1145.6 1068.0L1145.8 1080.0L1128.6 1067.9ZM1162.7 1079.9L1179.9 1091.7L1180.1 1104.2L1163.0 1092.1ZM1197.0 1103.5L1214.1 1115.4L1214.3 1128.4L1197.2 1116.3ZM1231.1 1127.2L1248.2 1139.0L1248.4 1152.5L1231.3 1140.4ZM1265.2 1150.7L1282.3 1162.5L1282.4 1176.5L1265.4 1164.5ZM1299.3 1174.3L1316.2 1186.0L1316.4 1200.5L1299.4 1188.5ZM1145.8 1080.0L1163.0 1092.1L1163.2 1104.4L1146.0 1092.0ZM1180.1 1104.2L1197.2 1116.3L1197.4 1129.1L1180.3 1116.7ZM1214.3 1128.4L1231.3 1140.4L1231.5 1153.7L1214.5 1141.4ZM1248.4 1152.5L1265.4 1164.5L1265.6 1178.3L1248.6 1166.0ZM1282.4 1176.5L1299.4 1188.5L1299.6 1202.8L1282.6 1190.6ZM1128.9 1079.6L1146.0 1092.0L1146.3 1104.0L1129.1 1091.3ZM1163.2 1104.4L1180.3 1116.7L1180.5 1129.2L1163.4 1116.6ZM1197.4 1129.1L1214.5 1141.4L1214.7 1154.4L1197.6 1141.8ZM1231.5 1153.7L1248.6 1166.0L1248.8 1179.6L1231.7 1167.0ZM1265.6 1178.3L1282.6 1190.6L1282.8 1204.6L1265.8 1192.1ZM1299.6 1202.8L1316.6 1215.1L1316.7 1229.7L1299.8 1217.2Z" fill="#3cb400" opacity="0.28"/>
<path d="M1112.0 208.6L1295.0 127.2M1112.0 219.9L1295.0 141.3M1112.0 231.2L1295.0 155.4M1112.0 242.5L1295.0 169.5M1112.0 253.8L1295.0 183.6M1112.0 265.1L1295.0 197.7M1112.0 276.4L1295.0 211.9M1112.0 287.7L1295.0 226.0M1112.0 299.0L1295.0 240.1M1112.0 310.3L1295.0 254.2M1112.0 321.6L1295.0 268.3M1112.0 332.9L1295.0 282.4M1112.0 344.2L1295.0 296.5M1112.0 355.5L1295.0 310.6M1112.0 366.8L1295.0 324.7M1112.0 378.1L1295.0 338.8M1112.0 389.4L1295.0 352.9M1112.0 400.7L1295.0 367.1M1112.0 412.0L1295.0 381.2M1112.0 423.3L1295.0 395.3M1112.0 434.6L1295.0 409.4M1112.0 445.9L1295.0 423.5M1112.0 457.2L1295.0 437.6M1112.0 468.5L1295.0 451.7M1112.0 479.8L1295.0 465.8M1112.0 491.1L1295.0 479.9M1112.0 502.4L1295.0 494.0M1112.0 513.7L1295.0 508.2M1112.0 525.0L1295.0 522.3M1112.0 536.3L1295.0 536.4M1112.0 547.6L1295.0 550.5M1112.0 558.9L1295.0 564.6M1112.0 570.2L1295.0 578.7M1112.0 581.5L1295.0 592.8M1112.0 592.8L1295.0 606.9M1112.0 604.1L1295.0 621.0M1112.0 615.4L1295.0 635.1M1112.0 626.7L1295.0 649.3M1112.0 638.0L1295.0 663.4M1112.0 649.3L1295.0 677.5M1112.0 660.6L1295.0 691.6M1112.0 671.9L1295.0 705.7M1112.0 683.2L1295.0 719.8M1112.0 694.5L1295.0 733.9M1112.0 705.8L1295.0 748.0M1112.0 717.1L1295.0 762.1M1112.0 728.4L1295.0 776.2M1112.0 739.7L1295.0 790.3M1112.0 751.0L1295.0 804.5M1112.0 762.3L1295.0 818.6M1112.0 773.6L1295.0 832.7M1112.0 784.9L1295.0 846.8M1112.0 796.2L1295.0 860.9M1112.0 807.5L1295.0 875.0M1112.0 818.8L1295.0 889.1M1112.0 830.1L1295.0 903.2M1112.0 841.4L1295.0 917.3M1112.0 852.7L1295.0 931.4M1112.0 864.0L1295.0 945.6M1112.0 875.3L1295.0 959.7M1112.0 886.6L1295.0 973.8M1112.0 897.9L1295.0 987.9M1112.0 909.2L1295.0 1002.0M1112.0 920.5L1295.0 1016.1M1112.0 931.8L1295.0 1030.2M1112.0 943.1L1295.0 1044.3M1112.0 954.4L1295.0 1058.4M1112.0 965.7L1295.0 1072.5M1112.0 977.0L1295.0 1086.7M1112.0 988.3L1295.0 1100.8M1112.0 999.6L1295.0 1114.9M1112.0 1010.9L1295.0 1129.0M1112.0 1022.2L1295.0 1143.1M1112.0 1033.5L1295.0 1157.2M1112.0 1044.8L1295.0 1171.3M1112.0 1056.1L1295.0 1185.4M1112.0 1067.4L1295.0 1199.5M1112.0 1078.7L1295.0 1213.6M1112.0 230.0L1127.0 985.0M1129.6 230.0L1144.0 985.0M1147.2 230.0L1161.0 985.0M1164.8 230.0L1178.0 985.0M1182.4 230.0L1195.0 985.0M1200.0 230.0L1212.0 985.0M1217.6 230.0L1229.0 985.0M1235.2 230.0L1246.0 985.0M1252.8 230.0L1263.0 985.0M1270.4 230.0L1280.0 985.0M1288.0 230.0L1297.0 985.0M1305.6 230.0L1314.0 985.0" stroke="#44c400" stroke-width="1.2" fill="none" opacity="0.55"/>
<polygon points="1159.5,782.0 1295.0,811.0 1295.0,883.0 1162.0,841.0" fill="#b8c400" opacity="0.72"/>
<path d="M1187 800 q6 -2 7 8 q1 10 4 14 q5 10 -3 22 q-8 -2 -9 -14 q1 -8 3 -14 q-3 -8 -2 -16z" fill="#ff0808"/>
<path d="M1273 821 q7 -2 8 8 q1 10 5 16 q5 12 -4 28 q-8 -2 -9 -18 q1 -8 3 -14 q-4 -8 -3 -20z" fill="#ff0808"/>
</g>
<polyline points="1117.0,463.0 1258.0,443.0 1273.0,926.0 665.0,700.0" stroke="#bcb4ac" stroke-width="1.4" fill="none" stroke-dasharray="2 2"/>
<line x1="1088.5" y1="298.0" x2="1102.0" y2="985.0" stroke="#808088" stroke-width="1.6" />
<polygon points="377.0,776.0 421.8,776.0 442.2,819.5 442.2,829.0 377.0,846.0" fill="#1cf018" />
<polygon points="378.0,846.0 443.0,828.0 443.0,892.0 378.0,913.0" fill="#30f000" />
<polygon points="378.0,846.0 443.0,828.0 443.0,892.0 378.0,913.0" fill="url(#dots)" />
<line x1="378.0" y1="846.0" x2="443.0" y2="828.0" stroke="#0030e0" stroke-width="1.3" stroke-dasharray="1.5 5"/>
<ellipse cx="400" cy="788" rx="22" ry="8" fill="#ff0808" transform="rotate(-8 400 788)"/>
<ellipse cx="391" cy="822" rx="9" ry="14" fill="#ff0808" transform="rotate(20 391 822)"/>
<polygon points="382.0,810.0 430.0,797.0 432.0,808.0 420.0,815.0 384.0,822.0" fill="#f06000" />
<polygon points="378.0,760.0 392.0,760.0 392.0,780.0 378.0,780.0" fill="#ff0808" />
<polygon points="392.0,775.0 397.0,775.0 393.0,985.0 388.0,985.0" fill="#e08000" />
<ellipse cx="405" cy="986" rx="22" ry="6" fill="#90d800"/>
<path d="M374 968 q8 -4 14 0" stroke="#ff2020" stroke-width="1" fill="none"/>
<g>
<line x1="623.0" y1="793.0" x2="623.0" y2="760.0" stroke="#0030c0" stroke-width="3.5" />
<line x1="624.0" y1="793.0" x2="686.0" y2="775.0" stroke="#30100a" stroke-width="4" />
<polygon points="680.0,765.0 704.0,770.0 685.0,786.0" fill="#38120a" />
<line x1="624.0" y1="793.0" x2="655.0" y2="816.0" stroke="#283800" stroke-width="4" />
<polygon points="662.0,806.0 670.0,827.0 647.0,819.0" fill="#4a6a08" />
<path d="M636 789 l24 2 l-10 9 l-14 -2" stroke="#201000" stroke-width="2.5" fill="none"/>
<circle cx="623.5" cy="793" r="7.5" fill="#a8a8b0" stroke="#444" stroke-width="1.2"/>
</g>
<line x1="292.5" y1="917.0" x2="292.5" y2="947.0" stroke="#0020d0" stroke-width="1.2" />
<line x1="292.0" y1="947.0" x2="313.0" y2="947.0" stroke="#00e020" stroke-width="1.2" />
<line x1="313.0" y1="947.0" x2="318.0" y2="947.0" stroke="#ff2020" stroke-width="1.5" />
<text x="294.5" y="925" font-family="Liberation Sans, sans-serif" font-size="15" fill="#0020d0">Z</text>
<text x="318.5" y="954" font-family="Liberation Sans, sans-serif" font-size="15" fill="#ff2020">X</text>
<rect x="255" y="127" width="1040" height="1.6" fill="#0a6ad8"/>
</g></svg>
<style>
.vb{top:133px;height:29px;border-radius:14.5px;background:rgba(46,56,60,0.88);border:1px solid rgba(20,30,30,0.75);overflow:hidden}
.vt{position:absolute;white-space:nowrap;line-height:1;top:139px;font-size:17px;color:#d4d4d4;letter-spacing:0.3px}
.mi{position:absolute;white-space:nowrap;line-height:1;left:475px;font-size:16.5px;color:#e6e6e6;letter-spacing:0.6px}
.sc{position:absolute;white-space:nowrap;line-height:1;right:1292px;font-size:13px;color:#9a9a9a;letter-spacing:0.1px}
.bu{position:absolute;left:407px;width:10.5px;height:10.5px;border-radius:6px;background:#0c0c0c}
.hd{position:absolute;white-space:nowrap;line-height:1;left:404px;font-size:11px;color:#6e6e6e;letter-spacing:2.6px}
</style>
<div class="a vb" style="left:263px;width:29px;"></div>
<svg style="left:270px;top:140px" width="16" height="14" viewBox="0 0 16 14"><path d="M1 2 H15 M1 7 H15 M1 12 H15" stroke="#d8d8d8" stroke-width="1.5"/></svg>
<div class="a vb" style="left:303px;width:77px;"></div>
<svg style="left:310px;top:136px" width="22" height="23" viewBox="0 0 22 23"><path d="M11 1.5 L20.5 6 L11 10.5 L1.5 6 Z" fill="#e8e8e8"/><path d="M1.5 7.5 L10.2 11.8 V21.5 L1.5 17 Z" fill="#b0b0b0"/><path d="M20.5 7.5 L11.8 11.8 V21.5 L20.5 17 Z" fill="#8a8a8a"/></svg>
<div class="vt" style="left:337px;color:#c4c4c4">透视</div>
<div class="a vb" style="left:390px;width:145px;background:rgba(28,40,44,0.92)"></div>
<svg style="left:397px;top:137px" width="22" height="21" viewBox="0 0 22 21"><path d="M11 8 L21 13 L11 18.5 L1 13 Z" fill="#4a8af0"/><path d="M11 2 L21 7.5 L11 13 L1 7.5 Z" fill="#f0f0f0"/></svg>
<div class="vt" style="left:424px;color:#f0f0f0;letter-spacing:0.35px">光照贴图密度</div>
<div class="a vb" style="left:546px;width:52px;"></div>
<div class="vt" style="left:555px;color:#c4c4c4">显示</div>
<div class="a vb" style="left:756px;width:125px;"></div>
<div class="a" style="left:788px;top:134px;width:31px;height:27px;background:#0a6fd8"></div>
<div class="a" style="left:787px;top:134px;width:1px;height:27px;background:rgba(20,30,30,.6)"></div><div class="a" style="left:819px;top:134px;width:1px;height:27px;background:rgba(20,30,30,.6)"></div><div class="a" style="left:850px;top:134px;width:1px;height:27px;background:rgba(20,30,30,.6)"></div>
<svg style="left:766px;top:138px" width="14" height="20" viewBox="0 0 14 20"><path d="M2 1 L2 15.5 L5.8 12.2 L8.5 18.5 L11 17.4 L8.3 11.3 L13 11 Z" fill="#d0d0d0"/></svg>
<svg style="left:794px;top:138px" width="19" height="19" viewBox="0 0 19 19"><path d="M9.5 1 V18 M1 9.5 H18 M6.5 4 L9.5 1 L12.5 4 M6.5 15 L9.5 18 L12.5 15 M4 6.5 L1 9.5 L4 12.5 M15 6.5 L18 9.5 L15 12.5" stroke="#fff" stroke-width="1.5" fill="none"/></svg>
<svg style="left:825px;top:138px" width="19" height="19" viewBox="0 0 19 19"><path d="M16 8 A7 7 0 0 0 3.5 5.5 M3 11 A7 7 0 0 0 15.5 13.5" stroke="#d0d0d0" stroke-width="1.6" fill="none"/><path d="M3 1.5 V6 H7.5 M16 17.5 V13 H11.5" stroke="#d0d0d0" stroke-width="1.6" fill="none"/></svg>
<svg style="left:856px;top:139px" width="18" height="18" viewBox="0 0 18 18"><path d="M1 6 V1 H6 M12 1 H17 V6 M17 12 V17 H12" stroke="#d0d0d0" stroke-width="1.6" fill="none"/><path d="M9 9 L15.5 2.5 M11 2.5 H15.5 V7" stroke="#d0d0d0" stroke-width="1.6" fill="none"/><rect x="1.5" y="11.5" width="5" height="5" fill="#d0d0d0"/></svg>
<div class="a vb" style="left:889px;width:29px;"></div>
<svg style="left:894px;top:138px" width="19" height="19" viewBox="0 0 19 19"><circle cx="9.5" cy="9.5" r="8" fill="none" stroke="#d0d0d0" stroke-width="1.4"/><ellipse cx="9.5" cy="9.5" rx="3.6" ry="8" fill="none" stroke="#d0d0d0" stroke-width="1.3"/><path d="M1.5 9.5 H17.5" stroke="#d0d0d0" stroke-width="1.3"/></svg>
<div class="a vb" style="left:925px;width:29px;"></div>
<svg style="left:930px;top:138px" width="20" height="19" viewBox="0 0 20 19"><path d="M4 3 L9 1.5 L8.5 8 L15 11 L12.5 16 L8 12 Z" fill="none" stroke="#d0d0d0" stroke-width="1.3"/><circle cx="4" cy="3" r="1.6" fill="#d0d0d0"/><circle cx="9" cy="2" r="1.6" fill="#d0d0d0"/><circle cx="15" cy="11" r="1.6" fill="#d0d0d0"/><circle cx="8" cy="12.5" r="1.6" fill="#d0d0d0"/><path d="M14 14 l4 3 -1 -4" stroke="#d0d0d0" stroke-width="1.2" fill="none"/></svg>
<div class="a vb" style="left:961px;width:62px;"></div>
<div class="a" style="left:962px;top:134px;width:30px;height:27px;background:#0a6fd8;border-radius:13.5px 0 0 13.5px"></div>
<svg style="left:970px;top:139px" width="18" height="18" viewBox="0 0 18 18"><rect x="1" y="1" width="16" height="16" rx="2" fill="none" stroke="#fff" stroke-width="1.6"/><path d="M6.3 1 V17 M11.7 1 V17 M1 6.3 H17 M1 11.7 H17" stroke="#fff" stroke-width="1.5"/></svg>
<div class="vt" style="left:997px">10</div>
<div class="a vb" style="left:1030px;width:67px;"></div>
<div class="a" style="left:1031px;top:134px;width:30px;height:27px;background:#0a6fd8;border-radius:13.5px 0 0 13.5px"></div>
<svg style="left:1037px;top:138px" width="20" height="19" viewBox="0 0 20 19"><path d="M11 2 L2.5 16.5 H18" stroke="#fff" stroke-width="1.6" fill="none"/><path d="M6.5 9.5 Q11.5 11 11.5 16.5" stroke="#fff" stroke-width="1.4" fill="none"/></svg>
<div class="vt" style="left:1066px">10°</div>
<div class="a vb" style="left:1112px;width:76px;"></div>
<div class="a" style="left:1113px;top:134px;width:30px;height:27px;background:#0a6fd8;border-radius:13.5px 0 0 13.5px"></div>
<svg style="left:1120px;top:139px" width="18" height="18" viewBox="0 0 18 18"><path d="M7 11 L16 2 M10 2 H16 V8" stroke="#fff" stroke-width="1.6" fill="none"/><rect x="1.5" y="12" width="4.5" height="4.5" fill="#fff"/></svg>
<div class="vt" style="left:1148px">0.25</div>
<div class="a vb" style="left:1197px;width:53px;"></div>
<svg style="left:1205px;top:140px" width="21" height="15" viewBox="0 0 21 15"><rect x="1" y="1.5" width="12.5" height="12" rx="1.5" fill="none" stroke="#d0d0d0" stroke-width="1.5"/><path d="M14 6 L19.5 2.5 V12.5 L14 9 Z" fill="none" stroke="#d0d0d0" stroke-width="1.4"/></svg>
<div class="vt" style="left:1230px">4</div>
<div class="a vb" style="left:1260px;width:29px;"></div>
<svg style="left:1266px;top:140px" width="17" height="15" viewBox="0 0 17 15"><rect x="1" y="1" width="15" height="13" rx="1.5" fill="none" stroke="#d0d0d0" stroke-width="1.5"/><path d="M8.5 1 V14 M1 7.5 H16" stroke="#d0d0d0" stroke-width="1.5"/></svg>
<div class="a" style="left:389px;top:162px;width:259px;height:612px;background:#383838;box-shadow:0 1px 3px rgba(0,0,0,.5)"></div>
<div class="hd" style="top:181px">视图模式</div><div class="a" style="left:476px;top:186px;width:157px;height:1px;background:#686868"></div>
<div class="a" style="left:389px;top:201px;width:259px;height:28px;background:#0070e0"></div>
<div class="bu" style="top:209.8px"></div>
<svg style="left:444px;top:205.5px" width="19" height="19" viewBox="0 0 19 19"><circle cx="9.5" cy="9.5" r="8.5" fill="#5aa0f8" stroke="#8cc0ff" stroke-width="1.2"/><circle cx="12.5" cy="6" r="1.8" fill="#e0f0ff"/><path d="M3 9 Q3 3 9 2.5" stroke="#9cc8ff" stroke-width="1" fill="none" opacity=".6"/></svg>
<div class="mi" style="top:206.0px;color:#fff;">光照</div>
<div class="sc" style="top:208.5px;color:#b8d4f8;">ALT+4</div>
<div class="bu" style="top:237.3px"></div>
<svg style="left:444px;top:233.0px" width="19" height="19" viewBox="0 0 19 19"><circle cx="9.5" cy="9.5" r="8.8" fill="#a8a8a8"/></svg>
<div class="mi" style="top:233.5px;">无光照</div>
<div class="sc" style="top:236.0px;">ALT+3</div>
<div class="bu" style="top:264.8px"></div>
<svg style="left:444px;top:260.5px" width="19" height="19" viewBox="0 0 19 19"><circle cx="9.5" cy="9.5" r="8.3" fill="none" stroke="#a8a8a8" stroke-width="1.2"/><ellipse cx="9.5" cy="9.5" rx="4.3" ry="8.3" fill="none" stroke="#a8a8a8" stroke-width="1"/><path d="M9.5 1 V18 M1 9.5 H18 M2.3 5.5 H16.7 M2.3 13.5 H16.7" stroke="#a8a8a8" stroke-width="1"/></svg>
<div class="mi" style="top:261.0px;">线框</div>
<div class="sc" style="top:263.5px;">ALT+2</div>
<div class="bu" style="top:292.3px"></div>
<svg style="left:444px;top:288.0px" width="19" height="19" viewBox="0 0 19 19"><path d="M1 16 L7 9 L10.5 12.5 L4 18.5 Z" fill="#8a8a8a"/><path d="M6.5 7.5 L8.5 5.5 L14 11 L12 13 Z" fill="#a8a8a8"/><path d="M11 6 L13 2 M13 8 L18 5 M9 4.5 L9.5 1" stroke="#a8a8a8" stroke-width="1.5"/></svg>
<div class="mi" style="top:288.5px;">细节光照</div>
<div class="sc" style="top:291.0px;">ALT+5</div>
<div class="bu" style="top:319.8px"></div>
<svg style="left:444px;top:315.5px" width="19" height="19" viewBox="0 0 19 19"><path d="M9.5 1 a6 6 0 0 1 3.6 10.8 q-1 1 -1 2.5 h-5.2 q0 -1.5 -1 -2.5 a6 6 0 0 1 3.6 -10.8z" fill="#b8b8b8"/><rect x="7.2" y="15.2" width="4.6" height="1.4" fill="#8a8a8a"/><rect x="7.8" y="17.3" width="3.4" height="1.3" fill="#777"/></svg>
<div class="mi" style="top:316.0px;">仅光照</div>
<div class="sc" style="top:318.5px;">ALT+6</div>
<div class="bu" style="top:347.3px"></div>
<svg style="left:444px;top:343.0px" width="19" height="19" viewBox="0 0 19 19"><circle cx="9.5" cy="9.5" r="8.3" fill="none" stroke="#a8a8a8" stroke-width="1.3"/><path d="M13.5 7 a4.6 4.6 0 1 1 -6 -1.8 a3.6 3.6 0 0 0 6 1.8z" fill="#a8a8a8"/><circle cx="11.3" cy="8" r="1.6" fill="#383838"/></svg>
<div class="mi" style="top:343.5px;">反射</div>
<div class="bu" style="top:374.8px"></div>
<svg style="left:444px;top:370.5px" width="19" height="19" viewBox="0 0 19 19"><path d="M1 6 L6 2.5 L13 2.5 L18 6 L18 17 L13 14 L6 14 L1 17 Z" fill="#a8a8a8"/><circle cx="9.5" cy="6.5" r="2.6" fill="#383838"/><path d="M5 14 Q5 10 9.5 10 Q14 10 14 14 Z" fill="#383838"/></svg>
<div class="mi" style="top:371.0px;">玩家碰撞</div>
<div class="bu" style="top:402.3px"></div>
<svg style="left:444px;top:398.0px" width="19" height="19" viewBox="0 0 19 19"><path d="M1 7 L8 1.5 L18 5 L18 14 L9 18 L1 14 Z M1 7 L9 18 M8 1.5 L9 18 M8 1.5 L1 14 M18 5 L9 18" fill="none" stroke="#a8a8a8" stroke-width="1.2"/></svg>
<div class="mi" style="top:398.5px;">可视性碰撞</div>
<div class="bu" style="top:429.8px;background:#fff"></div>
<svg style="left:444px;top:425.5px" width="19" height="19" viewBox="0 0 19 19"><g fill="#c8c8c8"><rect x="6" y="2" width="3.6" height="3.6"/><rect x="10.6" y="2" width="3.6" height="3.6"/><rect x="15.2" y="2" width="3" height="3.6"/><rect x="6" y="6.6" width="3.6" height="3.6"/><rect x="10.6" y="6.6" width="3.6" height="3.6"/><rect x="15.2" y="6.6" width="3" height="3.6"/><rect x="6" y="11.2" width="3.6" height="3.6"/><rect x="10.6" y="11.2" width="3.6" height="3.6"/><rect x="15.2" y="11.2" width="3" height="3.6" opacity=".6"/></g><path d="M2 2 V16 M4 17.5 H18" stroke="#777" stroke-width="1.2"/></svg>
<div class="mi" style="top:426.0px;">优化视图模式</div>
<svg style="left:627px;top:428.0px" width="10" height="14" viewBox="0 0 10 14"><path d="M2 1.5 L7.5 7 L2 12.5" stroke="#d0d0d0" stroke-width="1.7" fill="none"/></svg>
<div class="bu" style="top:457.3px"></div>
<svg style="left:444px;top:453.0px" width="19" height="19" viewBox="0 0 19 19"><path d="M1 9 V18 H9" stroke="#777" stroke-width="1.3" fill="none"/><path d="M4 6 V15 H13" stroke="#888" stroke-width="1.3" fill="none"/><rect x="7" y="1" width="11" height="11" fill="#a8a8a8"/><path d="M12.5 2.5 q3.5 4 0 7.5 q-3.5 -3.5 0 -7.5z" fill="#383838"/></svg>
<div class="mi" style="top:453.5px;">着色细节层级</div>
<svg style="left:627px;top:455.5px" width="10" height="14" viewBox="0 0 10 14"><path d="M2 1.5 L7.5 7 L2 12.5" stroke="#d0d0d0" stroke-width="1.7" fill="none"/></svg>
<div class="bu" style="top:484.8px"></div>
<svg style="left:444px;top:480.5px" width="19" height="19" viewBox="0 0 19 19"><g fill="#a8a8a8"><rect x="5.5" y="5.5" width="7" height="7"/><rect x="1" y="1" width="1.5" height="1.5" opacity=".7"/><rect x="1" y="16.5" width="1.5" height="1.5" opacity=".7"/><rect x="4.2" y="1" width="1.5" height="1.5" opacity=".7"/><rect x="4.2" y="16.5" width="1.5" height="1.5" opacity=".7"/><rect x="7.4" y="1" width="1.5" height="1.5" opacity=".7"/><rect x="7.4" y="16.5" width="1.5" height="1.5" opacity=".7"/><rect x="10.6" y="1" width="1.5" height="1.5" opacity=".7"/><rect x="10.6" y="16.5" width="1.5" height="1.5" opacity=".7"/><rect x="13.8" y="1" width="1.5" height="1.5" opacity=".7"/><rect x="13.8" y="16.5" width="1.5" height="1.5" opacity=".7"/><rect x="16.5" y="1" width="1.5" height="1.5" opacity=".7"/><rect x="16.5" y="16.5" width="1.5" height="1.5" opacity=".7"/><rect x="1" y="4.2" width="1.5" height="1.5" opacity=".7"/><rect x="1" y="7.4" width="1.5" height="1.5" opacity=".7"/><rect x="1" y="10.6" width="1.5" height="1.5" opacity=".7"/><rect x="1" y="13.8" width="1.5" height="1.5" opacity=".7"/><rect x="16.5" y="4.2" width="1.5" height="1.5" opacity=".7"/><rect x="16.5" y="7.4" width="1.5" height="1.5" opacity=".7"/><rect x="16.5" y="10.6" width="1.5" height="1.5" opacity=".7"/><rect x="16.5" y="13.8" width="1.5" height="1.5" opacity=".7"/></g></svg>
<div class="mi" style="top:481.0px;">缓冲显示</div>
<svg style="left:627px;top:483.0px" width="10" height="14" viewBox="0 0 10 14"><path d="M2 1.5 L7.5 7 L2 12.5" stroke="#d0d0d0" stroke-width="1.7" fill="none"/></svg>
<div class="bu" style="top:512.3px"></div>
<svg style="left:444px;top:508.0px" width="19" height="19" viewBox="0 0 19 19"><g fill="#a8a8a8"><rect x="5.5" y="5.5" width="7" height="7"/><rect x="1" y="1" width="1.5" height="1.5" opacity=".7"/><rect x="1" y="16.5" width="1.5" height="1.5" opacity=".7"/><rect x="4.2" y="1" width="1.5" height="1.5" opacity=".7"/><rect x="4.2" y="16.5" width="1.5" height="1.5" opacity=".7"/><rect x="7.4" y="1" width="1.5" height="1.5" opacity=".7"/><rect x="7.4" y="16.5" width="1.5" height="1.5" opacity=".7"/><rect x="10.6" y="1" width="1.5" height="1.5" opacity=".7"/><rect x="10.6" y="16.5" width="1.5" height="1.5" opacity=".7"/><rect x="13.8" y="1" width="1.5" height="1.5" opacity=".7"/><rect x="13.8" y="16.5" width="1.5" height="1.5" opacity=".7"/><rect x="16.5" y="1" width="1.5" height="1.5" opacity=".7"/><rect x="16.5" y="16.5" width="1.5" height="1.5" opacity=".7"/><rect x="1" y="4.2" width="1.5" height="1.5" opacity=".7"/><rect x="1" y="7.4" width="1.5" height="1.5" opacity=".7"/><rect x="1" y="10.6" width="1.5" height="1.5" opacity=".7"/><rect x="1" y="13.8" width="1.5" height="1.5" opacity=".7"/><rect x="16.5" y="4.2" width="1.5" height="1.5" opacity=".7"/><rect x="16.5" y="7.4" width="1.5" height="1.5" opacity=".7"/><rect x="16.5" y="10.6" width="1.5" height="1.5" opacity=".7"/><rect x="16.5" y="13.8" width="1.5" height="1.5" opacity=".7"/></g></svg>
<div class="mi" style="top:508.5px;">Nanite可视化</div>
<svg style="left:627px;top:510.5px" width="10" height="14" viewBox="0 0 10 14"><path d="M2 1.5 L7.5 7 L2 12.5" stroke="#d0d0d0" stroke-width="1.7" fill="none"/></svg>
<div class="bu" style="top:539.8px"></div>
<svg style="left:444px;top:535.5px" width="19" height="19" viewBox="0 0 19 19"><g fill="#a8a8a8"><rect x="5.5" y="5.5" width="7" height="7"/><rect x="1" y="1" width="1.5" height="1.5" opacity=".7"/><rect x="1" y="16.5" width="1.5" height="1.5" opacity=".7"/><rect x="4.2" y="1" width="1.5" height="1.5" opacity=".7"/><rect x="4.2" y="16.5" width="1.5" height="1.5" opacity=".7"/><rect x="7.4" y="1" width="1.5" height="1.5" opacity=".7"/><rect x="7.4" y="16.5" width="1.5" height="1.5" opacity=".7"/><rect x="10.6" y="1" width="1.5" height="1.5" opacity=".7"/><rect x="10.6" y="16.5" width="1.5" height="1.5" opacity=".7"/><rect x="13.8" y="1" width="1.5" height="1.5" opacity=".7"/><rect x="13.8" y="16.5" width="1.5" height="1.5" opacity=".7"/><rect x="16.5" y="1" width="1.5" height="1.5" opacity=".7"/><rect x="16.5" y="16.5" width="1.5" height="1.5" opacity=".7"/><rect x="1" y="4.2" width="1.5" height="1.5" opacity=".7"/><rect x="1" y="7.4" width="1.5" height="1.5" opacity=".7"/><rect x="1" y="10.6" width="1.5" height="1.5" opacity=".7"/><rect x="1" y="13.8" width="1.5" height="1.5" opacity=".7"/><rect x="16.5" y="4.2" width="1.5" height="1.5" opacity=".7"/><rect x="16.5" y="7.4" width="1.5" height="1.5" opacity=".7"/><rect x="16.5" y="10.6" width="1.5" height="1.5" opacity=".7"/><rect x="16.5" y="13.8" width="1.5" height="1.5" opacity=".7"/></g></svg>
<div class="mi" style="top:536.0px;">Lumen</div>
<svg style="left:627px;top:538.0px" width="10" height="14" viewBox="0 0 10 14"><path d="M2 1.5 L7.5 7 L2 12.5" stroke="#d0d0d0" stroke-width="1.7" fill="none"/></svg>
<div class="bu" style="top:567.3px"></div>
<svg style="left:444px;top:563.0px" width="19" height="19" viewBox="0 0 19 19"><g fill="#a8a8a8"><rect x="5.5" y="5.5" width="7" height="7"/><rect x="1" y="1" width="1.5" height="1.5" opacity=".7"/><rect x="1" y="16.5" width="1.5" height="1.5" opacity=".7"/><rect x="4.2" y="1" width="1.5" height="1.5" opacity=".7"/><rect x="4.2" y="16.5" width="1.5" height="1.5" opacity=".7"/><rect x="7.4" y="1" width="1.5" height="1.5" opacity=".7"/><rect x="7.4" y="16.5" width="1.5" height="1.5" opacity=".7"/><rect x="10.6" y="1" width="1.5" height="1.5" opacity=".7"/><rect x="10.6" y="16.5" width="1.5" height="1.5" opacity=".7"/><rect x="13.8" y="1" width="1.5" height="1.5" opacity=".7"/><rect x="13.8" y="16.5" width="1.5" height="1.5" opacity=".7"/><rect x="16.5" y="1" width="1.5" height="1.5" opacity=".7"/><rect x="16.5" y="16.5" width="1.5" height="1.5" opacity=".7"/><rect x="1" y="4.2" width="1.5" height="1.5" opacity=".7"/><rect x="1" y="7.4" width="1.5" height="1.5" opacity=".7"/><rect x="1" y="10.6" width="1.5" height="1.5" opacity=".7"/><rect x="1" y="13.8" width="1.5" height="1.5" opacity=".7"/><rect x="16.5" y="4.2" width="1.5" height="1.5" opacity=".7"/><rect x="16.5" y="7.4" width="1.5" height="1.5" opacity=".7"/><rect x="16.5" y="10.6" width="1.5" height="1.5" opacity=".7"/><rect x="16.5" y="13.8" width="1.5" height="1.5" opacity=".7"/></g></svg>
<div class="mi" style="top:563.5px;">虚拟阴影贴图</div>
<svg style="left:627px;top:565.5px" width="10" height="14" viewBox="0 0 10 14"><path d="M2 1.5 L7.5 7 L2 12.5" stroke="#d0d0d0" stroke-width="1.7" fill="none"/></svg>
<div class="hd" style="top:595px">地形</div><div class="a" style="left:448px;top:600px;width:185px;height:1px;background:#686868"></div>
<svg style="left:444px;top:618px" width="20" height="20" viewBox="0 0 20 20"><path d="M1 2.5 H13 M1 7 H8 M1 11.5 H5" stroke="#a8a8a8" stroke-width="1.7"/><path d="M6 14.5 Q12.5 7.5 19 14.5 Q12.5 21 6 14.5 Z" fill="none" stroke="#c8c8c8" stroke-width="1.3"/><circle cx="12.5" cy="14.5" r="2.2" fill="#c8c8c8"/></svg>
<div class="mi" style="top:620px">查看器</div>
<svg style="left:627px;top:622px" width="10" height="14" viewBox="0 0 10 14"><path d="M2 1.5 L7.5 7 L2 12.5" stroke="#d0d0d0" stroke-width="1.7" fill="none"/></svg>
<svg style="left:444px;top:646px" width="19" height="19" viewBox="0 0 19 19"><path d="M1 9 V18 H9" stroke="#777" stroke-width="1.3" fill="none"/><path d="M4 6 V15 H13" stroke="#888" stroke-width="1.3" fill="none"/><rect x="7" y="1" width="11" height="11" fill="#b0b0b0"/></svg>
<div class="mi" style="top:648px">LOD</div>
<svg style="left:627px;top:649px" width="10" height="14" viewBox="0 0 10 14"><path d="M2 1.5 L7.5 7 L2 12.5" stroke="#d0d0d0" stroke-width="1.7" fill="none"/></svg>
<div class="hd" style="top:680px">曝光</div><div class="a" style="left:448px;top:685px;width:185px;height:1px;background:#686868"></div>
<svg style="left:407px;top:705px" width="20" height="16" viewBox="0 0 20 16"><path d="M2 8.5 L7 13.5 L18 2" stroke="#fff" stroke-width="2.3" fill="none"/></svg>
<div class="mi" style="left:444px;top:704px">游戏设置</div>
<div class="mi" style="left:444px;top:737px;letter-spacing:0.3px">EV100</div>
<div class="a" style="left:507px;top:729px;width:126px;height:33px;background:#0f0f0f;border:1px solid #2a2a2a;border-radius:4px;overflow:hidden"><div class="a" style="left:0;top:0;width:44px;height:33px;background:#262626"></div></div>
<div class="t" style="left:523px;top:737px;font-size:17px;color:#7a7a7a;letter-spacing:0.8px">1.0</div>
<div class="a" style="left:652px;top:216px;width:193px;height:67px;background:#f0f0f0;border:2px solid #0a0a0a;box-shadow:1px 1px 2px rgba(0,0,0,.4)"></div>
<div class="t" style="left:666px;top:231px;font-size:15px;color:#1a1a1a;letter-spacing:0px">渲染场景，显示普通光照</div>
<div class="t" style="left:669px;top:255px;font-size:12.6px;color:#5a5a5a;letter-spacing:0px">长按(Ctrl + Alt)获得更多信息</div>


<!-- outliner -->
<div class="a" style="left:1302px;top:127px;width:200px;height:33px;background:#242424;border-radius:5px 5px 0 0"></div>
<svg style="left:1308px;top:132px" width="20" height="20" viewBox="0 0 20 20"><rect x="1" y="1" width="18" height="4" fill="#d0d0d0"/><rect x="7" y="8" width="12" height="4" fill="#d0d0d0"/><rect x="7" y="14.5" width="12" height="4" fill="#d0d0d0"/><path d="M2 6 V16.5 H6 M2 10 H5" stroke="#8a8a8a" stroke-width="1.2" fill="none"/></svg>
<div class="t" style="left:1335px;top:134px;font-size:16px;color:#cfcfcf;letter-spacing:0.6px">大纲</div>
<svg style="left:1473px;top:137px" width="11" height="11" viewBox="0 0 11 11"><path d="M1.5 1.5 L9.5 9.5 M9.5 1.5 L1.5 9.5" stroke="#d8d8d8" stroke-width="1.8"/></svg>
<div class="a" style="left:1302px;top:160px;width:622px;height:43px;background:#242424"></div>
<div class="a" style="left:1302px;top:203px;width:622px;height:261px;background:#151515"></div>
<div class="a" style="left:1312px;top:170px;width:537px;height:28px;background:#0f0f0f;border:1px solid #303030;border-radius:14px"></div>
<svg style="left:1319px;top:176px" width="16" height="16" viewBox="0 0 16 16"><path d="M1.5 1.5 L14.5 14.5 M14.5 1.5 L1.5 14.5" stroke="#e0e0e0" stroke-width="1.9"/></svg>
<div class="t" style="left:1353px;top:175px;font-size:17px;color:#c8c8c8;letter-spacing:0.3px">Light</div>
<svg style="left:1861px;top:174px" width="20" height="18" viewBox="0 0 20 18"><path d="M1 1.5 h6 l2 2.5 h10 v13 h-18 z" fill="#c8c8c8"/><path d="M10 7 v7 M6.5 10.5 h7" stroke="#242424" stroke-width="1.8"/></svg>
<svg style="left:1891px;top:173px" width="20" height="20" viewBox="0 0 26 26"><g transform="translate(13 13)" fill="#c8c8c8"><circle r="8.3"/><use href="#gt"/><use href="#gt" transform="rotate(45)"/><use href="#gt" transform="rotate(90)"/><use href="#gt" transform="rotate(135)"/><use href="#gt" transform="rotate(180)"/><use href="#gt" transform="rotate(225)"/><use href="#gt" transform="rotate(270)"/><use href="#gt" transform="rotate(315)"/><circle r="5.8" fill="#242424"/><circle r="3.4" fill="none" stroke="#c8c8c8" stroke-width="1.4"/></g></svg>
<div class="a" style="left:1302px;top:203px;width:602px;height:30px;background:#2f2f2f"></div>
<div class="a" style="left:1332px;top:203px;width:1px;height:30px;background:#1f1f1f"></div>
<div class="a" style="left:1363px;top:203px;width:1px;height:30px;background:#1f1f1f"></div>
<div class="a" style="left:1749px;top:203px;width:1px;height:30px;background:#1f1f1f"></div>
<svg style="left:1308px;top:211px" width="19" height="14" viewBox="0 0 19 14"><path d="M1 7 Q9.5 -3 18 7 Q9.5 17 1 7 Z" fill="none" stroke="#d0d0d0" stroke-width="1.5"/><circle cx="9.5" cy="7" r="2.8" fill="#d0d0d0"/></svg>
<svg style="left:1341px;top:208px" width="13" height="20" viewBox="0 0 13 20"><path d="M4 1 h5 v2 h-0.8 v5 l3 3 v1.5 h-9.4 v-1.5 l3 -3 v-5 h-0.8 z" fill="#d0d0d0"/><path d="M6.5 12 v7" stroke="#d0d0d0" stroke-width="1.3"/></svg>
<div class="t" style="left:1368px;top:209px;font-size:16.5px;color:#c8c8c8;letter-spacing:0.5px">项目标签</div>
<svg style="left:1443px;top:214px" width="10" height="7" viewBox="0 0 10 7"><path d="M5 0.5 L9.5 6.5 H0.5 Z" fill="#d0d0d0"/></svg>
<div class="t" style="left:1755px;top:209px;font-size:16.5px;color:#c8c8c8;letter-spacing:0.5px">类型</div>
<div class="a" style="left:1568px;top:236px;width:39px;height:1px;background:#8bc34a;opacity:.7"></div>
<svg style="left:1404px;top:242px" width="20" height="20" viewBox="0 0 20 20"><path d="M1 7 L10 2 L19 6 L19 13 L10 18 L1 14 Z" fill="#b0b0b0"/><path d="M1 7 L10 2 L19 6 L10 11 Z" fill="#1a1a1a" stroke="#c8c8c8" stroke-width="1.4"/><path d="M5.5 4.8 L14.5 8.8" stroke="#c8c8c8" stroke-width="1.3"/><path d="M10 11 V18" stroke="#1a1a1a" stroke-width="1"/></svg>
<div class="t ol" style="left:1432px;top:240px"><em>SM_RoundCeiling</em><span style="background:#8bc34a;color:#111">Light</span>1StaticMeshActor</div>
<div class="t ol ty" style="left:1759px;top:240px">StaticMeshActor</div>
<svg style="left:1404px;top:267px" width="20" height="20" viewBox="0 0 20 20"><path d="M1 7 L10 2 L19 6 L19 13 L10 18 L1 14 Z" fill="#b0b0b0"/><path d="M1 7 L10 2 L19 6 L10 11 Z" fill="#1a1a1a" stroke="#c8c8c8" stroke-width="1.4"/><path d="M5.5 4.8 L14.5 8.8" stroke="#c8c8c8" stroke-width="1.3"/><path d="M10 11 V18" stroke="#1a1a1a" stroke-width="1"/></svg>
<div class="t ol" style="left:1432px;top:265px"><em>SM_RoundCeiling</em><span style="background:#8bc34a;color:#111">Light</span>1StaticMeshActor</div>
<div class="t ol ty" style="left:1759px;top:265px">StaticMeshActor</div>
<svg style="left:1404px;top:292px" width="20" height="20" viewBox="0 0 20 20"><path d="M1 7 L10 2 L19 6 L19 13 L10 18 L1 14 Z" fill="#b0b0b0"/><path d="M1 7 L10 2 L19 6 L10 11 Z" fill="#1a1a1a" stroke="#c8c8c8" stroke-width="1.4"/><path d="M5.5 4.8 L14.5 8.8" stroke="#c8c8c8" stroke-width="1.3"/><path d="M10 11 V18" stroke="#1a1a1a" stroke-width="1"/></svg>
<div class="t ol" style="left:1432px;top:290px"><em>SM_RoundCeiling</em><span style="background:#8bc34a;color:#111">Light</span>1StaticMeshActor</div>
<div class="t ol ty" style="left:1759px;top:290px">StaticMeshActor</div>
<svg style="left:1404px;top:317px" width="20" height="20" viewBox="0 0 20 20"><path d="M1 7 L10 2 L19 6 L19 13 L10 18 L1 14 Z" fill="#b0b0b0"/><path d="M1 7 L10 2 L19 6 L10 11 Z" fill="#1a1a1a" stroke="#c8c8c8" stroke-width="1.4"/><path d="M5.5 4.8 L14.5 8.8" stroke="#c8c8c8" stroke-width="1.3"/><path d="M10 11 V18" stroke="#1a1a1a" stroke-width="1"/></svg>
<div class="t ol" style="left:1432px;top:315px"><em>SM_RoundCeiling</em><span style="background:#8bc34a;color:#111">Light</span>1StaticMeshActor</div>
<div class="t ol ty" style="left:1759px;top:315px">StaticMeshActor</div>
<svg style="left:1404px;top:342px" width="20" height="20" viewBox="0 0 20 20"><path d="M1 7 L10 2 L19 6 L19 13 L10 18 L1 14 Z" fill="#b0b0b0"/><path d="M1 7 L10 2 L19 6 L10 11 Z" fill="#1a1a1a" stroke="#c8c8c8" stroke-width="1.4"/><path d="M5.5 4.8 L14.5 8.8" stroke="#c8c8c8" stroke-width="1.3"/><path d="M10 11 V18" stroke="#1a1a1a" stroke-width="1"/></svg>
<div class="t ol" style="left:1432px;top:340px"><em>SM_RoundCeiling</em><span style="background:#8bc34a;color:#111">Light</span>1StaticMeshActor</div>
<div class="t ol ty" style="left:1759px;top:340px">StaticMeshActor</div>
<svg style="left:1404px;top:367px" width="20" height="20" viewBox="0 0 20 20"><path d="M1 7 L10 2 L19 6 L19 13 L10 18 L1 14 Z" fill="#b0b0b0"/><path d="M1 7 L10 2 L19 6 L10 11 Z" fill="#1a1a1a" stroke="#c8c8c8" stroke-width="1.4"/><path d="M5.5 4.8 L14.5 8.8" stroke="#c8c8c8" stroke-width="1.3"/><path d="M10 11 V18" stroke="#1a1a1a" stroke-width="1"/></svg>
<div class="t ol" style="left:1432px;top:365px"><em>SM_RoundCeiling</em><span style="background:#8bc34a;color:#111">Light</span>1StaticMeshActor</div>
<div class="t ol ty" style="left:1759px;top:365px">StaticMeshActor</div>
<svg style="left:1404px;top:392px" width="20" height="20" viewBox="0 0 20 20"><path d="M1 4 L6 0.5 L11 4 L7 9 Z" fill="#9a9a9a"/><path d="M8 9 L17 18 M17 11 V18 H10" stroke="#d8d8d8" stroke-width="1.6" fill="none"/><path d="M4 11 V17" stroke="#d8d8d8" stroke-width="1.4"/></svg>
<div class="t ol" style="left:1432px;top:390px"><em style="letter-spacing:0">Spot</em><span style="background:#8bc34a;color:#111">Light</span><em style="letter-spacing:0">Stationary1</em></div>
<div class="t ol" style="left:1670px;top:390px"><em style="letter-spacing:0">Spot</em><span style="background:#8bc34a;color:#111">Light</span></div>
<div class="t ol ty" style="left:1759px;top:390px"><em style="letter-spacing:0">Spot</em><span style="background:#8bc34a;color:#5a7a2a">Light</span></div>
<svg style="left:1404px;top:417px" width="20" height="20" viewBox="0 0 20 20"><path d="M1 4 L6 0.5 L11 4 L7 9 Z" fill="#9a9a9a"/><path d="M8 9 L17 18 M17 11 V18 H10" stroke="#d8d8d8" stroke-width="1.6" fill="none"/><path d="M4 11 V17" stroke="#d8d8d8" stroke-width="1.4"/></svg>
<div class="t ol" style="left:1432px;top:415px"><em style="letter-spacing:0">Spot</em><span style="background:#8bc34a;color:#111">Light</span><em style="letter-spacing:0">Stationary2</em></div>
<div class="t ol" style="left:1670px;top:415px"><em style="letter-spacing:0">Spot</em><span style="background:#8bc34a;color:#111">Light</span></div>
<div class="t ol ty" style="left:1759px;top:415px"><em style="letter-spacing:0">Spot</em><span style="background:#8bc34a;color:#5a7a2a">Light</span></div>
<svg style="left:1404px;top:442px" width="20" height="20" viewBox="0 0 20 20"><path d="M1 4 L6 0.5 L11 4 L7 9 Z" fill="#9a9a9a"/><path d="M8 9 L17 18 M17 11 V18 H10" stroke="#d8d8d8" stroke-width="1.6" fill="none"/><path d="M4 11 V17" stroke="#d8d8d8" stroke-width="1.4"/></svg>
<div class="t ol" style="left:1432px;top:440px"><em style="letter-spacing:0">Spot</em><span style="background:#8bc34a;color:#111">Light</span><em style="letter-spacing:0">Stationary4</em></div>
<div class="t ol" style="left:1670px;top:440px"><em style="letter-spacing:0">Spot</em><span style="background:#8bc34a;color:#111">Light</span></div>
<div class="t ol ty" style="left:1759px;top:440px"><em style="letter-spacing:0">Spot</em><span style="background:#8bc34a;color:#5a7a2a">Light</span></div>

<div class="a" style="left:1909px;top:337px;width:10px;height:123px;background:#4a4a4a;border-radius:5px"></div>
<div class="a" style="left:1302px;top:464px;width:622px;height:42px;background:#242424"></div>
<div class="t" style="left:1320px;top:477px;font-size:16px;color:#8bc34a;letter-spacing:1.1px">显示19/343个Actor</div>
<!-- details -->
<div class="a" style="left:1302px;top:511px;width:200px;height:34px;background:#242424;border-radius:5px 5px 0 0;overflow:hidden"><div class="a" style="left:0;top:0;width:200px;height:2px;background:linear-gradient(90deg,#0a50a0,#1070e0 40%,#0a50a0 80%,#242424)"></div></div>
<svg style="left:1308px;top:517px" width="20" height="20" viewBox="0 0 20 20"><path d="M1 3 h9 M1 7 h6" stroke="#d0d0d0" stroke-width="1.6"/><path d="M15 1 L19 5 L8 16 L2 18 L4 12 Z" fill="#e8e8e8"/><path d="M1 19 h18" stroke="#d0d0d0" stroke-width="1.3"/></svg>
<div class="t" style="left:1335px;top:519px;font-size:16px;color:#cfcfcf;letter-spacing:0.6px">细节</div>
<svg style="left:1473px;top:522px" width="11" height="11" viewBox="0 0 11 11"><path d="M1.5 1.5 L9.5 9.5 M9.5 1.5 L1.5 9.5" stroke="#d8d8d8" stroke-width="1.8"/></svg>
<div class="a" style="left:1302px;top:545px;width:622px;height:440px;background:#242424"></div>
<svg style="left:1317px;top:558px" width="20" height="20" viewBox="0 0 20 20"><path d="M1 7 L10 2 L19 6 L19 13 L10 18 L1 14 Z" fill="#b0b0b0"/><path d="M1 7 L10 2 L19 6 L10 11 Z" fill="#242424" stroke="#c8c8c8" stroke-width="1.4"/><path d="M5.5 4.8 L14.5 8.8" stroke="#c8c8c8" stroke-width="1.3"/><path d="M10 11 V18" stroke="#242424" stroke-width="1"/></svg>

<div class="t" style="left:1347px;top:559px;font-size:17px;color:#e0e0e0;letter-spacing:0.44px">WallPiece124</div>
<div class="a" style="left:1703px;top:553px;width:92px;height:30px;background:#383838;border:1px solid #1c1c1c;border-radius:5px"></div>
<svg style="left:1722px;top:560px" width="17" height="17" viewBox="0 0 17 17"><path d="M8.5 1 V16 M1 8.5 H16" stroke="#7fd02c" stroke-width="2"/></svg>
<div class="t" style="left:1745px;top:560px;font-size:16px;color:#e0e0e0;letter-spacing:0.5px">添加</div>
<div class="a" style="left:1802px;top:554px;width:34px;height:28px;background:#383838;border:1px solid #1c1c1c;border-radius:5px"></div>
<svg style="left:1808px;top:560px" width="22" height="16" viewBox="0 0 28 20"><rect x="1" y="7" width="7" height="6" rx="1" fill="#e0e0e0"/><rect x="18" y="1" width="8" height="6" rx="1" fill="#e0e0e0"/><rect x="18" y="13" width="8" height="6" rx="1" fill="#e0e0e0"/><path d="M8 10 H13 M18 4 H15 Q13 4 13 6 V14 Q13 16 15 16 H18" stroke="#e0e0e0" stroke-width="1.8" fill="none"/></svg>
<svg style="left:1849px;top:558px" width="20" height="20" viewBox="0 0 20 20"><circle cx="10" cy="10" r="8" fill="none" stroke="#d0d0d0" stroke-width="1.6"/><path d="M7.3 8 Q7.3 5.3 10 5.3 Q12.7 5.3 12.7 7.8 Q12.7 9.3 10 10.3 V11.8" stroke="#d0d0d0" stroke-width="1.6" fill="none"/><circle cx="10" cy="14.3" r="1" fill="#d0d0d0"/></svg>
<svg style="left:1890px;top:557px" width="20" height="22" viewBox="0 0 20 22"><rect x="1" y="10" width="13" height="10" rx="1" fill="#d0d0d0"/><path d="M11 10 V6 Q11 2 14.5 2 Q18 2 18 6 V8" stroke="#d0d0d0" stroke-width="1.8" fill="none"/><rect x="6.5" y="13" width="2" height="4" fill="#242424"/></svg>
<div class="a" style="left:1307px;top:589px;width:612px;height:60px;background:#1a1a1a;border-radius:4px;overflow:hidden">
 <div class="a" style="left:5px;top:4px;width:582px;height:30px;background:#40566f"></div>
 <div class="t" style="left:37px;top:10px;font-size:17px;color:#f0f0f0;letter-spacing:0.44px">WallPiece124 （实例）</div>
 <div class="t" style="left:70px;top:40px;font-size:17px;color:#c8c8c8;letter-spacing:0.27px">StaticMeshComponent (StaticMeshComponent0)</div>
 <div class="t" style="left:483px;top:40px;font-size:16.5px;color:#c8c8c8;letter-spacing:0.3px">在C++中编辑</div>
 <div class="a" style="left:593px;top:7px;width:9px;height:45px;background:#4a4a4a;border-radius:5px"></div>
</div>
<svg style="left:1317px;top:597px" width="20" height="20" viewBox="0 0 20 20"><path d="M1 7 L10 2 L19 6 L19 13 L10 18 L1 14 Z" fill="#b0b0b0"/><path d="M1 7 L10 2 L19 6 L10 11 Z" fill="#40566f" stroke="#c8c8c8" stroke-width="1.4"/><path d="M5.5 4.8 L14.5 8.8" stroke="#c8c8c8" stroke-width="1.3"/><path d="M10 11 V18" stroke="#40566f" stroke-width="1"/></svg>
<svg style="left:1349px;top:629px;clip-path:inset(0 0 1px 0)" width="20" height="20" viewBox="0 0 20 20"><path d="M1 10 L10 5 L19 9 L19 13 L10 18 L1 14 Z" fill="#b0b0b0"/><path d="M1 10 L10 5 L19 9 L10 14 Z" fill="#1a1a1a" stroke="#c8c8c8" stroke-width="1.4"/><path d="M5.5 7.6 L14.5 11.6" stroke="#c8c8c8" stroke-width="1.3"/></svg>

<div class="a" style="left:1312px;top:661px;width:507px;height:27px;background:#0f0f0f;border:1px solid #303030;border-radius:14px"></div>
<svg style="left:1317px;top:665px" width="20" height="20" viewBox="0 0 20 20"><circle cx="8.5" cy="8.5" r="6" fill="none" stroke="#d8d8d8" stroke-width="1.6"/><path d="M13 13 L18 18" stroke="#d8d8d8" stroke-width="1.8"/></svg>
<div class="t" style="left:1347px;top:666px;font-size:16px;color:#6c6c6c;letter-spacing:0.5px">搜索</div>
<svg style="left:1835px;top:664px" width="18" height="18" viewBox="0 0 18 18"><rect x="1" y="1" width="16" height="16" rx="1.5" fill="none" stroke="#d0d0d0" stroke-width="1.7"/><path d="M1 5.5 h16 M1 11 h16 M9 5.5 v11.5" stroke="#d0d0d0" stroke-width="1.7"/></svg>
<svg style="left:1869px;top:664px" width="18" height="18" viewBox="0 0 18 18"><path d="M9 0.8 l2.4 5.3 5.8 .6 -4.3 3.9 1.2 5.7 -5.1 -2.9 -5.1 2.9 1.2 -5.7 -4.3 -3.9 5.8 -.6z" fill="#d0d0d0"/></svg>
<svg style="left:1899px;top:664px" width="19" height="19" viewBox="0 0 26 26"><g transform="translate(13 13)" fill="#c8c8c8"><circle r="8.3"/><use href="#gt"/><use href="#gt" transform="rotate(45)"/><use href="#gt" transform="rotate(90)"/><use href="#gt" transform="rotate(135)"/><use href="#gt" transform="rotate(180)"/><use href="#gt" transform="rotate(225)"/><use href="#gt" transform="rotate(270)"/><use href="#gt" transform="rotate(315)"/><circle r="5.8" fill="#242424"/><circle r="3.4" fill="none" stroke="#c8c8c8" stroke-width="1.4"/></g></svg>
<div class="a fb" style="left:1315px;width:65px">通用</div>
<div class="a fb" style="left:1385px;width:71px">Actor</div>
<div class="a fb" style="left:1461px;width:65px">LOD</div>
<div class="a fb" style="left:1532px;width:65px">杂项</div>
<div class="a fb" style="left:1602px;width:66px">物理</div>
<div class="a fb" style="left:1673px;width:66px">渲染</div>
<div class="a fb" style="left:1744px;width:66px">流送</div>
<div class="a fb" style="left:1816px;width:65px;background:#0070e0;color:#fff;border-color:#0a58b0">所有</div>

<!-- property rows -->
<div class="a" style="left:1304px;top:731px;width:597px;height:254px;background:#151515;overflow:hidden">
 <div class="a pr" style="top:-21px"></div>
 <div class="a" style="left:254px;top:-6px;width:156px;height:17px;background:#383838;border-radius:4px"></div>
 <div class="a" style="left:28px;top:0;width:170px;height:2px;background:repeating-linear-gradient(90deg,#999 0 3px,transparent 3px 5px);opacity:.6"></div>
 <div class="a" style="left:262px;top:0;width:90px;height:2px;background:repeating-linear-gradient(90deg,#888 0 3px,transparent 3px 5px);opacity:.5"></div>
 <div class="a pr" style="top:13px"></div>
 <div class="a pr cat" style="top:47px"></div>
 <div class="a pr" style="top:81px"></div>
 <div class="a pr" style="top:115px"></div>
 <div class="a pr" style="top:149px"></div>
 <div class="a pr" style="top:183px"></div>
 <div class="a pr cat" style="top:217px"></div>
 <div class="a pr" style="top:251px"></div>
 <div class="a" style="left:238px;top:-21px;width:1px;height:33px;background:#151515"></div>
 <div class="a" style="left:568px;top:-21px;width:1px;height:33px;background:#151515"></div>
 <div class="a" style="left:238px;top:81px;width:1px;height:101px;background:#151515"></div>
 <div class="a" style="left:568px;top:81px;width:1px;height:101px;background:#151515"></div>
 <div class="a" style="left:238px;top:251px;width:1px;height:33px;background:#151515"></div>
</div>
<div class="a" style="left:1901px;top:731px;width:23px;height:254px;background:#1a1a1a"></div>
<div class="a" style="left:1906px;top:820px;width:10px;height:63px;background:#4a4a4a;border-radius:5px"></div>
<div class="a" style="left:1918px;top:808px;width:11px;height:72px;background:#243352;border:1px solid #3a4a6a;border-radius:3px 0 0 3px"></div>
<div class="a" style="left:1922px;top:815px;width:5px;height:30px;background:repeating-linear-gradient(180deg,#4a5a7a 0 1px,transparent 1px 3px)"></div>
<div class="a" style="left:1922px;top:846px;width:5px;height:30px;background:repeating-linear-gradient(180deg,#5fd08a 0 1px,transparent 1px 3px)"></div>
<svg style="left:1311px;top:753px" width="12" height="14" viewBox="0 0 12 14"><path d="M2 1 L10 7 L2 13 Z" fill="#8a8a8a"/></svg>
<div class="t pt" style="left:1332px;top:754px">高级</div>
<svg style="left:1310px;top:789px" width="14" height="12" viewBox="0 0 14 12"><path d="M1 2 H13 L7 10 Z" fill="#8a8a8a"/></svg>
<div class="t pt" style="left:1332px;top:788px">光照</div>
<svg style="left:1311px;top:821px" width="12" height="14" viewBox="0 0 12 14"><path d="M2 1 L10 7 L2 13 Z" fill="#8a8a8a"/></svg>
<div class="t pt" style="left:1332px;top:822px">Lightmass设置</div>
<div class="t pt" style="left:1332px;top:856px">投射阴影</div>
<div class="a cb" style="left:1558px;top:852px"></div>
<svg style="left:1561px;top:856px" width="16" height="14" viewBox="0 0 16 14"><path d="M2.5 7 L6 10.5 L13.5 3" stroke="#1a80f0" stroke-width="2.6" fill="none"/></svg>
<div class="a cb" style="left:1329px;top:885px"></div>
<svg style="left:1332px;top:889px" width="16" height="14" viewBox="0 0 16 14"><path d="M2.5 7 L6 10.5 L13.5 3" stroke="#1a80f0" stroke-width="2.6" fill="none"/></svg>
<div class="t pt" style="left:1358px;top:889px">覆盖的光照贴图分辨率</div>
<div class="a" style="left:1558px;top:885px;width:156px;height:23px;background:#0f0f0f;border:1px solid #3a3a3a;border-radius:4px"></div>
<div class="t" style="left:1570px;top:890px;font-size:12.5px;color:#fff">1024</div>
<svg style="left:1876px;top:888px" width="17" height="16" viewBox="0 0 17 16"><path d="M6 2 L2 6 L6 10 M2 6 H11 Q15 6 15 10 Q15 14 11 14" stroke="#d0d0d0" stroke-width="1.6" fill="none"/></svg>
<svg style="left:1311px;top:922px" width="12" height="14" viewBox="0 0 12 14"><path d="M2 1 L10 7 L2 13 Z" fill="#8a8a8a"/></svg>
<div class="t pt" style="left:1332px;top:923px">高级</div>
<svg style="left:1310px;top:958px" width="14" height="12" viewBox="0 0 14 12"><path d="M1 2 H13 L7 10 Z" fill="#8a8a8a"/></svg>
<div class="t pt" style="left:1332px;top:957px">渲染</div>


<!-- status bar -->
<div class="a" style="left:9px;top:990px;width:1920px;height:39px;background:#242424"></div>
<div class="a" style="left:162px;top:990px;width:3px;height:39px;background:#151515"></div>
<div class="a" style="left:283px;top:990px;width:3px;height:39px;background:#151515"></div>
<div class="a" style="left:742px;top:990px;width:3px;height:39px;background:#151515"></div>
<div class="a" style="left:1603px;top:990px;width:3px;height:39px;background:#151515"></div>
<div class="a" style="left:1748px;top:990px;width:3px;height:39px;background:#151515"></div>
<div class="a" style="left:1758px;top:990px;width:3px;height:39px;background:#151515"></div>
<div class="a" style="left:1921px;top:990px;width:3px;height:39px;background:#151515"></div>
<svg style="left:22px;top:999px" width="22" height="22" viewBox="0 0 22 22"><path d="M1 2 h5 l2 2 h5 v4 h-3 q-4 1 -4 6 v2 h-5 z" fill="#b8b8b8"/><circle cx="14.5" cy="13" r="4.2" fill="none" stroke="#c8c8c8" stroke-width="1.5"/><path d="M11.5 16 L8.5 19.5" stroke="#c8c8c8" stroke-width="1.8"/></svg>
<div class="t" style="left:48px;top:1002px;font-size:16px;color:#d0d0d0;letter-spacing:0.9px">内容侧滑菜单</div>
<svg style="left:178px;top:1000px" width="18" height="20" viewBox="0 0 18 20"><path d="M1 2 h3 v2 h3 v-2 h3 v2 h3 v-2 h3 v17 h-15 z" fill="#c8c8c8"/><path d="M4 8 L7.5 11 L4 14 M9 15 h5" stroke="#242424" stroke-width="1.5" fill="none"/></svg>
<div class="t" style="left:202px;top:1002px;font-size:16px;color:#d0d0d0;letter-spacing:0.6px">输出日志</div>
<svg style="left:302px;top:1002px" width="22" height="18" viewBox="0 0 22 18"><rect x="1" y="1" width="20" height="15" fill="none" stroke="#c8c8c8" stroke-width="1.5"/><path d="M1 3 h20" stroke="#c8c8c8" stroke-width="2"/><path d="M4 6.5 L8 9.5 L4 12.5 M9.5 12.8 h5.5" stroke="#c8c8c8" stroke-width="1.4" fill="none"/></svg>
<div class="t" style="left:328px;top:1002px;font-size:16px;color:#d0d0d0;letter-spacing:0.3px">Cmd</div>
<svg style="left:372px;top:1006px" width="14" height="10" viewBox="0 0 14 10"><path d="M1.5 2 L7 7.5 L12.5 2" stroke="#c8c8c8" stroke-width="1.6" fill="none"/></svg>
<div class="a" style="left:401px;top:996px;width:332px;height:28px;background:#0f0f0f;border:1px solid #303030;border-radius:4px"></div>
<div class="t" style="left:413px;top:1001px;font-size:14px;color:#5c5c5c;letter-spacing:0.6px">输入控制台命令</div>
<svg style="left:1620px;top:1000px" width="19" height="19" viewBox="0 0 19 19"><rect x="1" y="1" width="17" height="4.6" fill="#c8c8c8"/><rect x="1" y="7" width="17" height="4.6" fill="#c8c8c8"/><rect x="1" y="13" width="17" height="4.6" fill="#c8c8c8"/><path d="M13 3.3 h3 M13 9.3 h3 M13 15.3 h3" stroke="#242424" stroke-width="1.4"/></svg>
<div class="t" style="left:1644px;top:1002px;font-size:16px;color:#d0d0d0;letter-spacing:1px">派生数据</div>
<svg style="left:1779px;top:1000px" width="19" height="19" viewBox="0 0 19 19"><circle cx="9.5" cy="9.5" r="7.8" fill="none" stroke="#c8c8c8" stroke-width="1.6"/><path d="M4 15 L15 4" stroke="#c8c8c8" stroke-width="1.6"/></svg>
<div class="t" style="left:1804px;top:1002px;font-size:16px;color:#d0d0d0;letter-spacing:1px">源码管理关闭</div>
<div class="t" style="left:1729px;top:1010px;font-size:17.5px;color:#e8e8e8;letter-spacing:0.2px;text-shadow:0 0 2px #444">CSDN @xiaoyaoiangwj</div>
<!-- bottom strip -->
<div class="a" style="left:9px;top:1029px;width:1920px;height:10px;background:#0c0c0c"></div>
<div class="a" style="left:69px;top:1030px;width:430px;height:9px;background:#f4f4f4"></div>
<div class="a" style="left:418px;top:1036px;width:6px;height:3px;background:#f5c242"></div><div class="a" style="left:455px;top:1035px;width:3px;height:4px;background:#3ac0e8"></div><div class="a" style="left:477px;top:1035px;width:6px;height:4px;background:#f5c242"></div>
<div class="a" style="left:1245px;top:1030px;width:61px;height:9px;background:#333"></div>
<div class="a" style="left:1800px;top:1037px;width:30px;height:2px;background:#999"></div>

<svg style="left:0;top:0" width="1929" height="1039" viewBox="0 0 1929 1039">
<polygon points="525.0,220.0 532.7,236.3 534.3,232.0 1542.7,874.5 1543.3,873.5 539.8,223.4 543.0,220.3" fill="#ff2214"/>
<polygon points="1313.0,788.3 1301.6,772.1 1300.9,776.5 875.2,544.7 874.8,545.3 1296.6,784.3 1293.3,787.2" fill="#ff2214"/>
<polygon points="1318.6,886.0 1324.7,867.2 1320.2,869.0 1303.3,795.2 1302.1,795.4 1311.3,870.5 1306.4,870.4" fill="#ff2214"/>
<polygon points="1543.6,899.6 1527.9,888.5 1528.9,892.7 1490.3,892.3 1490.1,893.3 1527.6,902.6 1525.6,906.4" fill="#ff2214"/>
</svg>

</div>
</body>
</html>
